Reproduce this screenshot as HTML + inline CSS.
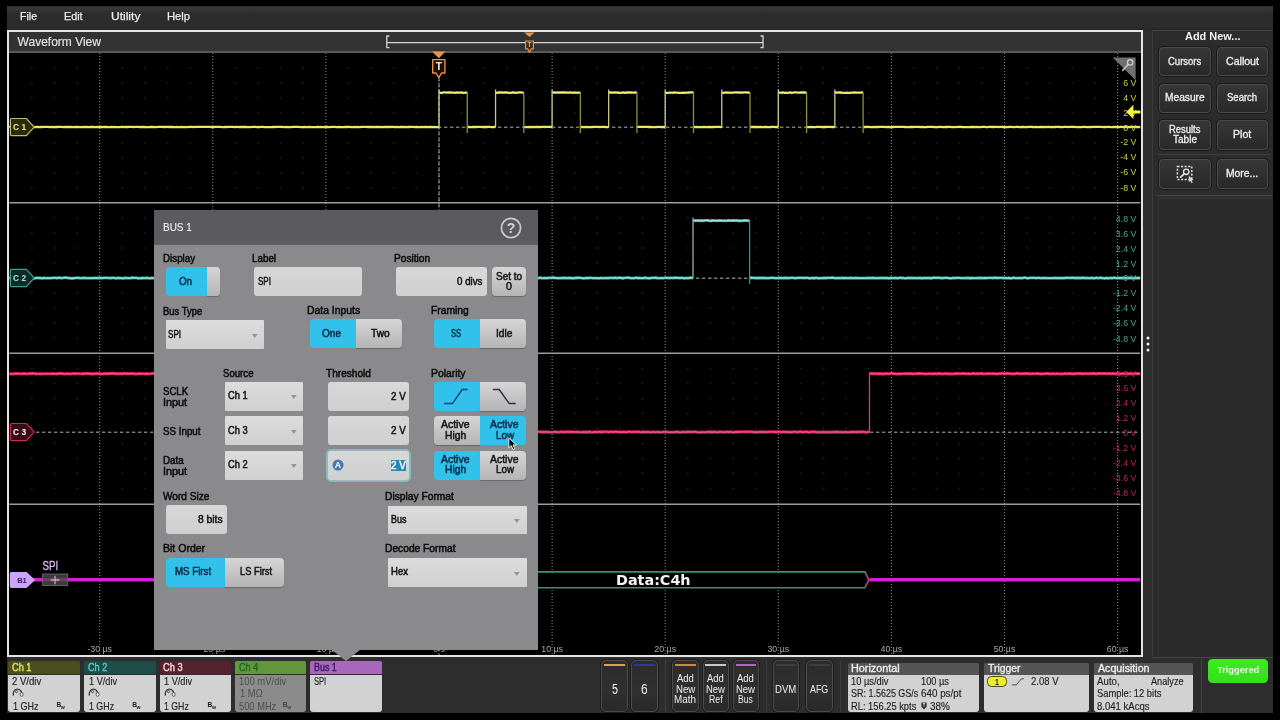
<!DOCTYPE html>
<html lang="en"><head><meta charset="utf-8"><title>Oscilloscope - BUS 1 SPI</title>
<style>
html,body{margin:0;padding:0;background:#000;}
body{width:1280px;height:720px;overflow:hidden;position:relative;font-family:"Liberation Sans",sans-serif;}
#app{position:absolute;left:0;top:0;width:1280px;height:720px;overflow:hidden;background:transparent;will-change:transform;}
#app div,#app span.t,#app svg{position:absolute;box-sizing:border-box;}
span.t{white-space:nowrap;display:block;}
.btn{border:1px solid #4a4a4a;border-radius:4px;background:linear-gradient(#363636,#303030 50%,#292929);box-shadow:0 0 0 1px #1b1b1b;}
.inp{background:linear-gradient(#d8d8d8,#cfcfcf);border-radius:3px;}
.gbtn{background:linear-gradient(#d6d6d6,#b4b4b4);}
.cy{background:#31c1eb;}
.bh{border-radius:1.5px 1.5px 0 0;}
.bb{border-radius:0 0 3px 3px;background:#d2d2d2;}
</style></head><body><div id="app">

<div style="left:7px;top:6px;width:1266px;height:707px;background:#2d2d2d;"></div>
<div style="left:7px;top:6.5px;width:1266px;height:23.5px;background:linear-gradient(#3a3a3a,#2c2c2c 32%,#2c2c2c 88%,#272727);"></div>
<span class="t" style="left:20.00px;top:10px;font-size:11px;line-height:12px;color:#ececec;-webkit-text-stroke:0.25px #ececec;transform:scaleX(0.9599);transform-origin:0 0;">File</span>
<span class="t" style="left:64.40px;top:10px;font-size:11px;line-height:12px;color:#ececec;-webkit-text-stroke:0.25px #ececec;transform:scaleX(0.9802);transform-origin:0 0;">Edit</span>
<span class="t" style="left:110.60px;top:10px;font-size:11px;line-height:12px;color:#ececec;-webkit-text-stroke:0.25px #ececec;transform:scaleX(1.0931);transform-origin:0 0;">Utility</span>
<span class="t" style="left:167.00px;top:10px;font-size:11px;line-height:12px;color:#ececec;-webkit-text-stroke:0.25px #ececec;transform:scaleX(1.0175);transform-origin:0 0;">Help</span>
<div style="left:7px;top:30px;width:1136px;height:627px;background:#000;border:2px solid #e4e4e4;"></div>
<div style="left:9px;top:32px;width:1132px;height:21px;background:#333333;border-bottom:2px solid #595959;"></div>
<span class="t" style="left:17.60px;top:35px;font-size:12px;line-height:14px;color:#e4e4e4;-webkit-text-stroke:0.15px #e4e4e4;transform:scaleX(1.0000);transform-origin:0 0;">Waveform View</span>
<svg width="1280" height="720" viewBox="0 0 1280 720" style="left:0;top:0" font-family='"Liberation Sans", sans-serif'>
<defs><clipPath id="pc"><rect x="9.2" y="53" width="1131.2" height="602"/></clipPath></defs>
<g clip-path="url(#pc)">
<path d="M30.6 68.0h2.4M31.8 66.8v2.4M53.3 68.0h2.4M54.5 66.8v2.4M75.9 68.0h2.4M77.1 66.8v2.4M98.5 68.0h2.4M99.7 66.8v2.4M121.1 68.0h2.4M122.3 66.8v2.4M143.7 68.0h2.4M144.9 66.8v2.4M166.4 68.0h2.4M167.6 66.8v2.4M189.0 68.0h2.4M190.2 66.8v2.4M211.6 68.0h2.4M212.8 66.8v2.4M234.2 68.0h2.4M235.4 66.8v2.4M256.8 68.0h2.4M258.0 66.8v2.4M279.5 68.0h2.4M280.7 66.8v2.4M302.1 68.0h2.4M303.3 66.8v2.4M324.7 68.0h2.4M325.9 66.8v2.4M347.3 68.0h2.4M348.5 66.8v2.4M369.9 68.0h2.4M371.1 66.8v2.4M392.6 68.0h2.4M393.8 66.8v2.4M415.2 68.0h2.4M416.4 66.8v2.4M437.8 68.0h2.4M439.0 66.8v2.4M460.4 68.0h2.4M461.6 66.8v2.4M483.0 68.0h2.4M484.2 66.8v2.4M505.7 68.0h2.4M506.9 66.8v2.4M528.3 68.0h2.4M529.5 66.8v2.4M550.9 68.0h2.4M552.1 66.8v2.4M573.5 68.0h2.4M574.7 66.8v2.4M596.1 68.0h2.4M597.3 66.8v2.4M618.8 68.0h2.4M620.0 66.8v2.4M641.4 68.0h2.4M642.6 66.8v2.4M664.0 68.0h2.4M665.2 66.8v2.4M686.6 68.0h2.4M687.8 66.8v2.4M709.2 68.0h2.4M710.4 66.8v2.4M731.9 68.0h2.4M733.1 66.8v2.4M754.5 68.0h2.4M755.7 66.8v2.4M777.1 68.0h2.4M778.3 66.8v2.4M799.7 68.0h2.4M800.9 66.8v2.4M822.3 68.0h2.4M823.5 66.8v2.4M845.0 68.0h2.4M846.2 66.8v2.4M867.6 68.0h2.4M868.8 66.8v2.4M890.2 68.0h2.4M891.4 66.8v2.4M912.8 68.0h2.4M914.0 66.8v2.4M935.4 68.0h2.4M936.6 66.8v2.4M958.1 68.0h2.4M959.3 66.8v2.4M980.7 68.0h2.4M981.9 66.8v2.4M1003.3 68.0h2.4M1004.5 66.8v2.4M1025.9 68.0h2.4M1027.1 66.8v2.4M1048.5 68.0h2.4M1049.7 66.8v2.4M1071.2 68.0h2.4M1072.4 66.8v2.4M1093.8 68.0h2.4M1095.0 66.8v2.4M1116.4 68.0h2.4M1117.6 66.8v2.4M30.6 83.0h2.4M31.8 81.8v2.4M53.3 83.0h2.4M54.5 81.8v2.4M75.9 83.0h2.4M77.1 81.8v2.4M98.5 83.0h2.4M99.7 81.8v2.4M121.1 83.0h2.4M122.3 81.8v2.4M143.7 83.0h2.4M144.9 81.8v2.4M166.4 83.0h2.4M167.6 81.8v2.4M189.0 83.0h2.4M190.2 81.8v2.4M211.6 83.0h2.4M212.8 81.8v2.4M234.2 83.0h2.4M235.4 81.8v2.4M256.8 83.0h2.4M258.0 81.8v2.4M279.5 83.0h2.4M280.7 81.8v2.4M302.1 83.0h2.4M303.3 81.8v2.4M324.7 83.0h2.4M325.9 81.8v2.4M347.3 83.0h2.4M348.5 81.8v2.4M369.9 83.0h2.4M371.1 81.8v2.4M392.6 83.0h2.4M393.8 81.8v2.4M415.2 83.0h2.4M416.4 81.8v2.4M437.8 83.0h2.4M439.0 81.8v2.4M460.4 83.0h2.4M461.6 81.8v2.4M483.0 83.0h2.4M484.2 81.8v2.4M505.7 83.0h2.4M506.9 81.8v2.4M528.3 83.0h2.4M529.5 81.8v2.4M550.9 83.0h2.4M552.1 81.8v2.4M573.5 83.0h2.4M574.7 81.8v2.4M596.1 83.0h2.4M597.3 81.8v2.4M618.8 83.0h2.4M620.0 81.8v2.4M641.4 83.0h2.4M642.6 81.8v2.4M664.0 83.0h2.4M665.2 81.8v2.4M686.6 83.0h2.4M687.8 81.8v2.4M709.2 83.0h2.4M710.4 81.8v2.4M731.9 83.0h2.4M733.1 81.8v2.4M754.5 83.0h2.4M755.7 81.8v2.4M777.1 83.0h2.4M778.3 81.8v2.4M799.7 83.0h2.4M800.9 81.8v2.4M822.3 83.0h2.4M823.5 81.8v2.4M845.0 83.0h2.4M846.2 81.8v2.4M867.6 83.0h2.4M868.8 81.8v2.4M890.2 83.0h2.4M891.4 81.8v2.4M912.8 83.0h2.4M914.0 81.8v2.4M935.4 83.0h2.4M936.6 81.8v2.4M958.1 83.0h2.4M959.3 81.8v2.4M980.7 83.0h2.4M981.9 81.8v2.4M1003.3 83.0h2.4M1004.5 81.8v2.4M1025.9 83.0h2.4M1027.1 81.8v2.4M1048.5 83.0h2.4M1049.7 81.8v2.4M1071.2 83.0h2.4M1072.4 81.8v2.4M1093.8 83.0h2.4M1095.0 81.8v2.4M1116.4 83.0h2.4M1117.6 81.8v2.4M30.6 98.0h2.4M31.8 96.8v2.4M53.3 98.0h2.4M54.5 96.8v2.4M75.9 98.0h2.4M77.1 96.8v2.4M98.5 98.0h2.4M99.7 96.8v2.4M121.1 98.0h2.4M122.3 96.8v2.4M143.7 98.0h2.4M144.9 96.8v2.4M166.4 98.0h2.4M167.6 96.8v2.4M189.0 98.0h2.4M190.2 96.8v2.4M211.6 98.0h2.4M212.8 96.8v2.4M234.2 98.0h2.4M235.4 96.8v2.4M256.8 98.0h2.4M258.0 96.8v2.4M279.5 98.0h2.4M280.7 96.8v2.4M302.1 98.0h2.4M303.3 96.8v2.4M324.7 98.0h2.4M325.9 96.8v2.4M347.3 98.0h2.4M348.5 96.8v2.4M369.9 98.0h2.4M371.1 96.8v2.4M392.6 98.0h2.4M393.8 96.8v2.4M415.2 98.0h2.4M416.4 96.8v2.4M437.8 98.0h2.4M439.0 96.8v2.4M460.4 98.0h2.4M461.6 96.8v2.4M483.0 98.0h2.4M484.2 96.8v2.4M505.7 98.0h2.4M506.9 96.8v2.4M528.3 98.0h2.4M529.5 96.8v2.4M550.9 98.0h2.4M552.1 96.8v2.4M573.5 98.0h2.4M574.7 96.8v2.4M596.1 98.0h2.4M597.3 96.8v2.4M618.8 98.0h2.4M620.0 96.8v2.4M641.4 98.0h2.4M642.6 96.8v2.4M664.0 98.0h2.4M665.2 96.8v2.4M686.6 98.0h2.4M687.8 96.8v2.4M709.2 98.0h2.4M710.4 96.8v2.4M731.9 98.0h2.4M733.1 96.8v2.4M754.5 98.0h2.4M755.7 96.8v2.4M777.1 98.0h2.4M778.3 96.8v2.4M799.7 98.0h2.4M800.9 96.8v2.4M822.3 98.0h2.4M823.5 96.8v2.4M845.0 98.0h2.4M846.2 96.8v2.4M867.6 98.0h2.4M868.8 96.8v2.4M890.2 98.0h2.4M891.4 96.8v2.4M912.8 98.0h2.4M914.0 96.8v2.4M935.4 98.0h2.4M936.6 96.8v2.4M958.1 98.0h2.4M959.3 96.8v2.4M980.7 98.0h2.4M981.9 96.8v2.4M1003.3 98.0h2.4M1004.5 96.8v2.4M1025.9 98.0h2.4M1027.1 96.8v2.4M1048.5 98.0h2.4M1049.7 96.8v2.4M1071.2 98.0h2.4M1072.4 96.8v2.4M1093.8 98.0h2.4M1095.0 96.8v2.4M1116.4 98.0h2.4M1117.6 96.8v2.4M30.6 113.0h2.4M31.8 111.8v2.4M53.3 113.0h2.4M54.5 111.8v2.4M75.9 113.0h2.4M77.1 111.8v2.4M98.5 113.0h2.4M99.7 111.8v2.4M121.1 113.0h2.4M122.3 111.8v2.4M143.7 113.0h2.4M144.9 111.8v2.4M166.4 113.0h2.4M167.6 111.8v2.4M189.0 113.0h2.4M190.2 111.8v2.4M211.6 113.0h2.4M212.8 111.8v2.4M234.2 113.0h2.4M235.4 111.8v2.4M256.8 113.0h2.4M258.0 111.8v2.4M279.5 113.0h2.4M280.7 111.8v2.4M302.1 113.0h2.4M303.3 111.8v2.4M324.7 113.0h2.4M325.9 111.8v2.4M347.3 113.0h2.4M348.5 111.8v2.4M369.9 113.0h2.4M371.1 111.8v2.4M392.6 113.0h2.4M393.8 111.8v2.4M415.2 113.0h2.4M416.4 111.8v2.4M437.8 113.0h2.4M439.0 111.8v2.4M460.4 113.0h2.4M461.6 111.8v2.4M483.0 113.0h2.4M484.2 111.8v2.4M505.7 113.0h2.4M506.9 111.8v2.4M528.3 113.0h2.4M529.5 111.8v2.4M550.9 113.0h2.4M552.1 111.8v2.4M573.5 113.0h2.4M574.7 111.8v2.4M596.1 113.0h2.4M597.3 111.8v2.4M618.8 113.0h2.4M620.0 111.8v2.4M641.4 113.0h2.4M642.6 111.8v2.4M664.0 113.0h2.4M665.2 111.8v2.4M686.6 113.0h2.4M687.8 111.8v2.4M709.2 113.0h2.4M710.4 111.8v2.4M731.9 113.0h2.4M733.1 111.8v2.4M754.5 113.0h2.4M755.7 111.8v2.4M777.1 113.0h2.4M778.3 111.8v2.4M799.7 113.0h2.4M800.9 111.8v2.4M822.3 113.0h2.4M823.5 111.8v2.4M845.0 113.0h2.4M846.2 111.8v2.4M867.6 113.0h2.4M868.8 111.8v2.4M890.2 113.0h2.4M891.4 111.8v2.4M912.8 113.0h2.4M914.0 111.8v2.4M935.4 113.0h2.4M936.6 111.8v2.4M958.1 113.0h2.4M959.3 111.8v2.4M980.7 113.0h2.4M981.9 111.8v2.4M1003.3 113.0h2.4M1004.5 111.8v2.4M1025.9 113.0h2.4M1027.1 111.8v2.4M1048.5 113.0h2.4M1049.7 111.8v2.4M1071.2 113.0h2.4M1072.4 111.8v2.4M1093.8 113.0h2.4M1095.0 111.8v2.4M1116.4 113.0h2.4M1117.6 111.8v2.4M30.6 128.0h2.4M31.8 126.8v2.4M53.3 128.0h2.4M54.5 126.8v2.4M75.9 128.0h2.4M77.1 126.8v2.4M98.5 128.0h2.4M99.7 126.8v2.4M121.1 128.0h2.4M122.3 126.8v2.4M143.7 128.0h2.4M144.9 126.8v2.4M166.4 128.0h2.4M167.6 126.8v2.4M189.0 128.0h2.4M190.2 126.8v2.4M211.6 128.0h2.4M212.8 126.8v2.4M234.2 128.0h2.4M235.4 126.8v2.4M256.8 128.0h2.4M258.0 126.8v2.4M279.5 128.0h2.4M280.7 126.8v2.4M302.1 128.0h2.4M303.3 126.8v2.4M324.7 128.0h2.4M325.9 126.8v2.4M347.3 128.0h2.4M348.5 126.8v2.4M369.9 128.0h2.4M371.1 126.8v2.4M392.6 128.0h2.4M393.8 126.8v2.4M415.2 128.0h2.4M416.4 126.8v2.4M437.8 128.0h2.4M439.0 126.8v2.4M460.4 128.0h2.4M461.6 126.8v2.4M483.0 128.0h2.4M484.2 126.8v2.4M505.7 128.0h2.4M506.9 126.8v2.4M528.3 128.0h2.4M529.5 126.8v2.4M550.9 128.0h2.4M552.1 126.8v2.4M573.5 128.0h2.4M574.7 126.8v2.4M596.1 128.0h2.4M597.3 126.8v2.4M618.8 128.0h2.4M620.0 126.8v2.4M641.4 128.0h2.4M642.6 126.8v2.4M664.0 128.0h2.4M665.2 126.8v2.4M686.6 128.0h2.4M687.8 126.8v2.4M709.2 128.0h2.4M710.4 126.8v2.4M731.9 128.0h2.4M733.1 126.8v2.4M754.5 128.0h2.4M755.7 126.8v2.4M777.1 128.0h2.4M778.3 126.8v2.4M799.7 128.0h2.4M800.9 126.8v2.4M822.3 128.0h2.4M823.5 126.8v2.4M845.0 128.0h2.4M846.2 126.8v2.4M867.6 128.0h2.4M868.8 126.8v2.4M890.2 128.0h2.4M891.4 126.8v2.4M912.8 128.0h2.4M914.0 126.8v2.4M935.4 128.0h2.4M936.6 126.8v2.4M958.1 128.0h2.4M959.3 126.8v2.4M980.7 128.0h2.4M981.9 126.8v2.4M1003.3 128.0h2.4M1004.5 126.8v2.4M1025.9 128.0h2.4M1027.1 126.8v2.4M1048.5 128.0h2.4M1049.7 126.8v2.4M1071.2 128.0h2.4M1072.4 126.8v2.4M1093.8 128.0h2.4M1095.0 126.8v2.4M1116.4 128.0h2.4M1117.6 126.8v2.4M30.6 143.0h2.4M31.8 141.8v2.4M53.3 143.0h2.4M54.5 141.8v2.4M75.9 143.0h2.4M77.1 141.8v2.4M98.5 143.0h2.4M99.7 141.8v2.4M121.1 143.0h2.4M122.3 141.8v2.4M143.7 143.0h2.4M144.9 141.8v2.4M166.4 143.0h2.4M167.6 141.8v2.4M189.0 143.0h2.4M190.2 141.8v2.4M211.6 143.0h2.4M212.8 141.8v2.4M234.2 143.0h2.4M235.4 141.8v2.4M256.8 143.0h2.4M258.0 141.8v2.4M279.5 143.0h2.4M280.7 141.8v2.4M302.1 143.0h2.4M303.3 141.8v2.4M324.7 143.0h2.4M325.9 141.8v2.4M347.3 143.0h2.4M348.5 141.8v2.4M369.9 143.0h2.4M371.1 141.8v2.4M392.6 143.0h2.4M393.8 141.8v2.4M415.2 143.0h2.4M416.4 141.8v2.4M437.8 143.0h2.4M439.0 141.8v2.4M460.4 143.0h2.4M461.6 141.8v2.4M483.0 143.0h2.4M484.2 141.8v2.4M505.7 143.0h2.4M506.9 141.8v2.4M528.3 143.0h2.4M529.5 141.8v2.4M550.9 143.0h2.4M552.1 141.8v2.4M573.5 143.0h2.4M574.7 141.8v2.4M596.1 143.0h2.4M597.3 141.8v2.4M618.8 143.0h2.4M620.0 141.8v2.4M641.4 143.0h2.4M642.6 141.8v2.4M664.0 143.0h2.4M665.2 141.8v2.4M686.6 143.0h2.4M687.8 141.8v2.4M709.2 143.0h2.4M710.4 141.8v2.4M731.9 143.0h2.4M733.1 141.8v2.4M754.5 143.0h2.4M755.7 141.8v2.4M777.1 143.0h2.4M778.3 141.8v2.4M799.7 143.0h2.4M800.9 141.8v2.4M822.3 143.0h2.4M823.5 141.8v2.4M845.0 143.0h2.4M846.2 141.8v2.4M867.6 143.0h2.4M868.8 141.8v2.4M890.2 143.0h2.4M891.4 141.8v2.4M912.8 143.0h2.4M914.0 141.8v2.4M935.4 143.0h2.4M936.6 141.8v2.4M958.1 143.0h2.4M959.3 141.8v2.4M980.7 143.0h2.4M981.9 141.8v2.4M1003.3 143.0h2.4M1004.5 141.8v2.4M1025.9 143.0h2.4M1027.1 141.8v2.4M1048.5 143.0h2.4M1049.7 141.8v2.4M1071.2 143.0h2.4M1072.4 141.8v2.4M1093.8 143.0h2.4M1095.0 141.8v2.4M1116.4 143.0h2.4M1117.6 141.8v2.4M30.6 158.0h2.4M31.8 156.8v2.4M53.3 158.0h2.4M54.5 156.8v2.4M75.9 158.0h2.4M77.1 156.8v2.4M98.5 158.0h2.4M99.7 156.8v2.4M121.1 158.0h2.4M122.3 156.8v2.4M143.7 158.0h2.4M144.9 156.8v2.4M166.4 158.0h2.4M167.6 156.8v2.4M189.0 158.0h2.4M190.2 156.8v2.4M211.6 158.0h2.4M212.8 156.8v2.4M234.2 158.0h2.4M235.4 156.8v2.4M256.8 158.0h2.4M258.0 156.8v2.4M279.5 158.0h2.4M280.7 156.8v2.4M302.1 158.0h2.4M303.3 156.8v2.4M324.7 158.0h2.4M325.9 156.8v2.4M347.3 158.0h2.4M348.5 156.8v2.4M369.9 158.0h2.4M371.1 156.8v2.4M392.6 158.0h2.4M393.8 156.8v2.4M415.2 158.0h2.4M416.4 156.8v2.4M437.8 158.0h2.4M439.0 156.8v2.4M460.4 158.0h2.4M461.6 156.8v2.4M483.0 158.0h2.4M484.2 156.8v2.4M505.7 158.0h2.4M506.9 156.8v2.4M528.3 158.0h2.4M529.5 156.8v2.4M550.9 158.0h2.4M552.1 156.8v2.4M573.5 158.0h2.4M574.7 156.8v2.4M596.1 158.0h2.4M597.3 156.8v2.4M618.8 158.0h2.4M620.0 156.8v2.4M641.4 158.0h2.4M642.6 156.8v2.4M664.0 158.0h2.4M665.2 156.8v2.4M686.6 158.0h2.4M687.8 156.8v2.4M709.2 158.0h2.4M710.4 156.8v2.4M731.9 158.0h2.4M733.1 156.8v2.4M754.5 158.0h2.4M755.7 156.8v2.4M777.1 158.0h2.4M778.3 156.8v2.4M799.7 158.0h2.4M800.9 156.8v2.4M822.3 158.0h2.4M823.5 156.8v2.4M845.0 158.0h2.4M846.2 156.8v2.4M867.6 158.0h2.4M868.8 156.8v2.4M890.2 158.0h2.4M891.4 156.8v2.4M912.8 158.0h2.4M914.0 156.8v2.4M935.4 158.0h2.4M936.6 156.8v2.4M958.1 158.0h2.4M959.3 156.8v2.4M980.7 158.0h2.4M981.9 156.8v2.4M1003.3 158.0h2.4M1004.5 156.8v2.4M1025.9 158.0h2.4M1027.1 156.8v2.4M1048.5 158.0h2.4M1049.7 156.8v2.4M1071.2 158.0h2.4M1072.4 156.8v2.4M1093.8 158.0h2.4M1095.0 156.8v2.4M1116.4 158.0h2.4M1117.6 156.8v2.4M30.6 173.0h2.4M31.8 171.8v2.4M53.3 173.0h2.4M54.5 171.8v2.4M75.9 173.0h2.4M77.1 171.8v2.4M98.5 173.0h2.4M99.7 171.8v2.4M121.1 173.0h2.4M122.3 171.8v2.4M143.7 173.0h2.4M144.9 171.8v2.4M166.4 173.0h2.4M167.6 171.8v2.4M189.0 173.0h2.4M190.2 171.8v2.4M211.6 173.0h2.4M212.8 171.8v2.4M234.2 173.0h2.4M235.4 171.8v2.4M256.8 173.0h2.4M258.0 171.8v2.4M279.5 173.0h2.4M280.7 171.8v2.4M302.1 173.0h2.4M303.3 171.8v2.4M324.7 173.0h2.4M325.9 171.8v2.4M347.3 173.0h2.4M348.5 171.8v2.4M369.9 173.0h2.4M371.1 171.8v2.4M392.6 173.0h2.4M393.8 171.8v2.4M415.2 173.0h2.4M416.4 171.8v2.4M437.8 173.0h2.4M439.0 171.8v2.4M460.4 173.0h2.4M461.6 171.8v2.4M483.0 173.0h2.4M484.2 171.8v2.4M505.7 173.0h2.4M506.9 171.8v2.4M528.3 173.0h2.4M529.5 171.8v2.4M550.9 173.0h2.4M552.1 171.8v2.4M573.5 173.0h2.4M574.7 171.8v2.4M596.1 173.0h2.4M597.3 171.8v2.4M618.8 173.0h2.4M620.0 171.8v2.4M641.4 173.0h2.4M642.6 171.8v2.4M664.0 173.0h2.4M665.2 171.8v2.4M686.6 173.0h2.4M687.8 171.8v2.4M709.2 173.0h2.4M710.4 171.8v2.4M731.9 173.0h2.4M733.1 171.8v2.4M754.5 173.0h2.4M755.7 171.8v2.4M777.1 173.0h2.4M778.3 171.8v2.4M799.7 173.0h2.4M800.9 171.8v2.4M822.3 173.0h2.4M823.5 171.8v2.4M845.0 173.0h2.4M846.2 171.8v2.4M867.6 173.0h2.4M868.8 171.8v2.4M890.2 173.0h2.4M891.4 171.8v2.4M912.8 173.0h2.4M914.0 171.8v2.4M935.4 173.0h2.4M936.6 171.8v2.4M958.1 173.0h2.4M959.3 171.8v2.4M980.7 173.0h2.4M981.9 171.8v2.4M1003.3 173.0h2.4M1004.5 171.8v2.4M1025.9 173.0h2.4M1027.1 171.8v2.4M1048.5 173.0h2.4M1049.7 171.8v2.4M1071.2 173.0h2.4M1072.4 171.8v2.4M1093.8 173.0h2.4M1095.0 171.8v2.4M1116.4 173.0h2.4M1117.6 171.8v2.4M30.6 188.0h2.4M31.8 186.8v2.4M53.3 188.0h2.4M54.5 186.8v2.4M75.9 188.0h2.4M77.1 186.8v2.4M98.5 188.0h2.4M99.7 186.8v2.4M121.1 188.0h2.4M122.3 186.8v2.4M143.7 188.0h2.4M144.9 186.8v2.4M166.4 188.0h2.4M167.6 186.8v2.4M189.0 188.0h2.4M190.2 186.8v2.4M211.6 188.0h2.4M212.8 186.8v2.4M234.2 188.0h2.4M235.4 186.8v2.4M256.8 188.0h2.4M258.0 186.8v2.4M279.5 188.0h2.4M280.7 186.8v2.4M302.1 188.0h2.4M303.3 186.8v2.4M324.7 188.0h2.4M325.9 186.8v2.4M347.3 188.0h2.4M348.5 186.8v2.4M369.9 188.0h2.4M371.1 186.8v2.4M392.6 188.0h2.4M393.8 186.8v2.4M415.2 188.0h2.4M416.4 186.8v2.4M437.8 188.0h2.4M439.0 186.8v2.4M460.4 188.0h2.4M461.6 186.8v2.4M483.0 188.0h2.4M484.2 186.8v2.4M505.7 188.0h2.4M506.9 186.8v2.4M528.3 188.0h2.4M529.5 186.8v2.4M550.9 188.0h2.4M552.1 186.8v2.4M573.5 188.0h2.4M574.7 186.8v2.4M596.1 188.0h2.4M597.3 186.8v2.4M618.8 188.0h2.4M620.0 186.8v2.4M641.4 188.0h2.4M642.6 186.8v2.4M664.0 188.0h2.4M665.2 186.8v2.4M686.6 188.0h2.4M687.8 186.8v2.4M709.2 188.0h2.4M710.4 186.8v2.4M731.9 188.0h2.4M733.1 186.8v2.4M754.5 188.0h2.4M755.7 186.8v2.4M777.1 188.0h2.4M778.3 186.8v2.4M799.7 188.0h2.4M800.9 186.8v2.4M822.3 188.0h2.4M823.5 186.8v2.4M845.0 188.0h2.4M846.2 186.8v2.4M867.6 188.0h2.4M868.8 186.8v2.4M890.2 188.0h2.4M891.4 186.8v2.4M912.8 188.0h2.4M914.0 186.8v2.4M935.4 188.0h2.4M936.6 186.8v2.4M958.1 188.0h2.4M959.3 186.8v2.4M980.7 188.0h2.4M981.9 186.8v2.4M1003.3 188.0h2.4M1004.5 186.8v2.4M1025.9 188.0h2.4M1027.1 186.8v2.4M1048.5 188.0h2.4M1049.7 186.8v2.4M1071.2 188.0h2.4M1072.4 186.8v2.4M1093.8 188.0h2.4M1095.0 186.8v2.4M1116.4 188.0h2.4M1117.6 186.8v2.4M30.6 218.0h2.4M31.8 216.8v2.4M53.3 218.0h2.4M54.5 216.8v2.4M75.9 218.0h2.4M77.1 216.8v2.4M98.5 218.0h2.4M99.7 216.8v2.4M121.1 218.0h2.4M122.3 216.8v2.4M143.7 218.0h2.4M144.9 216.8v2.4M166.4 218.0h2.4M167.6 216.8v2.4M189.0 218.0h2.4M190.2 216.8v2.4M211.6 218.0h2.4M212.8 216.8v2.4M234.2 218.0h2.4M235.4 216.8v2.4M256.8 218.0h2.4M258.0 216.8v2.4M279.5 218.0h2.4M280.7 216.8v2.4M302.1 218.0h2.4M303.3 216.8v2.4M324.7 218.0h2.4M325.9 216.8v2.4M347.3 218.0h2.4M348.5 216.8v2.4M369.9 218.0h2.4M371.1 216.8v2.4M392.6 218.0h2.4M393.8 216.8v2.4M415.2 218.0h2.4M416.4 216.8v2.4M437.8 218.0h2.4M439.0 216.8v2.4M460.4 218.0h2.4M461.6 216.8v2.4M483.0 218.0h2.4M484.2 216.8v2.4M505.7 218.0h2.4M506.9 216.8v2.4M528.3 218.0h2.4M529.5 216.8v2.4M550.9 218.0h2.4M552.1 216.8v2.4M573.5 218.0h2.4M574.7 216.8v2.4M596.1 218.0h2.4M597.3 216.8v2.4M618.8 218.0h2.4M620.0 216.8v2.4M641.4 218.0h2.4M642.6 216.8v2.4M664.0 218.0h2.4M665.2 216.8v2.4M686.6 218.0h2.4M687.8 216.8v2.4M709.2 218.0h2.4M710.4 216.8v2.4M731.9 218.0h2.4M733.1 216.8v2.4M754.5 218.0h2.4M755.7 216.8v2.4M777.1 218.0h2.4M778.3 216.8v2.4M799.7 218.0h2.4M800.9 216.8v2.4M822.3 218.0h2.4M823.5 216.8v2.4M845.0 218.0h2.4M846.2 216.8v2.4M867.6 218.0h2.4M868.8 216.8v2.4M890.2 218.0h2.4M891.4 216.8v2.4M912.8 218.0h2.4M914.0 216.8v2.4M935.4 218.0h2.4M936.6 216.8v2.4M958.1 218.0h2.4M959.3 216.8v2.4M980.7 218.0h2.4M981.9 216.8v2.4M1003.3 218.0h2.4M1004.5 216.8v2.4M1025.9 218.0h2.4M1027.1 216.8v2.4M1048.5 218.0h2.4M1049.7 216.8v2.4M1071.2 218.0h2.4M1072.4 216.8v2.4M1093.8 218.0h2.4M1095.0 216.8v2.4M1116.4 218.0h2.4M1117.6 216.8v2.4M30.6 233.0h2.4M31.8 231.8v2.4M53.3 233.0h2.4M54.5 231.8v2.4M75.9 233.0h2.4M77.1 231.8v2.4M98.5 233.0h2.4M99.7 231.8v2.4M121.1 233.0h2.4M122.3 231.8v2.4M143.7 233.0h2.4M144.9 231.8v2.4M166.4 233.0h2.4M167.6 231.8v2.4M189.0 233.0h2.4M190.2 231.8v2.4M211.6 233.0h2.4M212.8 231.8v2.4M234.2 233.0h2.4M235.4 231.8v2.4M256.8 233.0h2.4M258.0 231.8v2.4M279.5 233.0h2.4M280.7 231.8v2.4M302.1 233.0h2.4M303.3 231.8v2.4M324.7 233.0h2.4M325.9 231.8v2.4M347.3 233.0h2.4M348.5 231.8v2.4M369.9 233.0h2.4M371.1 231.8v2.4M392.6 233.0h2.4M393.8 231.8v2.4M415.2 233.0h2.4M416.4 231.8v2.4M437.8 233.0h2.4M439.0 231.8v2.4M460.4 233.0h2.4M461.6 231.8v2.4M483.0 233.0h2.4M484.2 231.8v2.4M505.7 233.0h2.4M506.9 231.8v2.4M528.3 233.0h2.4M529.5 231.8v2.4M550.9 233.0h2.4M552.1 231.8v2.4M573.5 233.0h2.4M574.7 231.8v2.4M596.1 233.0h2.4M597.3 231.8v2.4M618.8 233.0h2.4M620.0 231.8v2.4M641.4 233.0h2.4M642.6 231.8v2.4M664.0 233.0h2.4M665.2 231.8v2.4M686.6 233.0h2.4M687.8 231.8v2.4M709.2 233.0h2.4M710.4 231.8v2.4M731.9 233.0h2.4M733.1 231.8v2.4M754.5 233.0h2.4M755.7 231.8v2.4M777.1 233.0h2.4M778.3 231.8v2.4M799.7 233.0h2.4M800.9 231.8v2.4M822.3 233.0h2.4M823.5 231.8v2.4M845.0 233.0h2.4M846.2 231.8v2.4M867.6 233.0h2.4M868.8 231.8v2.4M890.2 233.0h2.4M891.4 231.8v2.4M912.8 233.0h2.4M914.0 231.8v2.4M935.4 233.0h2.4M936.6 231.8v2.4M958.1 233.0h2.4M959.3 231.8v2.4M980.7 233.0h2.4M981.9 231.8v2.4M1003.3 233.0h2.4M1004.5 231.8v2.4M1025.9 233.0h2.4M1027.1 231.8v2.4M1048.5 233.0h2.4M1049.7 231.8v2.4M1071.2 233.0h2.4M1072.4 231.8v2.4M1093.8 233.0h2.4M1095.0 231.8v2.4M1116.4 233.0h2.4M1117.6 231.8v2.4M30.6 248.0h2.4M31.8 246.8v2.4M53.3 248.0h2.4M54.5 246.8v2.4M75.9 248.0h2.4M77.1 246.8v2.4M98.5 248.0h2.4M99.7 246.8v2.4M121.1 248.0h2.4M122.3 246.8v2.4M143.7 248.0h2.4M144.9 246.8v2.4M166.4 248.0h2.4M167.6 246.8v2.4M189.0 248.0h2.4M190.2 246.8v2.4M211.6 248.0h2.4M212.8 246.8v2.4M234.2 248.0h2.4M235.4 246.8v2.4M256.8 248.0h2.4M258.0 246.8v2.4M279.5 248.0h2.4M280.7 246.8v2.4M302.1 248.0h2.4M303.3 246.8v2.4M324.7 248.0h2.4M325.9 246.8v2.4M347.3 248.0h2.4M348.5 246.8v2.4M369.9 248.0h2.4M371.1 246.8v2.4M392.6 248.0h2.4M393.8 246.8v2.4M415.2 248.0h2.4M416.4 246.8v2.4M437.8 248.0h2.4M439.0 246.8v2.4M460.4 248.0h2.4M461.6 246.8v2.4M483.0 248.0h2.4M484.2 246.8v2.4M505.7 248.0h2.4M506.9 246.8v2.4M528.3 248.0h2.4M529.5 246.8v2.4M550.9 248.0h2.4M552.1 246.8v2.4M573.5 248.0h2.4M574.7 246.8v2.4M596.1 248.0h2.4M597.3 246.8v2.4M618.8 248.0h2.4M620.0 246.8v2.4M641.4 248.0h2.4M642.6 246.8v2.4M664.0 248.0h2.4M665.2 246.8v2.4M686.6 248.0h2.4M687.8 246.8v2.4M709.2 248.0h2.4M710.4 246.8v2.4M731.9 248.0h2.4M733.1 246.8v2.4M754.5 248.0h2.4M755.7 246.8v2.4M777.1 248.0h2.4M778.3 246.8v2.4M799.7 248.0h2.4M800.9 246.8v2.4M822.3 248.0h2.4M823.5 246.8v2.4M845.0 248.0h2.4M846.2 246.8v2.4M867.6 248.0h2.4M868.8 246.8v2.4M890.2 248.0h2.4M891.4 246.8v2.4M912.8 248.0h2.4M914.0 246.8v2.4M935.4 248.0h2.4M936.6 246.8v2.4M958.1 248.0h2.4M959.3 246.8v2.4M980.7 248.0h2.4M981.9 246.8v2.4M1003.3 248.0h2.4M1004.5 246.8v2.4M1025.9 248.0h2.4M1027.1 246.8v2.4M1048.5 248.0h2.4M1049.7 246.8v2.4M1071.2 248.0h2.4M1072.4 246.8v2.4M1093.8 248.0h2.4M1095.0 246.8v2.4M1116.4 248.0h2.4M1117.6 246.8v2.4M30.6 263.0h2.4M31.8 261.8v2.4M53.3 263.0h2.4M54.5 261.8v2.4M75.9 263.0h2.4M77.1 261.8v2.4M98.5 263.0h2.4M99.7 261.8v2.4M121.1 263.0h2.4M122.3 261.8v2.4M143.7 263.0h2.4M144.9 261.8v2.4M166.4 263.0h2.4M167.6 261.8v2.4M189.0 263.0h2.4M190.2 261.8v2.4M211.6 263.0h2.4M212.8 261.8v2.4M234.2 263.0h2.4M235.4 261.8v2.4M256.8 263.0h2.4M258.0 261.8v2.4M279.5 263.0h2.4M280.7 261.8v2.4M302.1 263.0h2.4M303.3 261.8v2.4M324.7 263.0h2.4M325.9 261.8v2.4M347.3 263.0h2.4M348.5 261.8v2.4M369.9 263.0h2.4M371.1 261.8v2.4M392.6 263.0h2.4M393.8 261.8v2.4M415.2 263.0h2.4M416.4 261.8v2.4M437.8 263.0h2.4M439.0 261.8v2.4M460.4 263.0h2.4M461.6 261.8v2.4M483.0 263.0h2.4M484.2 261.8v2.4M505.7 263.0h2.4M506.9 261.8v2.4M528.3 263.0h2.4M529.5 261.8v2.4M550.9 263.0h2.4M552.1 261.8v2.4M573.5 263.0h2.4M574.7 261.8v2.4M596.1 263.0h2.4M597.3 261.8v2.4M618.8 263.0h2.4M620.0 261.8v2.4M641.4 263.0h2.4M642.6 261.8v2.4M664.0 263.0h2.4M665.2 261.8v2.4M686.6 263.0h2.4M687.8 261.8v2.4M709.2 263.0h2.4M710.4 261.8v2.4M731.9 263.0h2.4M733.1 261.8v2.4M754.5 263.0h2.4M755.7 261.8v2.4M777.1 263.0h2.4M778.3 261.8v2.4M799.7 263.0h2.4M800.9 261.8v2.4M822.3 263.0h2.4M823.5 261.8v2.4M845.0 263.0h2.4M846.2 261.8v2.4M867.6 263.0h2.4M868.8 261.8v2.4M890.2 263.0h2.4M891.4 261.8v2.4M912.8 263.0h2.4M914.0 261.8v2.4M935.4 263.0h2.4M936.6 261.8v2.4M958.1 263.0h2.4M959.3 261.8v2.4M980.7 263.0h2.4M981.9 261.8v2.4M1003.3 263.0h2.4M1004.5 261.8v2.4M1025.9 263.0h2.4M1027.1 261.8v2.4M1048.5 263.0h2.4M1049.7 261.8v2.4M1071.2 263.0h2.4M1072.4 261.8v2.4M1093.8 263.0h2.4M1095.0 261.8v2.4M1116.4 263.0h2.4M1117.6 261.8v2.4M30.6 278.0h2.4M31.8 276.8v2.4M53.3 278.0h2.4M54.5 276.8v2.4M75.9 278.0h2.4M77.1 276.8v2.4M98.5 278.0h2.4M99.7 276.8v2.4M121.1 278.0h2.4M122.3 276.8v2.4M143.7 278.0h2.4M144.9 276.8v2.4M166.4 278.0h2.4M167.6 276.8v2.4M189.0 278.0h2.4M190.2 276.8v2.4M211.6 278.0h2.4M212.8 276.8v2.4M234.2 278.0h2.4M235.4 276.8v2.4M256.8 278.0h2.4M258.0 276.8v2.4M279.5 278.0h2.4M280.7 276.8v2.4M302.1 278.0h2.4M303.3 276.8v2.4M324.7 278.0h2.4M325.9 276.8v2.4M347.3 278.0h2.4M348.5 276.8v2.4M369.9 278.0h2.4M371.1 276.8v2.4M392.6 278.0h2.4M393.8 276.8v2.4M415.2 278.0h2.4M416.4 276.8v2.4M437.8 278.0h2.4M439.0 276.8v2.4M460.4 278.0h2.4M461.6 276.8v2.4M483.0 278.0h2.4M484.2 276.8v2.4M505.7 278.0h2.4M506.9 276.8v2.4M528.3 278.0h2.4M529.5 276.8v2.4M550.9 278.0h2.4M552.1 276.8v2.4M573.5 278.0h2.4M574.7 276.8v2.4M596.1 278.0h2.4M597.3 276.8v2.4M618.8 278.0h2.4M620.0 276.8v2.4M641.4 278.0h2.4M642.6 276.8v2.4M664.0 278.0h2.4M665.2 276.8v2.4M686.6 278.0h2.4M687.8 276.8v2.4M709.2 278.0h2.4M710.4 276.8v2.4M731.9 278.0h2.4M733.1 276.8v2.4M754.5 278.0h2.4M755.7 276.8v2.4M777.1 278.0h2.4M778.3 276.8v2.4M799.7 278.0h2.4M800.9 276.8v2.4M822.3 278.0h2.4M823.5 276.8v2.4M845.0 278.0h2.4M846.2 276.8v2.4M867.6 278.0h2.4M868.8 276.8v2.4M890.2 278.0h2.4M891.4 276.8v2.4M912.8 278.0h2.4M914.0 276.8v2.4M935.4 278.0h2.4M936.6 276.8v2.4M958.1 278.0h2.4M959.3 276.8v2.4M980.7 278.0h2.4M981.9 276.8v2.4M1003.3 278.0h2.4M1004.5 276.8v2.4M1025.9 278.0h2.4M1027.1 276.8v2.4M1048.5 278.0h2.4M1049.7 276.8v2.4M1071.2 278.0h2.4M1072.4 276.8v2.4M1093.8 278.0h2.4M1095.0 276.8v2.4M1116.4 278.0h2.4M1117.6 276.8v2.4M30.6 293.0h2.4M31.8 291.8v2.4M53.3 293.0h2.4M54.5 291.8v2.4M75.9 293.0h2.4M77.1 291.8v2.4M98.5 293.0h2.4M99.7 291.8v2.4M121.1 293.0h2.4M122.3 291.8v2.4M143.7 293.0h2.4M144.9 291.8v2.4M166.4 293.0h2.4M167.6 291.8v2.4M189.0 293.0h2.4M190.2 291.8v2.4M211.6 293.0h2.4M212.8 291.8v2.4M234.2 293.0h2.4M235.4 291.8v2.4M256.8 293.0h2.4M258.0 291.8v2.4M279.5 293.0h2.4M280.7 291.8v2.4M302.1 293.0h2.4M303.3 291.8v2.4M324.7 293.0h2.4M325.9 291.8v2.4M347.3 293.0h2.4M348.5 291.8v2.4M369.9 293.0h2.4M371.1 291.8v2.4M392.6 293.0h2.4M393.8 291.8v2.4M415.2 293.0h2.4M416.4 291.8v2.4M437.8 293.0h2.4M439.0 291.8v2.4M460.4 293.0h2.4M461.6 291.8v2.4M483.0 293.0h2.4M484.2 291.8v2.4M505.7 293.0h2.4M506.9 291.8v2.4M528.3 293.0h2.4M529.5 291.8v2.4M550.9 293.0h2.4M552.1 291.8v2.4M573.5 293.0h2.4M574.7 291.8v2.4M596.1 293.0h2.4M597.3 291.8v2.4M618.8 293.0h2.4M620.0 291.8v2.4M641.4 293.0h2.4M642.6 291.8v2.4M664.0 293.0h2.4M665.2 291.8v2.4M686.6 293.0h2.4M687.8 291.8v2.4M709.2 293.0h2.4M710.4 291.8v2.4M731.9 293.0h2.4M733.1 291.8v2.4M754.5 293.0h2.4M755.7 291.8v2.4M777.1 293.0h2.4M778.3 291.8v2.4M799.7 293.0h2.4M800.9 291.8v2.4M822.3 293.0h2.4M823.5 291.8v2.4M845.0 293.0h2.4M846.2 291.8v2.4M867.6 293.0h2.4M868.8 291.8v2.4M890.2 293.0h2.4M891.4 291.8v2.4M912.8 293.0h2.4M914.0 291.8v2.4M935.4 293.0h2.4M936.6 291.8v2.4M958.1 293.0h2.4M959.3 291.8v2.4M980.7 293.0h2.4M981.9 291.8v2.4M1003.3 293.0h2.4M1004.5 291.8v2.4M1025.9 293.0h2.4M1027.1 291.8v2.4M1048.5 293.0h2.4M1049.7 291.8v2.4M1071.2 293.0h2.4M1072.4 291.8v2.4M1093.8 293.0h2.4M1095.0 291.8v2.4M1116.4 293.0h2.4M1117.6 291.8v2.4M30.6 308.0h2.4M31.8 306.8v2.4M53.3 308.0h2.4M54.5 306.8v2.4M75.9 308.0h2.4M77.1 306.8v2.4M98.5 308.0h2.4M99.7 306.8v2.4M121.1 308.0h2.4M122.3 306.8v2.4M143.7 308.0h2.4M144.9 306.8v2.4M166.4 308.0h2.4M167.6 306.8v2.4M189.0 308.0h2.4M190.2 306.8v2.4M211.6 308.0h2.4M212.8 306.8v2.4M234.2 308.0h2.4M235.4 306.8v2.4M256.8 308.0h2.4M258.0 306.8v2.4M279.5 308.0h2.4M280.7 306.8v2.4M302.1 308.0h2.4M303.3 306.8v2.4M324.7 308.0h2.4M325.9 306.8v2.4M347.3 308.0h2.4M348.5 306.8v2.4M369.9 308.0h2.4M371.1 306.8v2.4M392.6 308.0h2.4M393.8 306.8v2.4M415.2 308.0h2.4M416.4 306.8v2.4M437.8 308.0h2.4M439.0 306.8v2.4M460.4 308.0h2.4M461.6 306.8v2.4M483.0 308.0h2.4M484.2 306.8v2.4M505.7 308.0h2.4M506.9 306.8v2.4M528.3 308.0h2.4M529.5 306.8v2.4M550.9 308.0h2.4M552.1 306.8v2.4M573.5 308.0h2.4M574.7 306.8v2.4M596.1 308.0h2.4M597.3 306.8v2.4M618.8 308.0h2.4M620.0 306.8v2.4M641.4 308.0h2.4M642.6 306.8v2.4M664.0 308.0h2.4M665.2 306.8v2.4M686.6 308.0h2.4M687.8 306.8v2.4M709.2 308.0h2.4M710.4 306.8v2.4M731.9 308.0h2.4M733.1 306.8v2.4M754.5 308.0h2.4M755.7 306.8v2.4M777.1 308.0h2.4M778.3 306.8v2.4M799.7 308.0h2.4M800.9 306.8v2.4M822.3 308.0h2.4M823.5 306.8v2.4M845.0 308.0h2.4M846.2 306.8v2.4M867.6 308.0h2.4M868.8 306.8v2.4M890.2 308.0h2.4M891.4 306.8v2.4M912.8 308.0h2.4M914.0 306.8v2.4M935.4 308.0h2.4M936.6 306.8v2.4M958.1 308.0h2.4M959.3 306.8v2.4M980.7 308.0h2.4M981.9 306.8v2.4M1003.3 308.0h2.4M1004.5 306.8v2.4M1025.9 308.0h2.4M1027.1 306.8v2.4M1048.5 308.0h2.4M1049.7 306.8v2.4M1071.2 308.0h2.4M1072.4 306.8v2.4M1093.8 308.0h2.4M1095.0 306.8v2.4M1116.4 308.0h2.4M1117.6 306.8v2.4M30.6 323.0h2.4M31.8 321.8v2.4M53.3 323.0h2.4M54.5 321.8v2.4M75.9 323.0h2.4M77.1 321.8v2.4M98.5 323.0h2.4M99.7 321.8v2.4M121.1 323.0h2.4M122.3 321.8v2.4M143.7 323.0h2.4M144.9 321.8v2.4M166.4 323.0h2.4M167.6 321.8v2.4M189.0 323.0h2.4M190.2 321.8v2.4M211.6 323.0h2.4M212.8 321.8v2.4M234.2 323.0h2.4M235.4 321.8v2.4M256.8 323.0h2.4M258.0 321.8v2.4M279.5 323.0h2.4M280.7 321.8v2.4M302.1 323.0h2.4M303.3 321.8v2.4M324.7 323.0h2.4M325.9 321.8v2.4M347.3 323.0h2.4M348.5 321.8v2.4M369.9 323.0h2.4M371.1 321.8v2.4M392.6 323.0h2.4M393.8 321.8v2.4M415.2 323.0h2.4M416.4 321.8v2.4M437.8 323.0h2.4M439.0 321.8v2.4M460.4 323.0h2.4M461.6 321.8v2.4M483.0 323.0h2.4M484.2 321.8v2.4M505.7 323.0h2.4M506.9 321.8v2.4M528.3 323.0h2.4M529.5 321.8v2.4M550.9 323.0h2.4M552.1 321.8v2.4M573.5 323.0h2.4M574.7 321.8v2.4M596.1 323.0h2.4M597.3 321.8v2.4M618.8 323.0h2.4M620.0 321.8v2.4M641.4 323.0h2.4M642.6 321.8v2.4M664.0 323.0h2.4M665.2 321.8v2.4M686.6 323.0h2.4M687.8 321.8v2.4M709.2 323.0h2.4M710.4 321.8v2.4M731.9 323.0h2.4M733.1 321.8v2.4M754.5 323.0h2.4M755.7 321.8v2.4M777.1 323.0h2.4M778.3 321.8v2.4M799.7 323.0h2.4M800.9 321.8v2.4M822.3 323.0h2.4M823.5 321.8v2.4M845.0 323.0h2.4M846.2 321.8v2.4M867.6 323.0h2.4M868.8 321.8v2.4M890.2 323.0h2.4M891.4 321.8v2.4M912.8 323.0h2.4M914.0 321.8v2.4M935.4 323.0h2.4M936.6 321.8v2.4M958.1 323.0h2.4M959.3 321.8v2.4M980.7 323.0h2.4M981.9 321.8v2.4M1003.3 323.0h2.4M1004.5 321.8v2.4M1025.9 323.0h2.4M1027.1 321.8v2.4M1048.5 323.0h2.4M1049.7 321.8v2.4M1071.2 323.0h2.4M1072.4 321.8v2.4M1093.8 323.0h2.4M1095.0 321.8v2.4M1116.4 323.0h2.4M1117.6 321.8v2.4M30.6 338.0h2.4M31.8 336.8v2.4M53.3 338.0h2.4M54.5 336.8v2.4M75.9 338.0h2.4M77.1 336.8v2.4M98.5 338.0h2.4M99.7 336.8v2.4M121.1 338.0h2.4M122.3 336.8v2.4M143.7 338.0h2.4M144.9 336.8v2.4M166.4 338.0h2.4M167.6 336.8v2.4M189.0 338.0h2.4M190.2 336.8v2.4M211.6 338.0h2.4M212.8 336.8v2.4M234.2 338.0h2.4M235.4 336.8v2.4M256.8 338.0h2.4M258.0 336.8v2.4M279.5 338.0h2.4M280.7 336.8v2.4M302.1 338.0h2.4M303.3 336.8v2.4M324.7 338.0h2.4M325.9 336.8v2.4M347.3 338.0h2.4M348.5 336.8v2.4M369.9 338.0h2.4M371.1 336.8v2.4M392.6 338.0h2.4M393.8 336.8v2.4M415.2 338.0h2.4M416.4 336.8v2.4M437.8 338.0h2.4M439.0 336.8v2.4M460.4 338.0h2.4M461.6 336.8v2.4M483.0 338.0h2.4M484.2 336.8v2.4M505.7 338.0h2.4M506.9 336.8v2.4M528.3 338.0h2.4M529.5 336.8v2.4M550.9 338.0h2.4M552.1 336.8v2.4M573.5 338.0h2.4M574.7 336.8v2.4M596.1 338.0h2.4M597.3 336.8v2.4M618.8 338.0h2.4M620.0 336.8v2.4M641.4 338.0h2.4M642.6 336.8v2.4M664.0 338.0h2.4M665.2 336.8v2.4M686.6 338.0h2.4M687.8 336.8v2.4M709.2 338.0h2.4M710.4 336.8v2.4M731.9 338.0h2.4M733.1 336.8v2.4M754.5 338.0h2.4M755.7 336.8v2.4M777.1 338.0h2.4M778.3 336.8v2.4M799.7 338.0h2.4M800.9 336.8v2.4M822.3 338.0h2.4M823.5 336.8v2.4M845.0 338.0h2.4M846.2 336.8v2.4M867.6 338.0h2.4M868.8 336.8v2.4M890.2 338.0h2.4M891.4 336.8v2.4M912.8 338.0h2.4M914.0 336.8v2.4M935.4 338.0h2.4M936.6 336.8v2.4M958.1 338.0h2.4M959.3 336.8v2.4M980.7 338.0h2.4M981.9 336.8v2.4M1003.3 338.0h2.4M1004.5 336.8v2.4M1025.9 338.0h2.4M1027.1 336.8v2.4M1048.5 338.0h2.4M1049.7 336.8v2.4M1071.2 338.0h2.4M1072.4 336.8v2.4M1093.8 338.0h2.4M1095.0 336.8v2.4M1116.4 338.0h2.4M1117.6 336.8v2.4M30.6 368.5h2.4M31.8 367.3v2.4M53.3 368.5h2.4M54.5 367.3v2.4M75.9 368.5h2.4M77.1 367.3v2.4M98.5 368.5h2.4M99.7 367.3v2.4M121.1 368.5h2.4M122.3 367.3v2.4M143.7 368.5h2.4M144.9 367.3v2.4M166.4 368.5h2.4M167.6 367.3v2.4M189.0 368.5h2.4M190.2 367.3v2.4M211.6 368.5h2.4M212.8 367.3v2.4M234.2 368.5h2.4M235.4 367.3v2.4M256.8 368.5h2.4M258.0 367.3v2.4M279.5 368.5h2.4M280.7 367.3v2.4M302.1 368.5h2.4M303.3 367.3v2.4M324.7 368.5h2.4M325.9 367.3v2.4M347.3 368.5h2.4M348.5 367.3v2.4M369.9 368.5h2.4M371.1 367.3v2.4M392.6 368.5h2.4M393.8 367.3v2.4M415.2 368.5h2.4M416.4 367.3v2.4M437.8 368.5h2.4M439.0 367.3v2.4M460.4 368.5h2.4M461.6 367.3v2.4M483.0 368.5h2.4M484.2 367.3v2.4M505.7 368.5h2.4M506.9 367.3v2.4M528.3 368.5h2.4M529.5 367.3v2.4M550.9 368.5h2.4M552.1 367.3v2.4M573.5 368.5h2.4M574.7 367.3v2.4M596.1 368.5h2.4M597.3 367.3v2.4M618.8 368.5h2.4M620.0 367.3v2.4M641.4 368.5h2.4M642.6 367.3v2.4M664.0 368.5h2.4M665.2 367.3v2.4M686.6 368.5h2.4M687.8 367.3v2.4M709.2 368.5h2.4M710.4 367.3v2.4M731.9 368.5h2.4M733.1 367.3v2.4M754.5 368.5h2.4M755.7 367.3v2.4M777.1 368.5h2.4M778.3 367.3v2.4M799.7 368.5h2.4M800.9 367.3v2.4M822.3 368.5h2.4M823.5 367.3v2.4M845.0 368.5h2.4M846.2 367.3v2.4M867.6 368.5h2.4M868.8 367.3v2.4M890.2 368.5h2.4M891.4 367.3v2.4M912.8 368.5h2.4M914.0 367.3v2.4M935.4 368.5h2.4M936.6 367.3v2.4M958.1 368.5h2.4M959.3 367.3v2.4M980.7 368.5h2.4M981.9 367.3v2.4M1003.3 368.5h2.4M1004.5 367.3v2.4M1025.9 368.5h2.4M1027.1 367.3v2.4M1048.5 368.5h2.4M1049.7 367.3v2.4M1071.2 368.5h2.4M1072.4 367.3v2.4M1093.8 368.5h2.4M1095.0 367.3v2.4M1116.4 368.5h2.4M1117.6 367.3v2.4M30.6 383.5h2.4M31.8 382.3v2.4M53.3 383.5h2.4M54.5 382.3v2.4M75.9 383.5h2.4M77.1 382.3v2.4M98.5 383.5h2.4M99.7 382.3v2.4M121.1 383.5h2.4M122.3 382.3v2.4M143.7 383.5h2.4M144.9 382.3v2.4M166.4 383.5h2.4M167.6 382.3v2.4M189.0 383.5h2.4M190.2 382.3v2.4M211.6 383.5h2.4M212.8 382.3v2.4M234.2 383.5h2.4M235.4 382.3v2.4M256.8 383.5h2.4M258.0 382.3v2.4M279.5 383.5h2.4M280.7 382.3v2.4M302.1 383.5h2.4M303.3 382.3v2.4M324.7 383.5h2.4M325.9 382.3v2.4M347.3 383.5h2.4M348.5 382.3v2.4M369.9 383.5h2.4M371.1 382.3v2.4M392.6 383.5h2.4M393.8 382.3v2.4M415.2 383.5h2.4M416.4 382.3v2.4M437.8 383.5h2.4M439.0 382.3v2.4M460.4 383.5h2.4M461.6 382.3v2.4M483.0 383.5h2.4M484.2 382.3v2.4M505.7 383.5h2.4M506.9 382.3v2.4M528.3 383.5h2.4M529.5 382.3v2.4M550.9 383.5h2.4M552.1 382.3v2.4M573.5 383.5h2.4M574.7 382.3v2.4M596.1 383.5h2.4M597.3 382.3v2.4M618.8 383.5h2.4M620.0 382.3v2.4M641.4 383.5h2.4M642.6 382.3v2.4M664.0 383.5h2.4M665.2 382.3v2.4M686.6 383.5h2.4M687.8 382.3v2.4M709.2 383.5h2.4M710.4 382.3v2.4M731.9 383.5h2.4M733.1 382.3v2.4M754.5 383.5h2.4M755.7 382.3v2.4M777.1 383.5h2.4M778.3 382.3v2.4M799.7 383.5h2.4M800.9 382.3v2.4M822.3 383.5h2.4M823.5 382.3v2.4M845.0 383.5h2.4M846.2 382.3v2.4M867.6 383.5h2.4M868.8 382.3v2.4M890.2 383.5h2.4M891.4 382.3v2.4M912.8 383.5h2.4M914.0 382.3v2.4M935.4 383.5h2.4M936.6 382.3v2.4M958.1 383.5h2.4M959.3 382.3v2.4M980.7 383.5h2.4M981.9 382.3v2.4M1003.3 383.5h2.4M1004.5 382.3v2.4M1025.9 383.5h2.4M1027.1 382.3v2.4M1048.5 383.5h2.4M1049.7 382.3v2.4M1071.2 383.5h2.4M1072.4 382.3v2.4M1093.8 383.5h2.4M1095.0 382.3v2.4M1116.4 383.5h2.4M1117.6 382.3v2.4M30.6 398.5h2.4M31.8 397.3v2.4M53.3 398.5h2.4M54.5 397.3v2.4M75.9 398.5h2.4M77.1 397.3v2.4M98.5 398.5h2.4M99.7 397.3v2.4M121.1 398.5h2.4M122.3 397.3v2.4M143.7 398.5h2.4M144.9 397.3v2.4M166.4 398.5h2.4M167.6 397.3v2.4M189.0 398.5h2.4M190.2 397.3v2.4M211.6 398.5h2.4M212.8 397.3v2.4M234.2 398.5h2.4M235.4 397.3v2.4M256.8 398.5h2.4M258.0 397.3v2.4M279.5 398.5h2.4M280.7 397.3v2.4M302.1 398.5h2.4M303.3 397.3v2.4M324.7 398.5h2.4M325.9 397.3v2.4M347.3 398.5h2.4M348.5 397.3v2.4M369.9 398.5h2.4M371.1 397.3v2.4M392.6 398.5h2.4M393.8 397.3v2.4M415.2 398.5h2.4M416.4 397.3v2.4M437.8 398.5h2.4M439.0 397.3v2.4M460.4 398.5h2.4M461.6 397.3v2.4M483.0 398.5h2.4M484.2 397.3v2.4M505.7 398.5h2.4M506.9 397.3v2.4M528.3 398.5h2.4M529.5 397.3v2.4M550.9 398.5h2.4M552.1 397.3v2.4M573.5 398.5h2.4M574.7 397.3v2.4M596.1 398.5h2.4M597.3 397.3v2.4M618.8 398.5h2.4M620.0 397.3v2.4M641.4 398.5h2.4M642.6 397.3v2.4M664.0 398.5h2.4M665.2 397.3v2.4M686.6 398.5h2.4M687.8 397.3v2.4M709.2 398.5h2.4M710.4 397.3v2.4M731.9 398.5h2.4M733.1 397.3v2.4M754.5 398.5h2.4M755.7 397.3v2.4M777.1 398.5h2.4M778.3 397.3v2.4M799.7 398.5h2.4M800.9 397.3v2.4M822.3 398.5h2.4M823.5 397.3v2.4M845.0 398.5h2.4M846.2 397.3v2.4M867.6 398.5h2.4M868.8 397.3v2.4M890.2 398.5h2.4M891.4 397.3v2.4M912.8 398.5h2.4M914.0 397.3v2.4M935.4 398.5h2.4M936.6 397.3v2.4M958.1 398.5h2.4M959.3 397.3v2.4M980.7 398.5h2.4M981.9 397.3v2.4M1003.3 398.5h2.4M1004.5 397.3v2.4M1025.9 398.5h2.4M1027.1 397.3v2.4M1048.5 398.5h2.4M1049.7 397.3v2.4M1071.2 398.5h2.4M1072.4 397.3v2.4M1093.8 398.5h2.4M1095.0 397.3v2.4M1116.4 398.5h2.4M1117.6 397.3v2.4M30.6 413.5h2.4M31.8 412.3v2.4M53.3 413.5h2.4M54.5 412.3v2.4M75.9 413.5h2.4M77.1 412.3v2.4M98.5 413.5h2.4M99.7 412.3v2.4M121.1 413.5h2.4M122.3 412.3v2.4M143.7 413.5h2.4M144.9 412.3v2.4M166.4 413.5h2.4M167.6 412.3v2.4M189.0 413.5h2.4M190.2 412.3v2.4M211.6 413.5h2.4M212.8 412.3v2.4M234.2 413.5h2.4M235.4 412.3v2.4M256.8 413.5h2.4M258.0 412.3v2.4M279.5 413.5h2.4M280.7 412.3v2.4M302.1 413.5h2.4M303.3 412.3v2.4M324.7 413.5h2.4M325.9 412.3v2.4M347.3 413.5h2.4M348.5 412.3v2.4M369.9 413.5h2.4M371.1 412.3v2.4M392.6 413.5h2.4M393.8 412.3v2.4M415.2 413.5h2.4M416.4 412.3v2.4M437.8 413.5h2.4M439.0 412.3v2.4M460.4 413.5h2.4M461.6 412.3v2.4M483.0 413.5h2.4M484.2 412.3v2.4M505.7 413.5h2.4M506.9 412.3v2.4M528.3 413.5h2.4M529.5 412.3v2.4M550.9 413.5h2.4M552.1 412.3v2.4M573.5 413.5h2.4M574.7 412.3v2.4M596.1 413.5h2.4M597.3 412.3v2.4M618.8 413.5h2.4M620.0 412.3v2.4M641.4 413.5h2.4M642.6 412.3v2.4M664.0 413.5h2.4M665.2 412.3v2.4M686.6 413.5h2.4M687.8 412.3v2.4M709.2 413.5h2.4M710.4 412.3v2.4M731.9 413.5h2.4M733.1 412.3v2.4M754.5 413.5h2.4M755.7 412.3v2.4M777.1 413.5h2.4M778.3 412.3v2.4M799.7 413.5h2.4M800.9 412.3v2.4M822.3 413.5h2.4M823.5 412.3v2.4M845.0 413.5h2.4M846.2 412.3v2.4M867.6 413.5h2.4M868.8 412.3v2.4M890.2 413.5h2.4M891.4 412.3v2.4M912.8 413.5h2.4M914.0 412.3v2.4M935.4 413.5h2.4M936.6 412.3v2.4M958.1 413.5h2.4M959.3 412.3v2.4M980.7 413.5h2.4M981.9 412.3v2.4M1003.3 413.5h2.4M1004.5 412.3v2.4M1025.9 413.5h2.4M1027.1 412.3v2.4M1048.5 413.5h2.4M1049.7 412.3v2.4M1071.2 413.5h2.4M1072.4 412.3v2.4M1093.8 413.5h2.4M1095.0 412.3v2.4M1116.4 413.5h2.4M1117.6 412.3v2.4M30.6 428.5h2.4M31.8 427.3v2.4M53.3 428.5h2.4M54.5 427.3v2.4M75.9 428.5h2.4M77.1 427.3v2.4M98.5 428.5h2.4M99.7 427.3v2.4M121.1 428.5h2.4M122.3 427.3v2.4M143.7 428.5h2.4M144.9 427.3v2.4M166.4 428.5h2.4M167.6 427.3v2.4M189.0 428.5h2.4M190.2 427.3v2.4M211.6 428.5h2.4M212.8 427.3v2.4M234.2 428.5h2.4M235.4 427.3v2.4M256.8 428.5h2.4M258.0 427.3v2.4M279.5 428.5h2.4M280.7 427.3v2.4M302.1 428.5h2.4M303.3 427.3v2.4M324.7 428.5h2.4M325.9 427.3v2.4M347.3 428.5h2.4M348.5 427.3v2.4M369.9 428.5h2.4M371.1 427.3v2.4M392.6 428.5h2.4M393.8 427.3v2.4M415.2 428.5h2.4M416.4 427.3v2.4M437.8 428.5h2.4M439.0 427.3v2.4M460.4 428.5h2.4M461.6 427.3v2.4M483.0 428.5h2.4M484.2 427.3v2.4M505.7 428.5h2.4M506.9 427.3v2.4M528.3 428.5h2.4M529.5 427.3v2.4M550.9 428.5h2.4M552.1 427.3v2.4M573.5 428.5h2.4M574.7 427.3v2.4M596.1 428.5h2.4M597.3 427.3v2.4M618.8 428.5h2.4M620.0 427.3v2.4M641.4 428.5h2.4M642.6 427.3v2.4M664.0 428.5h2.4M665.2 427.3v2.4M686.6 428.5h2.4M687.8 427.3v2.4M709.2 428.5h2.4M710.4 427.3v2.4M731.9 428.5h2.4M733.1 427.3v2.4M754.5 428.5h2.4M755.7 427.3v2.4M777.1 428.5h2.4M778.3 427.3v2.4M799.7 428.5h2.4M800.9 427.3v2.4M822.3 428.5h2.4M823.5 427.3v2.4M845.0 428.5h2.4M846.2 427.3v2.4M867.6 428.5h2.4M868.8 427.3v2.4M890.2 428.5h2.4M891.4 427.3v2.4M912.8 428.5h2.4M914.0 427.3v2.4M935.4 428.5h2.4M936.6 427.3v2.4M958.1 428.5h2.4M959.3 427.3v2.4M980.7 428.5h2.4M981.9 427.3v2.4M1003.3 428.5h2.4M1004.5 427.3v2.4M1025.9 428.5h2.4M1027.1 427.3v2.4M1048.5 428.5h2.4M1049.7 427.3v2.4M1071.2 428.5h2.4M1072.4 427.3v2.4M1093.8 428.5h2.4M1095.0 427.3v2.4M1116.4 428.5h2.4M1117.6 427.3v2.4M30.6 443.5h2.4M31.8 442.3v2.4M53.3 443.5h2.4M54.5 442.3v2.4M75.9 443.5h2.4M77.1 442.3v2.4M98.5 443.5h2.4M99.7 442.3v2.4M121.1 443.5h2.4M122.3 442.3v2.4M143.7 443.5h2.4M144.9 442.3v2.4M166.4 443.5h2.4M167.6 442.3v2.4M189.0 443.5h2.4M190.2 442.3v2.4M211.6 443.5h2.4M212.8 442.3v2.4M234.2 443.5h2.4M235.4 442.3v2.4M256.8 443.5h2.4M258.0 442.3v2.4M279.5 443.5h2.4M280.7 442.3v2.4M302.1 443.5h2.4M303.3 442.3v2.4M324.7 443.5h2.4M325.9 442.3v2.4M347.3 443.5h2.4M348.5 442.3v2.4M369.9 443.5h2.4M371.1 442.3v2.4M392.6 443.5h2.4M393.8 442.3v2.4M415.2 443.5h2.4M416.4 442.3v2.4M437.8 443.5h2.4M439.0 442.3v2.4M460.4 443.5h2.4M461.6 442.3v2.4M483.0 443.5h2.4M484.2 442.3v2.4M505.7 443.5h2.4M506.9 442.3v2.4M528.3 443.5h2.4M529.5 442.3v2.4M550.9 443.5h2.4M552.1 442.3v2.4M573.5 443.5h2.4M574.7 442.3v2.4M596.1 443.5h2.4M597.3 442.3v2.4M618.8 443.5h2.4M620.0 442.3v2.4M641.4 443.5h2.4M642.6 442.3v2.4M664.0 443.5h2.4M665.2 442.3v2.4M686.6 443.5h2.4M687.8 442.3v2.4M709.2 443.5h2.4M710.4 442.3v2.4M731.9 443.5h2.4M733.1 442.3v2.4M754.5 443.5h2.4M755.7 442.3v2.4M777.1 443.5h2.4M778.3 442.3v2.4M799.7 443.5h2.4M800.9 442.3v2.4M822.3 443.5h2.4M823.5 442.3v2.4M845.0 443.5h2.4M846.2 442.3v2.4M867.6 443.5h2.4M868.8 442.3v2.4M890.2 443.5h2.4M891.4 442.3v2.4M912.8 443.5h2.4M914.0 442.3v2.4M935.4 443.5h2.4M936.6 442.3v2.4M958.1 443.5h2.4M959.3 442.3v2.4M980.7 443.5h2.4M981.9 442.3v2.4M1003.3 443.5h2.4M1004.5 442.3v2.4M1025.9 443.5h2.4M1027.1 442.3v2.4M1048.5 443.5h2.4M1049.7 442.3v2.4M1071.2 443.5h2.4M1072.4 442.3v2.4M1093.8 443.5h2.4M1095.0 442.3v2.4M1116.4 443.5h2.4M1117.6 442.3v2.4M30.6 458.5h2.4M31.8 457.3v2.4M53.3 458.5h2.4M54.5 457.3v2.4M75.9 458.5h2.4M77.1 457.3v2.4M98.5 458.5h2.4M99.7 457.3v2.4M121.1 458.5h2.4M122.3 457.3v2.4M143.7 458.5h2.4M144.9 457.3v2.4M166.4 458.5h2.4M167.6 457.3v2.4M189.0 458.5h2.4M190.2 457.3v2.4M211.6 458.5h2.4M212.8 457.3v2.4M234.2 458.5h2.4M235.4 457.3v2.4M256.8 458.5h2.4M258.0 457.3v2.4M279.5 458.5h2.4M280.7 457.3v2.4M302.1 458.5h2.4M303.3 457.3v2.4M324.7 458.5h2.4M325.9 457.3v2.4M347.3 458.5h2.4M348.5 457.3v2.4M369.9 458.5h2.4M371.1 457.3v2.4M392.6 458.5h2.4M393.8 457.3v2.4M415.2 458.5h2.4M416.4 457.3v2.4M437.8 458.5h2.4M439.0 457.3v2.4M460.4 458.5h2.4M461.6 457.3v2.4M483.0 458.5h2.4M484.2 457.3v2.4M505.7 458.5h2.4M506.9 457.3v2.4M528.3 458.5h2.4M529.5 457.3v2.4M550.9 458.5h2.4M552.1 457.3v2.4M573.5 458.5h2.4M574.7 457.3v2.4M596.1 458.5h2.4M597.3 457.3v2.4M618.8 458.5h2.4M620.0 457.3v2.4M641.4 458.5h2.4M642.6 457.3v2.4M664.0 458.5h2.4M665.2 457.3v2.4M686.6 458.5h2.4M687.8 457.3v2.4M709.2 458.5h2.4M710.4 457.3v2.4M731.9 458.5h2.4M733.1 457.3v2.4M754.5 458.5h2.4M755.7 457.3v2.4M777.1 458.5h2.4M778.3 457.3v2.4M799.7 458.5h2.4M800.9 457.3v2.4M822.3 458.5h2.4M823.5 457.3v2.4M845.0 458.5h2.4M846.2 457.3v2.4M867.6 458.5h2.4M868.8 457.3v2.4M890.2 458.5h2.4M891.4 457.3v2.4M912.8 458.5h2.4M914.0 457.3v2.4M935.4 458.5h2.4M936.6 457.3v2.4M958.1 458.5h2.4M959.3 457.3v2.4M980.7 458.5h2.4M981.9 457.3v2.4M1003.3 458.5h2.4M1004.5 457.3v2.4M1025.9 458.5h2.4M1027.1 457.3v2.4M1048.5 458.5h2.4M1049.7 457.3v2.4M1071.2 458.5h2.4M1072.4 457.3v2.4M1093.8 458.5h2.4M1095.0 457.3v2.4M1116.4 458.5h2.4M1117.6 457.3v2.4M30.6 473.5h2.4M31.8 472.3v2.4M53.3 473.5h2.4M54.5 472.3v2.4M75.9 473.5h2.4M77.1 472.3v2.4M98.5 473.5h2.4M99.7 472.3v2.4M121.1 473.5h2.4M122.3 472.3v2.4M143.7 473.5h2.4M144.9 472.3v2.4M166.4 473.5h2.4M167.6 472.3v2.4M189.0 473.5h2.4M190.2 472.3v2.4M211.6 473.5h2.4M212.8 472.3v2.4M234.2 473.5h2.4M235.4 472.3v2.4M256.8 473.5h2.4M258.0 472.3v2.4M279.5 473.5h2.4M280.7 472.3v2.4M302.1 473.5h2.4M303.3 472.3v2.4M324.7 473.5h2.4M325.9 472.3v2.4M347.3 473.5h2.4M348.5 472.3v2.4M369.9 473.5h2.4M371.1 472.3v2.4M392.6 473.5h2.4M393.8 472.3v2.4M415.2 473.5h2.4M416.4 472.3v2.4M437.8 473.5h2.4M439.0 472.3v2.4M460.4 473.5h2.4M461.6 472.3v2.4M483.0 473.5h2.4M484.2 472.3v2.4M505.7 473.5h2.4M506.9 472.3v2.4M528.3 473.5h2.4M529.5 472.3v2.4M550.9 473.5h2.4M552.1 472.3v2.4M573.5 473.5h2.4M574.7 472.3v2.4M596.1 473.5h2.4M597.3 472.3v2.4M618.8 473.5h2.4M620.0 472.3v2.4M641.4 473.5h2.4M642.6 472.3v2.4M664.0 473.5h2.4M665.2 472.3v2.4M686.6 473.5h2.4M687.8 472.3v2.4M709.2 473.5h2.4M710.4 472.3v2.4M731.9 473.5h2.4M733.1 472.3v2.4M754.5 473.5h2.4M755.7 472.3v2.4M777.1 473.5h2.4M778.3 472.3v2.4M799.7 473.5h2.4M800.9 472.3v2.4M822.3 473.5h2.4M823.5 472.3v2.4M845.0 473.5h2.4M846.2 472.3v2.4M867.6 473.5h2.4M868.8 472.3v2.4M890.2 473.5h2.4M891.4 472.3v2.4M912.8 473.5h2.4M914.0 472.3v2.4M935.4 473.5h2.4M936.6 472.3v2.4M958.1 473.5h2.4M959.3 472.3v2.4M980.7 473.5h2.4M981.9 472.3v2.4M1003.3 473.5h2.4M1004.5 472.3v2.4M1025.9 473.5h2.4M1027.1 472.3v2.4M1048.5 473.5h2.4M1049.7 472.3v2.4M1071.2 473.5h2.4M1072.4 472.3v2.4M1093.8 473.5h2.4M1095.0 472.3v2.4M1116.4 473.5h2.4M1117.6 472.3v2.4M30.6 488.5h2.4M31.8 487.3v2.4M53.3 488.5h2.4M54.5 487.3v2.4M75.9 488.5h2.4M77.1 487.3v2.4M98.5 488.5h2.4M99.7 487.3v2.4M121.1 488.5h2.4M122.3 487.3v2.4M143.7 488.5h2.4M144.9 487.3v2.4M166.4 488.5h2.4M167.6 487.3v2.4M189.0 488.5h2.4M190.2 487.3v2.4M211.6 488.5h2.4M212.8 487.3v2.4M234.2 488.5h2.4M235.4 487.3v2.4M256.8 488.5h2.4M258.0 487.3v2.4M279.5 488.5h2.4M280.7 487.3v2.4M302.1 488.5h2.4M303.3 487.3v2.4M324.7 488.5h2.4M325.9 487.3v2.4M347.3 488.5h2.4M348.5 487.3v2.4M369.9 488.5h2.4M371.1 487.3v2.4M392.6 488.5h2.4M393.8 487.3v2.4M415.2 488.5h2.4M416.4 487.3v2.4M437.8 488.5h2.4M439.0 487.3v2.4M460.4 488.5h2.4M461.6 487.3v2.4M483.0 488.5h2.4M484.2 487.3v2.4M505.7 488.5h2.4M506.9 487.3v2.4M528.3 488.5h2.4M529.5 487.3v2.4M550.9 488.5h2.4M552.1 487.3v2.4M573.5 488.5h2.4M574.7 487.3v2.4M596.1 488.5h2.4M597.3 487.3v2.4M618.8 488.5h2.4M620.0 487.3v2.4M641.4 488.5h2.4M642.6 487.3v2.4M664.0 488.5h2.4M665.2 487.3v2.4M686.6 488.5h2.4M687.8 487.3v2.4M709.2 488.5h2.4M710.4 487.3v2.4M731.9 488.5h2.4M733.1 487.3v2.4M754.5 488.5h2.4M755.7 487.3v2.4M777.1 488.5h2.4M778.3 487.3v2.4M799.7 488.5h2.4M800.9 487.3v2.4M822.3 488.5h2.4M823.5 487.3v2.4M845.0 488.5h2.4M846.2 487.3v2.4M867.6 488.5h2.4M868.8 487.3v2.4M890.2 488.5h2.4M891.4 487.3v2.4M912.8 488.5h2.4M914.0 487.3v2.4M935.4 488.5h2.4M936.6 487.3v2.4M958.1 488.5h2.4M959.3 487.3v2.4M980.7 488.5h2.4M981.9 487.3v2.4M1003.3 488.5h2.4M1004.5 487.3v2.4M1025.9 488.5h2.4M1027.1 487.3v2.4M1048.5 488.5h2.4M1049.7 487.3v2.4M1071.2 488.5h2.4M1072.4 487.3v2.4M1093.8 488.5h2.4M1095.0 487.3v2.4M1116.4 488.5h2.4M1117.6 487.3v2.4" stroke="#191919" stroke-width="1" fill="none"/>
<line x1="99.7" y1="53" x2="99.7" y2="655" stroke="#8a8a8a" stroke-width="1" stroke-dasharray="1 2"/>
<line x1="212.8" y1="53" x2="212.8" y2="655" stroke="#8a8a8a" stroke-width="1" stroke-dasharray="1 2"/>
<line x1="325.9" y1="53" x2="325.9" y2="655" stroke="#8a8a8a" stroke-width="1" stroke-dasharray="1 2"/>
<line x1="439.0" y1="53" x2="439.0" y2="655" stroke="#8a8a8a" stroke-width="1" stroke-dasharray="1 2"/>
<line x1="552.1" y1="53" x2="552.1" y2="655" stroke="#8a8a8a" stroke-width="1" stroke-dasharray="1 2"/>
<line x1="665.2" y1="53" x2="665.2" y2="655" stroke="#8a8a8a" stroke-width="1" stroke-dasharray="1 2"/>
<line x1="778.3" y1="53" x2="778.3" y2="655" stroke="#8a8a8a" stroke-width="1" stroke-dasharray="1 2"/>
<line x1="891.4" y1="53" x2="891.4" y2="655" stroke="#8a8a8a" stroke-width="1" stroke-dasharray="1 2"/>
<line x1="1004.5" y1="53" x2="1004.5" y2="655" stroke="#8a8a8a" stroke-width="1" stroke-dasharray="1 2"/>
<line x1="1117.6" y1="53" x2="1117.6" y2="655" stroke="#8a8a8a" stroke-width="1" stroke-dasharray="1 2"/>
<line x1="9.2" y1="202.8" x2="1140.4" y2="202.8" stroke="#9c9c9c" stroke-width="1.6"/>
<line x1="9.2" y1="353.2" x2="1140.4" y2="353.2" stroke="#9c9c9c" stroke-width="1.6"/>
<line x1="9.2" y1="504.3" x2="1140.4" y2="504.3" stroke="#9c9c9c" stroke-width="1.6"/>
<line x1="36" y1="127.2" x2="1140.4" y2="127.2" stroke="#b0b0b0" stroke-width="1" stroke-dasharray="3.4 2.6"/>
<line x1="36" y1="278.2" x2="1140.4" y2="278.2" stroke="#b0b0b0" stroke-width="1" stroke-dasharray="3.4 2.6"/>
<line x1="36" y1="432.2" x2="1140.4" y2="432.2" stroke="#b0b0b0" stroke-width="1" stroke-dasharray="3.4 2.6"/>
<line x1="439.0" y1="78" x2="439.0" y2="655" stroke="#a8a8a8" stroke-width="1" stroke-dasharray="3.4 2.6"/>
<path d="M9.2 126.9L10.7 126.8L12.2 127.1L13.7 126.8L15.2 127.0L16.7 126.9L18.2 126.8L19.7 127.0L21.2 126.8L22.7 127.0L24.2 126.8L25.7 126.8L27.2 127.0L28.7 127.2L30.2 126.8L31.7 126.9L33.2 127.1L34.7 127.2L36.2 127.0L37.7 126.9L39.2 127.2L40.7 126.8L42.2 127.2L43.7 126.9L45.2 126.8L46.7 126.8L48.2 126.9L49.7 127.2L51.2 126.8L52.7 127.0L54.2 127.1L55.7 126.9L57.2 127.0L58.7 126.8L60.2 126.8L61.7 126.9L63.2 127.1L64.7 127.0L66.2 126.9L67.7 127.0L69.2 127.0L70.7 126.9L72.2 127.1L73.7 127.1L75.2 126.9L76.7 127.0L78.2 127.0L79.7 127.2L81.2 127.1L82.7 126.9L84.2 127.2L85.7 126.8L87.2 127.0L88.7 127.1L90.2 126.8L91.7 127.0L93.2 126.8L94.7 127.1L96.2 127.1L97.7 127.0L99.2 127.2L100.7 126.9L102.2 127.1L103.7 127.0L105.2 127.0L106.7 127.0L108.2 127.2L109.7 127.2L111.2 127.0L112.7 127.1L114.2 126.8L115.7 127.1L117.2 127.1L118.7 127.2L120.2 127.2L121.7 126.9L123.2 126.9L124.7 127.1L126.2 126.8L127.7 127.0L129.2 126.8L130.7 126.8L132.2 126.8L133.7 127.1L135.2 126.8L136.7 126.9L138.2 126.9L139.7 127.2L141.2 126.8L142.7 127.0L144.2 127.0L145.7 127.2L147.2 127.2L148.7 127.2L150.2 126.9L151.7 127.0L153.2 126.9L154.7 127.2L156.2 127.2L157.7 126.8L159.2 126.8L160.7 126.9L162.2 126.9L163.7 127.0L165.2 127.0L166.7 126.9L168.2 126.8L169.7 127.0L171.2 126.9L172.7 127.0L174.2 127.2L175.7 127.1L177.2 127.0L178.7 127.1L180.2 127.1L181.7 126.8L183.2 127.2L184.7 127.1L186.2 127.2L187.7 127.1L189.2 126.9L190.7 126.9L192.2 126.8L193.7 127.1L195.2 126.8L196.7 126.8L198.2 126.9L199.7 126.8L201.2 126.9L202.7 126.8L204.2 126.8L205.7 126.8L207.2 126.8L208.7 126.9L210.2 126.8L211.7 127.2L213.2 127.1L214.7 126.8L216.2 126.9L217.7 126.9L219.2 126.9L220.7 126.8L222.2 127.2L223.7 127.2L225.2 127.0L226.7 127.0L228.2 126.8L229.7 126.8L231.2 126.9L232.7 126.9L234.2 127.2L235.7 126.8L237.2 126.8L238.7 127.2L240.2 127.0L241.7 126.8L243.2 127.0L244.7 126.8L246.2 127.0L247.7 127.2L249.2 127.2L250.7 127.1L252.2 126.9L253.7 126.9L255.2 126.8L256.7 127.1L258.2 127.0L259.7 127.1L261.2 126.9L262.7 126.9L264.2 127.2L265.7 127.2L267.2 127.2L268.7 127.2L270.2 127.2L271.7 127.1L273.2 126.9L274.7 127.0L276.2 126.9L277.7 126.8L279.2 126.8L280.7 126.9L282.2 126.9L283.7 127.1L285.2 127.2L286.7 127.0L288.2 127.2L289.7 127.2L291.2 127.2L292.7 126.9L294.2 126.9L295.7 126.9L297.2 126.8L298.7 126.9L300.2 127.1L301.7 127.2L303.2 127.2L304.7 127.0L306.2 127.1L307.7 127.1L309.2 126.8L310.7 127.1L312.2 127.2L313.7 127.1L315.2 127.1L316.7 127.0L318.2 126.8L319.7 127.1L321.2 126.9L322.7 127.2L324.2 127.2L325.7 126.9L327.2 127.0L328.7 127.2L330.2 127.1L331.7 126.8L333.2 126.8L334.7 126.8L336.2 127.2L337.7 127.2L339.2 126.8L340.7 127.2L342.2 127.2L343.7 127.1L345.2 126.9L346.7 127.0L348.2 126.8L349.7 126.8L351.2 127.2L352.7 127.1L354.2 127.0L355.7 127.2L357.2 127.0L358.7 127.2L360.2 127.2L361.7 126.9L363.2 126.9L364.7 126.9L366.2 126.9L367.7 127.0L369.2 126.9L370.7 127.0L372.2 126.8L373.7 127.2L375.2 126.9L376.7 127.0L378.2 127.0L379.7 127.2L381.2 127.0L382.7 127.2L384.2 127.0L385.7 127.0L387.2 127.0L388.7 126.8L390.2 127.0L391.7 126.8L393.2 126.8L394.7 127.1L396.2 126.8L397.7 127.0L399.2 127.1L400.7 127.0L402.2 126.9L403.7 127.0L405.2 127.0L406.7 127.1L408.2 126.8L409.7 127.0L411.2 126.9L412.7 126.9L414.2 127.1L415.7 127.0L417.2 127.0L418.7 127.1L420.2 127.2L421.7 127.0L423.2 127.1L424.7 127.0L426.2 127.0L427.7 127.1L429.2 127.0L430.7 127.0L432.2 127.0L433.7 127.2L435.2 127.1L436.7 127.2L438.2 127.2L439.0 126.9M439.0 92.6L440.5 92.8L442.0 92.8L443.5 92.4L445.0 92.4L446.5 92.6L448.0 92.4L449.5 92.5L451.0 92.4L452.5 92.7L454.0 92.7L455.5 92.8L457.0 92.4L458.5 92.7L460.0 92.7L461.5 92.4L463.0 92.8L464.5 92.8L466.0 92.5L467.3 92.8M467.3 126.9L468.8 127.0L470.3 127.2L471.8 127.2L473.3 126.8L474.8 127.0L476.3 127.0L477.8 126.9L479.3 126.8L480.8 126.9L482.3 127.1L483.8 126.8L485.3 127.0L486.8 127.0L488.3 126.8L489.8 126.9L491.3 127.1L492.8 127.0L494.3 126.8L495.6 127.2M495.6 92.7L497.1 92.8L498.6 92.4L500.1 92.5L501.6 92.4L503.1 92.7L504.6 92.5L506.1 92.4L507.6 92.6L509.1 92.8L510.6 92.8L512.0 92.5L513.5 92.4L515.0 92.8L516.5 92.6L518.0 92.7L519.5 92.4L521.0 92.4L522.5 92.7L523.8 92.6M523.8 126.8L525.3 127.2L526.8 127.1L528.3 127.2L529.8 126.8L531.3 127.2L532.8 126.8L534.3 127.2L535.8 127.0L537.3 126.9L538.8 127.0L540.3 127.2L541.8 126.9L543.3 126.8L544.8 127.0L546.3 126.9L547.8 126.8L549.3 126.8L550.8 126.8L552.1 126.9M552.1 92.5L553.6 92.5L555.1 92.7L556.6 92.5L558.1 92.6L559.6 92.4L561.1 92.5L562.6 92.4L564.1 92.5L565.6 92.4L567.1 92.7L568.6 92.6L570.1 92.4L571.6 92.6L573.1 92.8L574.6 92.4L576.1 92.8L577.6 92.6L579.1 92.6L580.4 92.8M580.4 126.9L581.9 127.0L583.4 127.1L584.9 127.2L586.4 126.9L587.9 127.2L589.4 127.1L590.9 127.1L592.4 127.0L593.9 126.9L595.4 126.8L596.9 126.8L598.4 126.8L599.9 127.1L601.4 126.9L602.9 126.8L604.4 126.8L605.9 127.2L607.4 127.2L608.6 127.1M608.6 92.5L610.1 92.5L611.6 92.5L613.1 92.6L614.6 92.4L616.1 92.6L617.6 92.5L619.1 92.8L620.6 92.8L622.1 92.6L623.6 92.5L625.1 92.8L626.6 92.5L628.1 92.5L629.6 92.4L631.1 92.5L632.6 92.6L634.1 92.6L635.6 92.5L636.9 92.6M636.9 126.8L638.4 126.9L639.9 126.8L641.4 126.9L642.9 126.8L644.4 126.8L645.9 126.9L647.4 126.9L648.9 127.0L650.4 127.0L651.9 127.1L653.4 127.1L654.9 127.1L656.4 127.2L657.9 126.9L659.4 126.9L660.9 127.2L662.4 126.8L663.9 127.1L665.2 127.1M665.2 92.4L666.7 92.8L668.2 92.8L669.7 92.7L671.2 92.7L672.7 92.8L674.2 92.4L675.7 92.6L677.2 92.6L678.7 92.8L680.2 92.8L681.7 92.8L683.2 92.6L684.7 92.8L686.2 92.7L687.7 92.7L689.2 92.5L690.7 92.4L692.2 92.4L693.5 92.5M693.5 126.8L695.0 127.2L696.5 127.0L698.0 127.1L699.5 127.1L701.0 127.1L702.5 127.0L704.0 126.8L705.5 127.1L707.0 127.1L708.5 127.0L710.0 127.0L711.5 127.1L713.0 126.8L714.5 127.1L716.0 126.9L717.5 126.8L719.0 126.9L720.5 127.1L721.8 126.9M721.8 92.7L723.2 92.8L724.8 92.6L726.2 92.5L727.8 92.6L729.2 92.7L730.8 92.7L732.2 92.7L733.8 92.7L735.2 92.4L736.8 92.4L738.2 92.5L739.8 92.7L741.2 92.5L742.8 92.6L744.2 92.4L745.8 92.4L747.2 92.5L748.8 92.7L750.0 92.7M750.0 127.1L751.5 126.9L753.0 127.0L754.5 127.0L756.0 127.0L757.5 126.8L759.0 127.2L760.5 126.8L762.0 127.2L763.5 127.2L765.0 126.8L766.5 127.0L768.0 127.2L769.5 127.2L771.0 127.0L772.5 126.9L774.0 126.9L775.5 127.2L777.0 126.9L778.3 127.0M778.3 92.4L779.8 92.6L781.3 92.8L782.8 92.4L784.3 92.8L785.8 92.6L787.3 92.8L788.8 92.7L790.3 92.5L791.8 92.8L793.3 92.6L794.8 92.4L796.3 92.4L797.8 92.6L799.3 92.6L800.8 92.5L802.3 92.4L803.8 92.5L805.3 92.5L806.6 92.8M806.6 126.8L808.1 127.1L809.6 127.2L811.1 126.8L812.6 127.2L814.1 127.1L815.6 127.2L817.1 126.9L818.6 126.9L820.1 126.9L821.6 127.2L823.1 127.0L824.6 126.9L826.1 127.0L827.6 126.9L829.1 126.8L830.6 126.8L832.1 127.2L833.6 126.9L834.8 127.2M834.8 92.5L836.3 92.5L837.8 92.6L839.3 92.4L840.8 92.5L842.3 92.8L843.8 92.8L845.3 92.8L846.8 92.7L848.3 92.8L849.8 92.8L851.3 92.6L852.8 92.7L854.3 92.4L855.8 92.7L857.3 92.6L858.8 92.7L860.3 92.7L861.8 92.5L863.1 92.4M863.1 127.2L864.6 126.8L866.1 127.0L867.6 126.9L869.1 126.9L870.6 127.1L872.1 127.2L873.6 126.9L875.1 127.1L876.6 126.9L878.1 127.0L879.6 126.9L881.1 126.8L882.6 126.8L884.1 126.9L885.6 127.2L887.1 127.0L888.6 126.9L890.1 127.2L891.6 127.2L893.1 127.0L894.6 126.8L896.1 126.8L897.6 126.8L899.1 126.9L900.6 126.8L902.1 126.9L903.6 126.9L905.1 127.0L906.6 127.2L908.1 127.1L909.6 127.0L911.1 127.0L912.6 127.0L914.1 126.9L915.6 126.9L917.1 126.8L918.6 126.9L920.1 127.2L921.6 126.8L923.1 127.0L924.6 127.1L926.1 127.2L927.6 126.9L929.1 126.9L930.6 126.9L932.1 126.9L933.6 127.0L935.1 127.2L936.6 127.2L938.1 127.2L939.6 126.8L941.1 126.8L942.6 127.1L944.1 127.2L945.6 127.0L947.1 127.0L948.6 126.8L950.1 126.9L951.6 127.2L953.1 127.2L954.6 127.2L956.1 127.2L957.6 126.9L959.1 126.8L960.6 126.8L962.1 127.0L963.6 127.1L965.1 127.2L966.6 127.1L968.1 127.1L969.6 127.1L971.1 127.0L972.6 127.0L974.1 126.8L975.6 127.1L977.1 126.9L978.6 127.2L980.1 127.1L981.6 126.9L983.1 126.8L984.6 126.9L986.1 127.1L987.6 127.1L989.1 126.8L990.6 126.8L992.1 127.0L993.6 127.0L995.1 126.9L996.6 126.9L998.1 127.1L999.6 126.8L1001.1 126.9L1002.6 127.0L1004.1 127.2L1005.6 127.1L1007.1 127.2L1008.6 127.0L1010.1 126.9L1011.6 126.9L1013.1 127.2L1014.6 127.1L1016.1 126.9L1017.6 126.8L1019.1 127.0L1020.6 127.1L1022.1 127.0L1023.6 126.9L1025.1 127.1L1026.6 127.2L1028.1 126.9L1029.6 126.8L1031.1 126.9L1032.6 127.0L1034.1 127.1L1035.6 126.8L1037.1 127.1L1038.6 127.1L1040.1 127.0L1041.6 126.9L1043.1 127.2L1044.6 126.9L1046.1 127.2L1047.6 126.9L1049.1 126.9L1050.6 127.1L1052.1 126.9L1053.6 127.2L1055.1 127.0L1056.6 126.8L1058.1 126.9L1059.6 127.0L1061.1 127.1L1062.6 127.2L1064.1 126.8L1065.6 126.9L1067.1 126.9L1068.6 127.2L1070.1 126.8L1071.6 126.8L1073.1 126.8L1074.6 126.9L1076.1 127.2L1077.6 127.2L1079.1 127.1L1080.6 127.2L1082.1 127.2L1083.6 126.9L1085.1 126.8L1086.6 127.2L1088.1 127.1L1089.6 126.8L1091.1 127.1L1092.6 126.9L1094.1 126.9L1095.6 126.9L1097.1 126.8L1098.6 126.8L1100.1 126.9L1101.6 126.9L1103.1 127.2L1104.6 126.8L1106.1 127.2L1107.6 126.9L1109.1 126.9L1110.6 127.2L1112.1 127.2L1113.6 127.0L1115.1 126.8L1116.6 127.0L1118.1 126.9L1119.6 127.2L1121.1 126.8L1122.6 126.9L1124.1 127.2L1125.6 126.8L1127.1 127.0L1128.6 127.2L1130.1 127.1L1131.6 126.8L1133.1 126.8L1134.6 126.8L1136.1 127.2L1137.6 126.9L1139.1 127.1L1140.4 127.2" fill="none" stroke="#e2e24c" stroke-width="2.3" stroke-linejoin="round"/>
<path d="M9.2 126.9L10.7 126.8L12.2 127.1L13.7 126.8L15.2 127.0L16.7 126.9L18.2 126.8L19.7 127.0L21.2 126.8L22.7 127.0L24.2 126.8L25.7 126.8L27.2 127.0L28.7 127.2L30.2 126.8L31.7 126.9L33.2 127.1L34.7 127.2L36.2 127.0L37.7 126.9L39.2 127.2L40.7 126.8L42.2 127.2L43.7 126.9L45.2 126.8L46.7 126.8L48.2 126.9L49.7 127.2L51.2 126.8L52.7 127.0L54.2 127.1L55.7 126.9L57.2 127.0L58.7 126.8L60.2 126.8L61.7 126.9L63.2 127.1L64.7 127.0L66.2 126.9L67.7 127.0L69.2 127.0L70.7 126.9L72.2 127.1L73.7 127.1L75.2 126.9L76.7 127.0L78.2 127.0L79.7 127.2L81.2 127.1L82.7 126.9L84.2 127.2L85.7 126.8L87.2 127.0L88.7 127.1L90.2 126.8L91.7 127.0L93.2 126.8L94.7 127.1L96.2 127.1L97.7 127.0L99.2 127.2L100.7 126.9L102.2 127.1L103.7 127.0L105.2 127.0L106.7 127.0L108.2 127.2L109.7 127.2L111.2 127.0L112.7 127.1L114.2 126.8L115.7 127.1L117.2 127.1L118.7 127.2L120.2 127.2L121.7 126.9L123.2 126.9L124.7 127.1L126.2 126.8L127.7 127.0L129.2 126.8L130.7 126.8L132.2 126.8L133.7 127.1L135.2 126.8L136.7 126.9L138.2 126.9L139.7 127.2L141.2 126.8L142.7 127.0L144.2 127.0L145.7 127.2L147.2 127.2L148.7 127.2L150.2 126.9L151.7 127.0L153.2 126.9L154.7 127.2L156.2 127.2L157.7 126.8L159.2 126.8L160.7 126.9L162.2 126.9L163.7 127.0L165.2 127.0L166.7 126.9L168.2 126.8L169.7 127.0L171.2 126.9L172.7 127.0L174.2 127.2L175.7 127.1L177.2 127.0L178.7 127.1L180.2 127.1L181.7 126.8L183.2 127.2L184.7 127.1L186.2 127.2L187.7 127.1L189.2 126.9L190.7 126.9L192.2 126.8L193.7 127.1L195.2 126.8L196.7 126.8L198.2 126.9L199.7 126.8L201.2 126.9L202.7 126.8L204.2 126.8L205.7 126.8L207.2 126.8L208.7 126.9L210.2 126.8L211.7 127.2L213.2 127.1L214.7 126.8L216.2 126.9L217.7 126.9L219.2 126.9L220.7 126.8L222.2 127.2L223.7 127.2L225.2 127.0L226.7 127.0L228.2 126.8L229.7 126.8L231.2 126.9L232.7 126.9L234.2 127.2L235.7 126.8L237.2 126.8L238.7 127.2L240.2 127.0L241.7 126.8L243.2 127.0L244.7 126.8L246.2 127.0L247.7 127.2L249.2 127.2L250.7 127.1L252.2 126.9L253.7 126.9L255.2 126.8L256.7 127.1L258.2 127.0L259.7 127.1L261.2 126.9L262.7 126.9L264.2 127.2L265.7 127.2L267.2 127.2L268.7 127.2L270.2 127.2L271.7 127.1L273.2 126.9L274.7 127.0L276.2 126.9L277.7 126.8L279.2 126.8L280.7 126.9L282.2 126.9L283.7 127.1L285.2 127.2L286.7 127.0L288.2 127.2L289.7 127.2L291.2 127.2L292.7 126.9L294.2 126.9L295.7 126.9L297.2 126.8L298.7 126.9L300.2 127.1L301.7 127.2L303.2 127.2L304.7 127.0L306.2 127.1L307.7 127.1L309.2 126.8L310.7 127.1L312.2 127.2L313.7 127.1L315.2 127.1L316.7 127.0L318.2 126.8L319.7 127.1L321.2 126.9L322.7 127.2L324.2 127.2L325.7 126.9L327.2 127.0L328.7 127.2L330.2 127.1L331.7 126.8L333.2 126.8L334.7 126.8L336.2 127.2L337.7 127.2L339.2 126.8L340.7 127.2L342.2 127.2L343.7 127.1L345.2 126.9L346.7 127.0L348.2 126.8L349.7 126.8L351.2 127.2L352.7 127.1L354.2 127.0L355.7 127.2L357.2 127.0L358.7 127.2L360.2 127.2L361.7 126.9L363.2 126.9L364.7 126.9L366.2 126.9L367.7 127.0L369.2 126.9L370.7 127.0L372.2 126.8L373.7 127.2L375.2 126.9L376.7 127.0L378.2 127.0L379.7 127.2L381.2 127.0L382.7 127.2L384.2 127.0L385.7 127.0L387.2 127.0L388.7 126.8L390.2 127.0L391.7 126.8L393.2 126.8L394.7 127.1L396.2 126.8L397.7 127.0L399.2 127.1L400.7 127.0L402.2 126.9L403.7 127.0L405.2 127.0L406.7 127.1L408.2 126.8L409.7 127.0L411.2 126.9L412.7 126.9L414.2 127.1L415.7 127.0L417.2 127.0L418.7 127.1L420.2 127.2L421.7 127.0L423.2 127.1L424.7 127.0L426.2 127.0L427.7 127.1L429.2 127.0L430.7 127.0L432.2 127.0L433.7 127.2L435.2 127.1L436.7 127.2L438.2 127.2L439.0 126.9M439.0 92.6L440.5 92.8L442.0 92.8L443.5 92.4L445.0 92.4L446.5 92.6L448.0 92.4L449.5 92.5L451.0 92.4L452.5 92.7L454.0 92.7L455.5 92.8L457.0 92.4L458.5 92.7L460.0 92.7L461.5 92.4L463.0 92.8L464.5 92.8L466.0 92.5L467.3 92.8M467.3 126.9L468.8 127.0L470.3 127.2L471.8 127.2L473.3 126.8L474.8 127.0L476.3 127.0L477.8 126.9L479.3 126.8L480.8 126.9L482.3 127.1L483.8 126.8L485.3 127.0L486.8 127.0L488.3 126.8L489.8 126.9L491.3 127.1L492.8 127.0L494.3 126.8L495.6 127.2M495.6 92.7L497.1 92.8L498.6 92.4L500.1 92.5L501.6 92.4L503.1 92.7L504.6 92.5L506.1 92.4L507.6 92.6L509.1 92.8L510.6 92.8L512.0 92.5L513.5 92.4L515.0 92.8L516.5 92.6L518.0 92.7L519.5 92.4L521.0 92.4L522.5 92.7L523.8 92.6M523.8 126.8L525.3 127.2L526.8 127.1L528.3 127.2L529.8 126.8L531.3 127.2L532.8 126.8L534.3 127.2L535.8 127.0L537.3 126.9L538.8 127.0L540.3 127.2L541.8 126.9L543.3 126.8L544.8 127.0L546.3 126.9L547.8 126.8L549.3 126.8L550.8 126.8L552.1 126.9M552.1 92.5L553.6 92.5L555.1 92.7L556.6 92.5L558.1 92.6L559.6 92.4L561.1 92.5L562.6 92.4L564.1 92.5L565.6 92.4L567.1 92.7L568.6 92.6L570.1 92.4L571.6 92.6L573.1 92.8L574.6 92.4L576.1 92.8L577.6 92.6L579.1 92.6L580.4 92.8M580.4 126.9L581.9 127.0L583.4 127.1L584.9 127.2L586.4 126.9L587.9 127.2L589.4 127.1L590.9 127.1L592.4 127.0L593.9 126.9L595.4 126.8L596.9 126.8L598.4 126.8L599.9 127.1L601.4 126.9L602.9 126.8L604.4 126.8L605.9 127.2L607.4 127.2L608.6 127.1M608.6 92.5L610.1 92.5L611.6 92.5L613.1 92.6L614.6 92.4L616.1 92.6L617.6 92.5L619.1 92.8L620.6 92.8L622.1 92.6L623.6 92.5L625.1 92.8L626.6 92.5L628.1 92.5L629.6 92.4L631.1 92.5L632.6 92.6L634.1 92.6L635.6 92.5L636.9 92.6M636.9 126.8L638.4 126.9L639.9 126.8L641.4 126.9L642.9 126.8L644.4 126.8L645.9 126.9L647.4 126.9L648.9 127.0L650.4 127.0L651.9 127.1L653.4 127.1L654.9 127.1L656.4 127.2L657.9 126.9L659.4 126.9L660.9 127.2L662.4 126.8L663.9 127.1L665.2 127.1M665.2 92.4L666.7 92.8L668.2 92.8L669.7 92.7L671.2 92.7L672.7 92.8L674.2 92.4L675.7 92.6L677.2 92.6L678.7 92.8L680.2 92.8L681.7 92.8L683.2 92.6L684.7 92.8L686.2 92.7L687.7 92.7L689.2 92.5L690.7 92.4L692.2 92.4L693.5 92.5M693.5 126.8L695.0 127.2L696.5 127.0L698.0 127.1L699.5 127.1L701.0 127.1L702.5 127.0L704.0 126.8L705.5 127.1L707.0 127.1L708.5 127.0L710.0 127.0L711.5 127.1L713.0 126.8L714.5 127.1L716.0 126.9L717.5 126.8L719.0 126.9L720.5 127.1L721.8 126.9M721.8 92.7L723.2 92.8L724.8 92.6L726.2 92.5L727.8 92.6L729.2 92.7L730.8 92.7L732.2 92.7L733.8 92.7L735.2 92.4L736.8 92.4L738.2 92.5L739.8 92.7L741.2 92.5L742.8 92.6L744.2 92.4L745.8 92.4L747.2 92.5L748.8 92.7L750.0 92.7M750.0 127.1L751.5 126.9L753.0 127.0L754.5 127.0L756.0 127.0L757.5 126.8L759.0 127.2L760.5 126.8L762.0 127.2L763.5 127.2L765.0 126.8L766.5 127.0L768.0 127.2L769.5 127.2L771.0 127.0L772.5 126.9L774.0 126.9L775.5 127.2L777.0 126.9L778.3 127.0M778.3 92.4L779.8 92.6L781.3 92.8L782.8 92.4L784.3 92.8L785.8 92.6L787.3 92.8L788.8 92.7L790.3 92.5L791.8 92.8L793.3 92.6L794.8 92.4L796.3 92.4L797.8 92.6L799.3 92.6L800.8 92.5L802.3 92.4L803.8 92.5L805.3 92.5L806.6 92.8M806.6 126.8L808.1 127.1L809.6 127.2L811.1 126.8L812.6 127.2L814.1 127.1L815.6 127.2L817.1 126.9L818.6 126.9L820.1 126.9L821.6 127.2L823.1 127.0L824.6 126.9L826.1 127.0L827.6 126.9L829.1 126.8L830.6 126.8L832.1 127.2L833.6 126.9L834.8 127.2M834.8 92.5L836.3 92.5L837.8 92.6L839.3 92.4L840.8 92.5L842.3 92.8L843.8 92.8L845.3 92.8L846.8 92.7L848.3 92.8L849.8 92.8L851.3 92.6L852.8 92.7L854.3 92.4L855.8 92.7L857.3 92.6L858.8 92.7L860.3 92.7L861.8 92.5L863.1 92.4M863.1 127.2L864.6 126.8L866.1 127.0L867.6 126.9L869.1 126.9L870.6 127.1L872.1 127.2L873.6 126.9L875.1 127.1L876.6 126.9L878.1 127.0L879.6 126.9L881.1 126.8L882.6 126.8L884.1 126.9L885.6 127.2L887.1 127.0L888.6 126.9L890.1 127.2L891.6 127.2L893.1 127.0L894.6 126.8L896.1 126.8L897.6 126.8L899.1 126.9L900.6 126.8L902.1 126.9L903.6 126.9L905.1 127.0L906.6 127.2L908.1 127.1L909.6 127.0L911.1 127.0L912.6 127.0L914.1 126.9L915.6 126.9L917.1 126.8L918.6 126.9L920.1 127.2L921.6 126.8L923.1 127.0L924.6 127.1L926.1 127.2L927.6 126.9L929.1 126.9L930.6 126.9L932.1 126.9L933.6 127.0L935.1 127.2L936.6 127.2L938.1 127.2L939.6 126.8L941.1 126.8L942.6 127.1L944.1 127.2L945.6 127.0L947.1 127.0L948.6 126.8L950.1 126.9L951.6 127.2L953.1 127.2L954.6 127.2L956.1 127.2L957.6 126.9L959.1 126.8L960.6 126.8L962.1 127.0L963.6 127.1L965.1 127.2L966.6 127.1L968.1 127.1L969.6 127.1L971.1 127.0L972.6 127.0L974.1 126.8L975.6 127.1L977.1 126.9L978.6 127.2L980.1 127.1L981.6 126.9L983.1 126.8L984.6 126.9L986.1 127.1L987.6 127.1L989.1 126.8L990.6 126.8L992.1 127.0L993.6 127.0L995.1 126.9L996.6 126.9L998.1 127.1L999.6 126.8L1001.1 126.9L1002.6 127.0L1004.1 127.2L1005.6 127.1L1007.1 127.2L1008.6 127.0L1010.1 126.9L1011.6 126.9L1013.1 127.2L1014.6 127.1L1016.1 126.9L1017.6 126.8L1019.1 127.0L1020.6 127.1L1022.1 127.0L1023.6 126.9L1025.1 127.1L1026.6 127.2L1028.1 126.9L1029.6 126.8L1031.1 126.9L1032.6 127.0L1034.1 127.1L1035.6 126.8L1037.1 127.1L1038.6 127.1L1040.1 127.0L1041.6 126.9L1043.1 127.2L1044.6 126.9L1046.1 127.2L1047.6 126.9L1049.1 126.9L1050.6 127.1L1052.1 126.9L1053.6 127.2L1055.1 127.0L1056.6 126.8L1058.1 126.9L1059.6 127.0L1061.1 127.1L1062.6 127.2L1064.1 126.8L1065.6 126.9L1067.1 126.9L1068.6 127.2L1070.1 126.8L1071.6 126.8L1073.1 126.8L1074.6 126.9L1076.1 127.2L1077.6 127.2L1079.1 127.1L1080.6 127.2L1082.1 127.2L1083.6 126.9L1085.1 126.8L1086.6 127.2L1088.1 127.1L1089.6 126.8L1091.1 127.1L1092.6 126.9L1094.1 126.9L1095.6 126.9L1097.1 126.8L1098.6 126.8L1100.1 126.9L1101.6 126.9L1103.1 127.2L1104.6 126.8L1106.1 127.2L1107.6 126.9L1109.1 126.9L1110.6 127.2L1112.1 127.2L1113.6 127.0L1115.1 126.8L1116.6 127.0L1118.1 126.9L1119.6 127.2L1121.1 126.8L1122.6 126.9L1124.1 127.2L1125.6 126.8L1127.1 127.0L1128.6 127.2L1130.1 127.1L1131.6 126.8L1133.1 126.8L1134.6 126.8L1136.1 127.2L1137.6 126.9L1139.1 127.1L1140.4 127.2" fill="none" stroke="#f6f68c" stroke-width="0.97" stroke-opacity="0.85" stroke-linejoin="round"/>
<line x1="439.0" y1="127.0" x2="439.0" y2="89.6" stroke="#c9c98c" stroke-width="1.3"/>
<line x1="467.275" y1="92.6" x2="467.275" y2="133.0" stroke="#8f8f38" stroke-width="1.3"/>
<line x1="495.55" y1="127.0" x2="495.55" y2="89.6" stroke="#c9c98c" stroke-width="1.3"/>
<line x1="523.825" y1="92.6" x2="523.825" y2="133.0" stroke="#8f8f38" stroke-width="1.3"/>
<line x1="552.1" y1="127.0" x2="552.1" y2="89.6" stroke="#c9c98c" stroke-width="1.3"/>
<line x1="580.375" y1="92.6" x2="580.375" y2="133.0" stroke="#8f8f38" stroke-width="1.3"/>
<line x1="608.65" y1="127.0" x2="608.65" y2="89.6" stroke="#c9c98c" stroke-width="1.3"/>
<line x1="636.925" y1="92.6" x2="636.925" y2="133.0" stroke="#8f8f38" stroke-width="1.3"/>
<line x1="665.2" y1="127.0" x2="665.2" y2="89.6" stroke="#c9c98c" stroke-width="1.3"/>
<line x1="693.475" y1="92.6" x2="693.475" y2="133.0" stroke="#8f8f38" stroke-width="1.3"/>
<line x1="721.75" y1="127.0" x2="721.75" y2="89.6" stroke="#c9c98c" stroke-width="1.3"/>
<line x1="750.025" y1="92.6" x2="750.025" y2="133.0" stroke="#8f8f38" stroke-width="1.3"/>
<line x1="778.3" y1="127.0" x2="778.3" y2="89.6" stroke="#c9c98c" stroke-width="1.3"/>
<line x1="806.5749999999999" y1="92.6" x2="806.5749999999999" y2="133.0" stroke="#8f8f38" stroke-width="1.3"/>
<line x1="834.8499999999999" y1="127.0" x2="834.8499999999999" y2="89.6" stroke="#c9c98c" stroke-width="1.3"/>
<line x1="863.1249999999999" y1="92.6" x2="863.1249999999999" y2="133.0" stroke="#8f8f38" stroke-width="1.3"/>
<path d="M9.2 277.9L10.7 277.9L12.2 278.3L13.7 278.1L15.2 277.9L16.7 278.1L18.2 277.9L19.7 277.9L21.2 277.7L22.7 278.2L24.2 278.2L25.7 278.1L27.2 278.3L28.7 277.7L30.2 277.8L31.7 278.0L33.2 278.3L34.7 278.3L36.2 277.9L37.7 277.9L39.2 278.0L40.7 278.0L42.2 278.3L43.7 277.8L45.2 278.2L46.7 278.1L48.2 278.2L49.7 278.2L51.2 278.1L52.7 277.9L54.2 277.9L55.7 277.9L57.2 278.2L58.7 277.7L60.2 277.8L61.7 278.2L63.2 277.8L64.7 277.7L66.2 277.7L67.7 278.0L69.2 277.9L70.7 278.3L72.2 278.2L73.7 278.3L75.2 277.9L76.7 277.8L78.2 277.8L79.7 278.0L81.2 278.1L82.7 278.0L84.2 277.8L85.7 278.0L87.2 278.1L88.7 278.1L90.2 278.1L91.7 278.2L93.2 278.1L94.7 277.8L96.2 278.2L97.7 277.9L99.2 278.0L100.7 277.9L102.2 278.1L103.7 277.8L105.2 277.8L106.7 277.8L108.2 277.8L109.7 278.2L111.2 278.0L112.7 277.9L114.2 277.9L115.7 278.3L117.2 278.0L118.7 277.8L120.2 278.2L121.7 278.1L123.2 278.3L124.7 277.8L126.2 278.0L127.7 278.2L129.2 278.2L130.7 278.2L132.2 277.7L133.7 277.9L135.2 277.8L136.7 277.8L138.2 278.3L139.7 278.0L141.2 278.3L142.7 277.9L144.2 278.2L145.7 278.0L147.2 277.9L148.7 278.2L150.2 278.3L151.7 277.8L153.2 278.1L154.7 278.1L156.2 277.8L157.7 277.9L159.2 277.8L160.7 277.8L162.2 277.9L163.7 278.1L165.2 278.1L166.7 277.8L168.2 277.7L169.7 277.9L171.2 278.1L172.7 277.8L174.2 277.9L175.7 277.8L177.2 278.2L178.7 278.0L180.2 277.7L181.7 277.8L183.2 277.9L184.7 278.0L186.2 278.1L187.7 277.8L189.2 277.8L190.7 278.1L192.2 277.9L193.7 277.9L195.2 277.9L196.7 278.3L198.2 277.9L199.7 278.0L201.2 277.9L202.7 277.9L204.2 278.2L205.7 278.3L207.2 277.9L208.7 277.8L210.2 278.1L211.7 277.8L213.2 277.7L214.7 278.2L216.2 278.0L217.7 278.2L219.2 277.9L220.7 278.2L222.2 278.0L223.7 277.8L225.2 277.7L226.7 278.0L228.2 278.1L229.7 278.2L231.2 277.8L232.7 278.1L234.2 277.9L235.7 278.0L237.2 277.8L238.7 277.9L240.2 278.0L241.7 278.3L243.2 277.8L244.7 278.0L246.2 278.2L247.7 278.3L249.2 277.8L250.7 277.8L252.2 278.3L253.7 278.3L255.2 278.0L256.7 277.7L258.2 278.3L259.7 277.9L261.2 278.2L262.7 278.1L264.2 278.2L265.7 277.8L267.2 278.2L268.7 277.8L270.2 277.9L271.7 278.2L273.2 278.2L274.7 277.8L276.2 277.8L277.7 277.9L279.2 278.0L280.7 277.9L282.2 277.8L283.7 277.8L285.2 278.1L286.7 278.2L288.2 277.7L289.7 278.0L291.2 278.2L292.7 277.7L294.2 278.2L295.7 277.8L297.2 278.1L298.7 278.0L300.2 278.1L301.7 277.9L303.2 278.0L304.7 278.0L306.2 278.0L307.7 278.1L309.2 278.0L310.7 278.0L312.2 277.7L313.7 278.1L315.2 278.0L316.7 277.8L318.2 278.2L319.7 278.2L321.2 278.0L322.7 277.8L324.2 278.0L325.7 277.8L327.2 277.8L328.7 278.0L330.2 277.8L331.7 278.0L333.2 278.0L334.7 277.7L336.2 278.1L337.7 277.7L339.2 278.1L340.7 278.2L342.2 278.0L343.7 277.7L345.2 278.0L346.7 277.9L348.2 278.3L349.7 277.8L351.2 278.2L352.7 278.3L354.2 278.1L355.7 278.2L357.2 277.8L358.7 278.3L360.2 278.0L361.7 278.3L363.2 278.2L364.7 277.8L366.2 278.2L367.7 278.3L369.2 277.7L370.7 277.9L372.2 278.2L373.7 277.8L375.2 278.2L376.7 277.9L378.2 278.2L379.7 277.8L381.2 278.0L382.7 278.3L384.2 277.8L385.7 277.9L387.2 278.0L388.7 277.9L390.2 277.7L391.7 277.8L393.2 277.8L394.7 278.3L396.2 278.1L397.7 278.2L399.2 277.8L400.7 278.2L402.2 277.8L403.7 278.0L405.2 278.1L406.7 277.9L408.2 278.2L409.7 278.0L411.2 278.0L412.7 278.2L414.2 277.8L415.7 278.3L417.2 278.1L418.7 277.9L420.2 278.2L421.7 277.9L423.2 278.3L424.7 278.0L426.2 277.9L427.7 278.2L429.2 278.0L430.7 277.8L432.2 278.1L433.7 277.7L435.2 278.2L436.7 277.9L438.2 278.1L439.7 278.3L441.2 278.1L442.7 278.1L444.2 277.9L445.7 277.7L447.2 277.7L448.7 277.8L450.2 278.1L451.7 278.0L453.2 278.0L454.7 278.2L456.2 277.8L457.7 277.8L459.2 278.1L460.7 277.7L462.2 277.7L463.7 277.9L465.2 277.8L466.7 277.9L468.2 277.8L469.7 278.1L471.2 278.1L472.7 277.8L474.2 278.1L475.7 278.0L477.2 277.8L478.7 278.3L480.2 277.8L481.7 277.8L483.2 277.8L484.7 278.1L486.2 278.2L487.7 278.2L489.2 277.9L490.7 277.9L492.2 277.7L493.7 278.1L495.2 278.0L496.7 277.9L498.2 278.1L499.7 278.0L501.2 278.3L502.7 278.1L504.2 277.8L505.7 278.2L507.2 277.7L508.7 278.0L510.2 277.9L511.7 277.8L513.2 277.7L514.7 278.2L516.2 277.7L517.7 278.0L519.2 278.3L520.7 277.8L522.2 277.8L523.7 278.1L525.2 278.0L526.7 278.1L528.2 278.2L529.7 277.8L531.2 277.9L532.7 277.9L534.2 277.7L535.7 278.2L537.2 278.2L538.7 278.1L540.2 277.7L541.7 278.2L543.2 278.1L544.7 278.0L546.2 278.1L547.7 278.0L549.2 277.8L550.7 277.8L552.2 277.8L553.7 277.7L555.2 277.9L556.7 278.1L558.2 278.1L559.7 278.2L561.2 278.1L562.7 277.9L564.2 278.0L565.7 278.0L567.2 278.2L568.7 278.0L570.2 277.9L571.7 278.1L573.2 278.3L574.7 277.8L576.2 278.2L577.7 277.7L579.2 277.9L580.7 277.8L582.2 278.1L583.7 278.3L585.2 278.1L586.7 277.9L588.2 278.2L589.7 277.9L591.2 277.8L592.7 278.2L594.2 278.1L595.7 278.1L597.2 278.1L598.7 278.3L600.2 278.0L601.7 278.2L603.2 278.1L604.7 278.2L606.2 278.0L607.7 278.1L609.2 278.0L610.7 277.9L612.2 277.8L613.7 278.1L615.2 277.7L616.7 278.2L618.2 277.8L619.7 277.7L621.2 277.8L622.7 278.3L624.2 277.9L625.7 277.8L627.2 277.7L628.7 277.7L630.2 278.1L631.7 278.1L633.2 278.1L634.7 278.1L636.2 277.7L637.7 278.1L639.2 277.9L640.7 278.2L642.2 278.2L643.7 278.2L645.2 277.7L646.7 278.2L648.2 278.2L649.7 278.3L651.2 277.8L652.7 277.8L654.2 277.8L655.7 277.7L657.2 278.2L658.7 278.2L660.2 278.1L661.7 278.2L663.2 278.1L664.7 277.9L666.2 277.8L667.7 277.8L669.2 278.2L670.7 277.8L672.2 277.9L673.7 278.0L675.2 277.7L676.7 277.9L678.2 277.9L679.7 278.1L681.2 277.9L682.7 277.9L684.2 278.3L685.7 278.0L687.2 278.2L688.7 278.1L690.2 277.7L691.7 277.9L693.0 278.0M693.0 220.8L694.5 220.5L696.0 220.7L697.5 220.6L699.0 220.4L700.5 220.8L702.0 220.4L703.5 220.8L705.0 220.4L706.5 220.3L708.0 220.4L709.5 220.8L711.0 220.9L712.5 220.3L714.0 220.6L715.5 220.6L717.0 220.8L718.5 220.4L720.0 220.6L721.5 220.5L723.0 220.8L724.5 220.5L726.0 220.9L727.5 220.5L729.0 220.4L730.5 220.7L732.0 220.6L733.5 220.4L735.0 220.7L736.5 220.3L738.0 220.8L739.5 220.7L741.0 220.8L742.5 220.7L744.0 220.5L745.5 220.5L747.0 220.5L748.5 220.8L749.6 220.4M749.6 278.2L751.1 277.7L752.6 277.8L754.1 277.9L755.6 278.2L757.1 278.0L758.6 277.9L760.1 278.2L761.6 277.8L763.1 278.0L764.6 278.0L766.1 278.2L767.6 278.2L769.1 278.1L770.6 277.9L772.1 277.9L773.6 277.8L775.1 278.2L776.6 278.1L778.1 278.1L779.6 277.8L781.1 278.0L782.6 278.2L784.1 278.0L785.6 277.8L787.1 278.0L788.6 278.2L790.1 277.8L791.6 277.8L793.1 277.9L794.6 278.1L796.1 278.2L797.6 277.8L799.1 277.8L800.6 277.8L802.1 277.9L803.6 278.0L805.1 277.8L806.6 277.9L808.1 277.8L809.6 278.3L811.1 278.1L812.6 277.8L814.1 278.3L815.6 277.8L817.1 277.9L818.6 278.3L820.1 278.2L821.6 278.1L823.1 278.0L824.6 277.8L826.1 278.1L827.6 277.8L829.1 277.8L830.6 277.9L832.1 277.7L833.6 277.9L835.1 278.2L836.6 278.1L838.1 278.0L839.6 278.1L841.1 278.0L842.6 277.8L844.1 278.1L845.6 277.9L847.1 278.1L848.6 278.2L850.1 278.0L851.6 278.0L853.1 278.1L854.6 278.0L856.1 277.8L857.6 278.1L859.1 278.2L860.6 278.2L862.1 278.1L863.6 278.2L865.1 278.1L866.6 278.1L868.1 278.0L869.6 277.9L871.1 278.1L872.6 277.8L874.1 278.0L875.6 278.2L877.1 278.1L878.6 278.1L880.1 277.9L881.6 278.0L883.1 278.0L884.6 278.1L886.1 277.9L887.6 278.1L889.1 278.3L890.6 277.8L892.1 278.1L893.6 278.2L895.1 277.9L896.6 278.0L898.1 278.3L899.6 277.7L901.1 278.0L902.6 277.8L904.1 278.2L905.6 278.3L907.1 278.0L908.6 277.8L910.1 278.0L911.6 278.0L913.1 278.1L914.6 278.0L916.1 278.1L917.6 278.2L919.1 278.0L920.6 277.9L922.1 278.3L923.6 277.8L925.1 278.1L926.6 277.9L928.1 278.2L929.6 277.8L931.1 278.3L932.6 277.9L934.1 277.7L935.6 277.9L937.1 277.9L938.6 277.7L940.1 278.0L941.6 278.0L943.1 278.1L944.6 277.9L946.1 277.9L947.6 277.8L949.1 278.1L950.6 278.3L952.1 278.0L953.6 277.8L955.1 278.2L956.6 277.9L958.1 277.8L959.6 277.8L961.1 278.2L962.6 278.2L964.1 278.1L965.6 278.0L967.1 278.0L968.6 277.8L970.1 278.3L971.6 277.9L973.1 278.1L974.6 278.2L976.1 278.2L977.6 278.0L979.1 277.9L980.6 278.0L982.1 277.8L983.6 278.2L985.1 277.9L986.6 278.2L988.1 277.9L989.6 277.9L991.1 277.9L992.6 278.0L994.1 277.8L995.6 277.7L997.1 278.1L998.6 277.9L1000.1 277.8L1001.6 277.9L1003.1 278.0L1004.6 278.0L1006.1 278.1L1007.6 278.1L1009.1 277.9L1010.6 278.3L1012.1 278.2L1013.6 277.7L1015.1 278.2L1016.6 278.2L1018.1 278.2L1019.6 277.8L1021.1 278.2L1022.6 278.1L1024.1 277.7L1025.6 277.7L1027.1 278.3L1028.6 278.1L1030.1 277.9L1031.6 277.8L1033.1 277.8L1034.6 277.8L1036.1 278.2L1037.6 277.9L1039.1 277.8L1040.6 278.2L1042.1 278.2L1043.6 277.8L1045.1 278.2L1046.6 278.1L1048.1 278.2L1049.6 278.1L1051.1 278.2L1052.6 278.2L1054.1 278.2L1055.6 277.8L1057.1 278.1L1058.6 278.0L1060.1 278.1L1061.6 278.0L1063.1 278.2L1064.6 278.0L1066.1 277.9L1067.6 277.8L1069.1 277.8L1070.6 278.0L1072.1 277.7L1073.6 278.0L1075.1 277.8L1076.6 278.0L1078.1 278.0L1079.6 278.0L1081.1 278.2L1082.6 277.7L1084.1 278.2L1085.6 278.0L1087.1 278.0L1088.6 278.1L1090.1 278.2L1091.6 277.9L1093.1 278.0L1094.6 278.3L1096.1 277.7L1097.6 278.1L1099.1 278.1L1100.6 277.7L1102.1 278.1L1103.6 278.1L1105.1 278.3L1106.6 277.9L1108.1 278.3L1109.6 278.0L1111.1 278.0L1112.6 278.2L1114.1 277.7L1115.6 278.1L1117.1 278.1L1118.6 277.9L1120.1 278.2L1121.6 277.9L1123.1 278.0L1124.6 278.0L1126.1 278.2L1127.6 277.8L1129.1 278.0L1130.6 278.0L1132.1 278.0L1133.6 278.2L1135.1 277.9L1136.6 278.2L1138.1 277.9L1139.6 278.0L1140.4 277.9" fill="none" stroke="#48c4b4" stroke-width="2.8" stroke-linejoin="round"/>
<path d="M9.2 277.9L10.7 277.9L12.2 278.3L13.7 278.1L15.2 277.9L16.7 278.1L18.2 277.9L19.7 277.9L21.2 277.7L22.7 278.2L24.2 278.2L25.7 278.1L27.2 278.3L28.7 277.7L30.2 277.8L31.7 278.0L33.2 278.3L34.7 278.3L36.2 277.9L37.7 277.9L39.2 278.0L40.7 278.0L42.2 278.3L43.7 277.8L45.2 278.2L46.7 278.1L48.2 278.2L49.7 278.2L51.2 278.1L52.7 277.9L54.2 277.9L55.7 277.9L57.2 278.2L58.7 277.7L60.2 277.8L61.7 278.2L63.2 277.8L64.7 277.7L66.2 277.7L67.7 278.0L69.2 277.9L70.7 278.3L72.2 278.2L73.7 278.3L75.2 277.9L76.7 277.8L78.2 277.8L79.7 278.0L81.2 278.1L82.7 278.0L84.2 277.8L85.7 278.0L87.2 278.1L88.7 278.1L90.2 278.1L91.7 278.2L93.2 278.1L94.7 277.8L96.2 278.2L97.7 277.9L99.2 278.0L100.7 277.9L102.2 278.1L103.7 277.8L105.2 277.8L106.7 277.8L108.2 277.8L109.7 278.2L111.2 278.0L112.7 277.9L114.2 277.9L115.7 278.3L117.2 278.0L118.7 277.8L120.2 278.2L121.7 278.1L123.2 278.3L124.7 277.8L126.2 278.0L127.7 278.2L129.2 278.2L130.7 278.2L132.2 277.7L133.7 277.9L135.2 277.8L136.7 277.8L138.2 278.3L139.7 278.0L141.2 278.3L142.7 277.9L144.2 278.2L145.7 278.0L147.2 277.9L148.7 278.2L150.2 278.3L151.7 277.8L153.2 278.1L154.7 278.1L156.2 277.8L157.7 277.9L159.2 277.8L160.7 277.8L162.2 277.9L163.7 278.1L165.2 278.1L166.7 277.8L168.2 277.7L169.7 277.9L171.2 278.1L172.7 277.8L174.2 277.9L175.7 277.8L177.2 278.2L178.7 278.0L180.2 277.7L181.7 277.8L183.2 277.9L184.7 278.0L186.2 278.1L187.7 277.8L189.2 277.8L190.7 278.1L192.2 277.9L193.7 277.9L195.2 277.9L196.7 278.3L198.2 277.9L199.7 278.0L201.2 277.9L202.7 277.9L204.2 278.2L205.7 278.3L207.2 277.9L208.7 277.8L210.2 278.1L211.7 277.8L213.2 277.7L214.7 278.2L216.2 278.0L217.7 278.2L219.2 277.9L220.7 278.2L222.2 278.0L223.7 277.8L225.2 277.7L226.7 278.0L228.2 278.1L229.7 278.2L231.2 277.8L232.7 278.1L234.2 277.9L235.7 278.0L237.2 277.8L238.7 277.9L240.2 278.0L241.7 278.3L243.2 277.8L244.7 278.0L246.2 278.2L247.7 278.3L249.2 277.8L250.7 277.8L252.2 278.3L253.7 278.3L255.2 278.0L256.7 277.7L258.2 278.3L259.7 277.9L261.2 278.2L262.7 278.1L264.2 278.2L265.7 277.8L267.2 278.2L268.7 277.8L270.2 277.9L271.7 278.2L273.2 278.2L274.7 277.8L276.2 277.8L277.7 277.9L279.2 278.0L280.7 277.9L282.2 277.8L283.7 277.8L285.2 278.1L286.7 278.2L288.2 277.7L289.7 278.0L291.2 278.2L292.7 277.7L294.2 278.2L295.7 277.8L297.2 278.1L298.7 278.0L300.2 278.1L301.7 277.9L303.2 278.0L304.7 278.0L306.2 278.0L307.7 278.1L309.2 278.0L310.7 278.0L312.2 277.7L313.7 278.1L315.2 278.0L316.7 277.8L318.2 278.2L319.7 278.2L321.2 278.0L322.7 277.8L324.2 278.0L325.7 277.8L327.2 277.8L328.7 278.0L330.2 277.8L331.7 278.0L333.2 278.0L334.7 277.7L336.2 278.1L337.7 277.7L339.2 278.1L340.7 278.2L342.2 278.0L343.7 277.7L345.2 278.0L346.7 277.9L348.2 278.3L349.7 277.8L351.2 278.2L352.7 278.3L354.2 278.1L355.7 278.2L357.2 277.8L358.7 278.3L360.2 278.0L361.7 278.3L363.2 278.2L364.7 277.8L366.2 278.2L367.7 278.3L369.2 277.7L370.7 277.9L372.2 278.2L373.7 277.8L375.2 278.2L376.7 277.9L378.2 278.2L379.7 277.8L381.2 278.0L382.7 278.3L384.2 277.8L385.7 277.9L387.2 278.0L388.7 277.9L390.2 277.7L391.7 277.8L393.2 277.8L394.7 278.3L396.2 278.1L397.7 278.2L399.2 277.8L400.7 278.2L402.2 277.8L403.7 278.0L405.2 278.1L406.7 277.9L408.2 278.2L409.7 278.0L411.2 278.0L412.7 278.2L414.2 277.8L415.7 278.3L417.2 278.1L418.7 277.9L420.2 278.2L421.7 277.9L423.2 278.3L424.7 278.0L426.2 277.9L427.7 278.2L429.2 278.0L430.7 277.8L432.2 278.1L433.7 277.7L435.2 278.2L436.7 277.9L438.2 278.1L439.7 278.3L441.2 278.1L442.7 278.1L444.2 277.9L445.7 277.7L447.2 277.7L448.7 277.8L450.2 278.1L451.7 278.0L453.2 278.0L454.7 278.2L456.2 277.8L457.7 277.8L459.2 278.1L460.7 277.7L462.2 277.7L463.7 277.9L465.2 277.8L466.7 277.9L468.2 277.8L469.7 278.1L471.2 278.1L472.7 277.8L474.2 278.1L475.7 278.0L477.2 277.8L478.7 278.3L480.2 277.8L481.7 277.8L483.2 277.8L484.7 278.1L486.2 278.2L487.7 278.2L489.2 277.9L490.7 277.9L492.2 277.7L493.7 278.1L495.2 278.0L496.7 277.9L498.2 278.1L499.7 278.0L501.2 278.3L502.7 278.1L504.2 277.8L505.7 278.2L507.2 277.7L508.7 278.0L510.2 277.9L511.7 277.8L513.2 277.7L514.7 278.2L516.2 277.7L517.7 278.0L519.2 278.3L520.7 277.8L522.2 277.8L523.7 278.1L525.2 278.0L526.7 278.1L528.2 278.2L529.7 277.8L531.2 277.9L532.7 277.9L534.2 277.7L535.7 278.2L537.2 278.2L538.7 278.1L540.2 277.7L541.7 278.2L543.2 278.1L544.7 278.0L546.2 278.1L547.7 278.0L549.2 277.8L550.7 277.8L552.2 277.8L553.7 277.7L555.2 277.9L556.7 278.1L558.2 278.1L559.7 278.2L561.2 278.1L562.7 277.9L564.2 278.0L565.7 278.0L567.2 278.2L568.7 278.0L570.2 277.9L571.7 278.1L573.2 278.3L574.7 277.8L576.2 278.2L577.7 277.7L579.2 277.9L580.7 277.8L582.2 278.1L583.7 278.3L585.2 278.1L586.7 277.9L588.2 278.2L589.7 277.9L591.2 277.8L592.7 278.2L594.2 278.1L595.7 278.1L597.2 278.1L598.7 278.3L600.2 278.0L601.7 278.2L603.2 278.1L604.7 278.2L606.2 278.0L607.7 278.1L609.2 278.0L610.7 277.9L612.2 277.8L613.7 278.1L615.2 277.7L616.7 278.2L618.2 277.8L619.7 277.7L621.2 277.8L622.7 278.3L624.2 277.9L625.7 277.8L627.2 277.7L628.7 277.7L630.2 278.1L631.7 278.1L633.2 278.1L634.7 278.1L636.2 277.7L637.7 278.1L639.2 277.9L640.7 278.2L642.2 278.2L643.7 278.2L645.2 277.7L646.7 278.2L648.2 278.2L649.7 278.3L651.2 277.8L652.7 277.8L654.2 277.8L655.7 277.7L657.2 278.2L658.7 278.2L660.2 278.1L661.7 278.2L663.2 278.1L664.7 277.9L666.2 277.8L667.7 277.8L669.2 278.2L670.7 277.8L672.2 277.9L673.7 278.0L675.2 277.7L676.7 277.9L678.2 277.9L679.7 278.1L681.2 277.9L682.7 277.9L684.2 278.3L685.7 278.0L687.2 278.2L688.7 278.1L690.2 277.7L691.7 277.9L693.0 278.0M693.0 220.8L694.5 220.5L696.0 220.7L697.5 220.6L699.0 220.4L700.5 220.8L702.0 220.4L703.5 220.8L705.0 220.4L706.5 220.3L708.0 220.4L709.5 220.8L711.0 220.9L712.5 220.3L714.0 220.6L715.5 220.6L717.0 220.8L718.5 220.4L720.0 220.6L721.5 220.5L723.0 220.8L724.5 220.5L726.0 220.9L727.5 220.5L729.0 220.4L730.5 220.7L732.0 220.6L733.5 220.4L735.0 220.7L736.5 220.3L738.0 220.8L739.5 220.7L741.0 220.8L742.5 220.7L744.0 220.5L745.5 220.5L747.0 220.5L748.5 220.8L749.6 220.4M749.6 278.2L751.1 277.7L752.6 277.8L754.1 277.9L755.6 278.2L757.1 278.0L758.6 277.9L760.1 278.2L761.6 277.8L763.1 278.0L764.6 278.0L766.1 278.2L767.6 278.2L769.1 278.1L770.6 277.9L772.1 277.9L773.6 277.8L775.1 278.2L776.6 278.1L778.1 278.1L779.6 277.8L781.1 278.0L782.6 278.2L784.1 278.0L785.6 277.8L787.1 278.0L788.6 278.2L790.1 277.8L791.6 277.8L793.1 277.9L794.6 278.1L796.1 278.2L797.6 277.8L799.1 277.8L800.6 277.8L802.1 277.9L803.6 278.0L805.1 277.8L806.6 277.9L808.1 277.8L809.6 278.3L811.1 278.1L812.6 277.8L814.1 278.3L815.6 277.8L817.1 277.9L818.6 278.3L820.1 278.2L821.6 278.1L823.1 278.0L824.6 277.8L826.1 278.1L827.6 277.8L829.1 277.8L830.6 277.9L832.1 277.7L833.6 277.9L835.1 278.2L836.6 278.1L838.1 278.0L839.6 278.1L841.1 278.0L842.6 277.8L844.1 278.1L845.6 277.9L847.1 278.1L848.6 278.2L850.1 278.0L851.6 278.0L853.1 278.1L854.6 278.0L856.1 277.8L857.6 278.1L859.1 278.2L860.6 278.2L862.1 278.1L863.6 278.2L865.1 278.1L866.6 278.1L868.1 278.0L869.6 277.9L871.1 278.1L872.6 277.8L874.1 278.0L875.6 278.2L877.1 278.1L878.6 278.1L880.1 277.9L881.6 278.0L883.1 278.0L884.6 278.1L886.1 277.9L887.6 278.1L889.1 278.3L890.6 277.8L892.1 278.1L893.6 278.2L895.1 277.9L896.6 278.0L898.1 278.3L899.6 277.7L901.1 278.0L902.6 277.8L904.1 278.2L905.6 278.3L907.1 278.0L908.6 277.8L910.1 278.0L911.6 278.0L913.1 278.1L914.6 278.0L916.1 278.1L917.6 278.2L919.1 278.0L920.6 277.9L922.1 278.3L923.6 277.8L925.1 278.1L926.6 277.9L928.1 278.2L929.6 277.8L931.1 278.3L932.6 277.9L934.1 277.7L935.6 277.9L937.1 277.9L938.6 277.7L940.1 278.0L941.6 278.0L943.1 278.1L944.6 277.9L946.1 277.9L947.6 277.8L949.1 278.1L950.6 278.3L952.1 278.0L953.6 277.8L955.1 278.2L956.6 277.9L958.1 277.8L959.6 277.8L961.1 278.2L962.6 278.2L964.1 278.1L965.6 278.0L967.1 278.0L968.6 277.8L970.1 278.3L971.6 277.9L973.1 278.1L974.6 278.2L976.1 278.2L977.6 278.0L979.1 277.9L980.6 278.0L982.1 277.8L983.6 278.2L985.1 277.9L986.6 278.2L988.1 277.9L989.6 277.9L991.1 277.9L992.6 278.0L994.1 277.8L995.6 277.7L997.1 278.1L998.6 277.9L1000.1 277.8L1001.6 277.9L1003.1 278.0L1004.6 278.0L1006.1 278.1L1007.6 278.1L1009.1 277.9L1010.6 278.3L1012.1 278.2L1013.6 277.7L1015.1 278.2L1016.6 278.2L1018.1 278.2L1019.6 277.8L1021.1 278.2L1022.6 278.1L1024.1 277.7L1025.6 277.7L1027.1 278.3L1028.6 278.1L1030.1 277.9L1031.6 277.8L1033.1 277.8L1034.6 277.8L1036.1 278.2L1037.6 277.9L1039.1 277.8L1040.6 278.2L1042.1 278.2L1043.6 277.8L1045.1 278.2L1046.6 278.1L1048.1 278.2L1049.6 278.1L1051.1 278.2L1052.6 278.2L1054.1 278.2L1055.6 277.8L1057.1 278.1L1058.6 278.0L1060.1 278.1L1061.6 278.0L1063.1 278.2L1064.6 278.0L1066.1 277.9L1067.6 277.8L1069.1 277.8L1070.6 278.0L1072.1 277.7L1073.6 278.0L1075.1 277.8L1076.6 278.0L1078.1 278.0L1079.6 278.0L1081.1 278.2L1082.6 277.7L1084.1 278.2L1085.6 278.0L1087.1 278.0L1088.6 278.1L1090.1 278.2L1091.6 277.9L1093.1 278.0L1094.6 278.3L1096.1 277.7L1097.6 278.1L1099.1 278.1L1100.6 277.7L1102.1 278.1L1103.6 278.1L1105.1 278.3L1106.6 277.9L1108.1 278.3L1109.6 278.0L1111.1 278.0L1112.6 278.2L1114.1 277.7L1115.6 278.1L1117.1 278.1L1118.6 277.9L1120.1 278.2L1121.6 277.9L1123.1 278.0L1124.6 278.0L1126.1 278.2L1127.6 277.8L1129.1 278.0L1130.6 278.0L1132.1 278.0L1133.6 278.2L1135.1 277.9L1136.6 278.2L1138.1 277.9L1139.6 278.0L1140.4 277.9" fill="none" stroke="#a6ecdc" stroke-width="1.18" stroke-opacity="0.85" stroke-linejoin="round"/>
<line x1="693.0" y1="278.0" x2="693.0" y2="217.6" stroke="#9aa9a6" stroke-width="1.3"/>
<line x1="749.6" y1="220.6" x2="749.6" y2="284.0" stroke="#3c8f88" stroke-width="1.3"/>
<path d="M9.2 373.7L10.7 374.0L12.2 373.8L13.7 373.9L15.2 373.6L16.7 373.6L18.2 373.6L19.7 373.8L21.2 373.8L22.7 373.9L24.2 373.4L25.7 373.8L27.2 373.9L28.7 373.7L30.2 373.4L31.7 373.6L33.2 373.4L34.7 373.5L36.2 374.0L37.7 373.8L39.2 373.8L40.7 373.9L42.2 373.9L43.7 373.8L45.2 373.8L46.7 373.8L48.2 373.8L49.7 373.8L51.2 373.8L52.7 373.5L54.2 373.8L55.7 373.7L57.2 373.9L58.7 373.5L60.2 373.5L61.7 373.4L63.2 373.9L64.7 373.9L66.2 373.8L67.7 373.6L69.2 373.9L70.7 373.9L72.2 373.7L73.7 373.6L75.2 373.6L76.7 373.7L78.2 373.6L79.7 373.7L81.2 373.8L82.7 374.0L84.2 373.4L85.7 373.7L87.2 373.4L88.7 373.5L90.2 373.9L91.7 373.7L93.2 374.0L94.7 373.7L96.2 373.4L97.7 373.6L99.2 373.8L100.7 374.0L102.2 374.0L103.7 373.7L105.2 373.6L106.7 373.5L108.2 373.8L109.7 373.5L111.2 373.5L112.7 373.4L114.2 373.4L115.7 373.8L117.2 373.5L118.7 374.0L120.2 373.5L121.7 373.9L123.2 373.5L124.7 373.4L126.2 373.8L127.7 373.5L129.2 373.8L130.7 373.5L132.2 373.4L133.7 373.9L135.2 373.8L136.7 373.9L138.2 373.8L139.7 373.5L141.2 373.8L142.7 373.8L144.2 373.7L145.7 374.0L147.2 373.6L148.7 374.0L150.2 373.8L151.7 373.4L153.2 373.4L154.7 373.8L156.2 373.9L157.7 373.4L159.2 373.6L160.7 373.8L162.2 373.5L163.7 373.9L165.2 373.7L166.7 373.4L168.2 373.6L169.7 373.7L171.2 373.7L172.7 373.8L174.2 373.5L175.7 373.9L177.2 373.6L178.7 373.8L180.2 373.8L181.7 373.7L183.2 373.6L184.7 373.9L186.2 374.0L187.7 373.9L189.2 373.7L190.7 373.6L192.2 373.4L193.7 374.0L195.2 373.8L196.7 373.9L198.2 373.6L199.7 373.8L201.2 374.0L202.7 373.9L204.2 373.8L205.7 373.6L207.2 373.7L208.7 373.9L210.2 373.6L211.7 373.8L213.2 373.8L214.7 373.9L216.2 373.9L217.7 373.6L219.2 373.4L220.7 373.6L222.2 373.7L223.7 373.8L225.2 373.9L226.7 373.9L228.2 373.4L229.7 373.9L231.2 373.9L232.7 373.9L234.2 373.7L235.7 373.6L237.2 373.9L238.7 373.9L240.2 373.8L241.7 373.9L243.2 373.6L244.7 373.5L246.2 373.7L247.7 373.9L249.2 373.5L250.7 373.9L252.2 374.0L253.7 373.5L255.2 373.8L256.7 373.8L258.2 373.7L259.7 373.5L261.2 373.6L262.7 373.9L264.2 373.9L265.7 373.7L267.2 373.5L268.7 373.9L270.2 373.9L271.7 373.5L273.2 373.7L274.7 373.9L276.2 373.9L277.7 373.7L279.2 373.7L280.7 373.8L282.2 373.5L283.7 373.5L285.2 373.5L286.7 373.8L288.2 373.6L289.7 373.7L291.2 373.6L292.7 373.7L294.2 373.5L295.7 373.4L297.2 374.0L298.7 373.6L300.2 373.5L301.7 373.8L303.2 373.9L304.7 373.5L306.2 373.8L307.7 373.6L309.2 373.7L310.7 373.4L312.2 373.4L313.7 374.0L315.2 373.9L316.7 373.7L318.2 373.7L319.7 373.6L321.2 373.9L322.7 373.7L324.2 374.0L325.7 373.9L327.2 373.9L328.7 374.0L330.2 373.6L331.7 373.4L333.2 373.5L334.7 373.5L336.2 373.5L337.7 373.4L339.2 373.7L340.7 373.9L342.2 373.7L343.7 374.0L345.2 373.9L346.7 373.4L348.2 373.8L349.7 373.6L351.2 373.5L352.7 374.0L354.2 373.6L355.7 373.7L357.2 373.8L358.7 374.0L360.2 373.8L361.7 373.6L363.2 373.7L364.7 373.5L366.2 374.0L367.7 374.0L369.2 373.5L370.7 373.4L372.2 373.6L373.7 373.6L375.2 373.9L376.7 373.9L378.2 373.9L379.7 373.4L381.2 373.9L382.7 373.8L384.2 373.8L385.7 374.0L387.2 373.4L388.7 373.5L390.2 373.9L391.7 374.0L393.2 373.8L394.7 373.6L396.2 373.8L397.7 373.9L399.2 373.5L400.7 373.6L402.2 373.6L403.7 373.5L405.2 373.7L406.7 373.5L408.2 373.5L409.7 373.5L411.2 373.8L412.7 373.4L414.2 373.8L415.7 373.5L417.2 373.4L418.7 374.0L420.0 373.5M420.0 432.3L421.5 432.2L423.0 432.2L424.5 431.8L426.0 432.0L427.5 431.8L429.0 432.3L430.5 432.2L432.0 432.1L433.5 432.0L435.0 431.9L436.5 432.2L438.0 432.0L439.5 432.1L441.0 431.8L442.5 431.8L444.0 431.7L445.5 432.1L447.0 432.0L448.5 431.8L450.0 432.2L451.5 431.9L453.0 431.9L454.5 431.8L456.0 431.9L457.5 432.2L459.0 431.9L460.5 431.8L462.0 432.0L463.5 431.9L465.0 432.2L466.5 431.8L468.0 432.3L469.5 431.7L471.0 432.2L472.5 432.1L474.0 431.8L475.5 432.0L477.0 431.9L478.5 431.9L480.0 431.8L481.5 431.9L483.0 432.3L484.5 432.3L486.0 432.3L487.5 431.8L489.0 431.9L490.5 432.2L492.0 431.7L493.5 432.1L495.0 431.9L496.5 432.3L498.0 431.7L499.5 432.2L501.0 431.9L502.5 431.8L504.0 431.7L505.5 432.2L507.0 432.0L508.5 431.8L510.0 432.0L511.5 432.2L513.0 431.8L514.5 432.0L516.0 431.8L517.5 431.8L519.0 432.2L520.5 432.1L522.0 431.8L523.5 431.7L525.0 431.8L526.5 432.1L528.0 432.0L529.5 431.9L531.0 431.8L532.5 432.1L534.0 432.1L535.5 432.2L537.0 432.0L538.5 431.8L540.0 431.7L541.5 432.1L543.0 431.9L544.5 432.1L546.0 431.7L547.5 432.2L549.0 431.9L550.5 432.2L552.0 432.2L553.5 432.0L555.0 431.7L556.5 432.2L558.0 432.0L559.5 432.2L561.0 431.9L562.5 431.8L564.0 432.2L565.5 431.9L567.0 431.8L568.5 431.9L570.0 432.1L571.5 431.7L573.0 432.0L574.5 432.0L576.0 432.0L577.5 431.8L579.0 432.1L580.5 432.2L582.0 432.2L583.5 431.9L585.0 432.1L586.5 431.9L588.0 432.2L589.5 431.7L591.0 432.2L592.5 432.3L594.0 432.0L595.5 432.0L597.0 432.0L598.5 432.0L600.0 431.7L601.5 432.3L603.0 431.8L604.5 431.8L606.0 431.8L607.5 431.9L609.0 432.2L610.5 431.7L612.0 431.8L613.5 432.1L615.0 431.8L616.5 431.7L618.0 432.1L619.5 432.0L621.0 432.0L622.5 432.1L624.0 431.8L625.5 432.2L627.0 432.1L628.5 431.7L630.0 431.8L631.5 432.0L633.0 432.0L634.5 431.9L636.0 431.8L637.5 431.9L639.0 431.8L640.5 432.1L642.0 432.2L643.5 431.8L645.0 432.0L646.5 432.1L648.0 431.8L649.5 432.2L651.0 432.3L652.5 431.9L654.0 432.0L655.5 432.2L657.0 432.0L658.5 431.9L660.0 432.3L661.5 432.2L663.0 431.9L664.5 431.8L666.0 431.9L667.5 432.0L669.0 432.3L670.5 432.2L672.0 432.2L673.5 432.2L675.0 432.2L676.5 431.7L678.0 432.0L679.5 432.3L681.0 432.3L682.5 431.8L684.0 432.0L685.5 432.1L687.0 431.9L688.5 432.0L690.0 431.7L691.5 432.0L693.0 432.0L694.5 431.7L696.0 431.8L697.5 432.3L699.0 432.2L700.5 432.3L702.0 432.1L703.5 432.2L705.0 432.2L706.5 432.2L708.0 431.7L709.5 432.1L711.0 431.9L712.5 432.1L714.0 431.9L715.5 432.0L717.0 432.3L718.5 432.1L720.0 431.9L721.5 432.0L723.0 432.0L724.5 432.3L726.0 431.9L727.5 431.9L729.0 432.1L730.5 431.8L732.0 432.1L733.5 432.3L735.0 432.0L736.5 431.9L738.0 432.0L739.5 432.0L741.0 431.8L742.5 431.8L744.0 431.8L745.5 431.9L747.0 431.9L748.5 431.9L750.0 431.8L751.5 431.8L753.0 432.0L754.5 432.2L756.0 432.1L757.5 432.0L759.0 432.1L760.5 431.8L762.0 432.1L763.5 432.0L765.0 432.0L766.5 432.1L768.0 432.0L769.5 431.9L771.0 431.8L772.5 431.8L774.0 432.0L775.5 431.9L777.0 432.1L778.5 431.7L780.0 431.9L781.5 432.2L783.0 431.8L784.5 432.0L786.0 432.0L787.5 431.9L789.0 432.3L790.5 431.9L792.0 432.2L793.5 431.8L795.0 431.7L796.5 432.2L798.0 432.0L799.5 431.7L801.0 431.9L802.5 432.0L804.0 432.1L805.5 431.8L807.0 431.8L808.5 432.3L810.0 432.1L811.5 431.8L813.0 431.9L814.5 431.9L816.0 432.1L817.5 432.1L819.0 432.2L820.5 432.2L822.0 432.0L823.5 432.1L825.0 432.1L826.5 432.2L828.0 432.0L829.5 432.2L831.0 432.1L832.5 432.2L834.0 431.8L835.5 432.2L837.0 431.7L838.5 432.2L840.0 432.1L841.5 432.0L843.0 432.3L844.5 432.0L846.0 432.0L847.5 432.2L849.0 432.2L850.5 432.1L852.0 431.9L853.5 432.0L855.0 432.0L856.5 432.1L858.0 431.9L859.5 431.9L861.0 432.0L862.5 431.9L864.0 431.9L865.5 432.2L867.0 432.2L868.5 432.0L869.5 432.0M869.5 373.5L871.0 373.6L872.5 373.5L874.0 373.7L875.5 373.7L877.0 373.5L878.5 374.0L880.0 373.6L881.5 373.9L883.0 373.9L884.5 374.0L886.0 373.5L887.5 373.7L889.0 373.9L890.5 373.4L892.0 373.4L893.5 373.7L895.0 373.7L896.5 374.0L898.0 373.9L899.5 373.7L901.0 374.0L902.5 373.7L904.0 373.7L905.5 373.8L907.0 373.6L908.5 373.6L910.0 373.8L911.5 373.6L913.0 374.0L914.5 373.8L916.0 373.7L917.5 373.5L919.0 373.6L920.5 373.6L922.0 373.7L923.5 373.7L925.0 373.9L926.5 374.0L928.0 373.7L929.5 373.7L931.0 373.8L932.5 374.0L934.0 373.6L935.5 373.7L937.0 373.9L938.5 373.5L940.0 373.6L941.5 374.0L943.0 373.9L944.5 373.7L946.0 373.5L947.5 373.9L949.0 373.8L950.5 373.9L952.0 374.0L953.5 373.9L955.0 373.7L956.5 373.5L958.0 373.6L959.5 373.7L961.0 373.7L962.5 373.5L964.0 373.5L965.5 373.8L967.0 373.8L968.5 373.6L970.0 374.0L971.5 373.8L973.0 373.4L974.5 373.6L976.0 373.9L977.5 373.6L979.0 373.8L980.5 373.4L982.0 373.6L983.5 373.9L985.0 373.8L986.5 373.8L988.0 373.5L989.5 373.7L991.0 373.7L992.5 373.6L994.0 373.8L995.5 373.7L997.0 374.0L998.5 373.7L1000.0 373.6L1001.5 373.5L1003.0 373.5L1004.5 373.9L1006.0 373.5L1007.5 373.5L1009.0 373.5L1010.5 373.7L1012.0 373.9L1013.5 373.8L1015.0 373.9L1016.5 373.4L1018.0 373.4L1019.5 373.9L1021.0 373.6L1022.5 373.8L1024.0 373.6L1025.5 373.5L1027.0 373.6L1028.5 373.5L1030.0 373.9L1031.5 373.7L1033.0 373.6L1034.5 373.7L1036.0 373.6L1037.5 373.4L1039.0 373.9L1040.5 373.7L1042.0 374.0L1043.5 373.7L1045.0 373.8L1046.5 373.5L1048.0 373.4L1049.5 374.0L1051.0 373.9L1052.5 373.6L1054.0 373.9L1055.5 373.9L1057.0 373.6L1058.5 373.8L1060.0 374.0L1061.5 373.7L1063.0 374.0L1064.5 373.5L1066.0 373.6L1067.5 373.8L1069.0 373.5L1070.5 373.6L1072.0 373.9L1073.5 373.7L1075.0 373.9L1076.5 373.5L1078.0 373.5L1079.5 373.6L1081.0 373.5L1082.5 374.0L1084.0 373.6L1085.5 373.7L1087.0 373.5L1088.5 373.7L1090.0 373.6L1091.5 373.6L1093.0 373.4L1094.5 373.5L1096.0 373.9L1097.5 373.6L1099.0 373.5L1100.5 373.5L1102.0 373.6L1103.5 373.5L1105.0 373.4L1106.5 373.8L1108.0 373.6L1109.5 373.5L1111.0 373.8L1112.5 373.5L1114.0 373.6L1115.5 373.9L1117.0 373.5L1118.5 373.7L1120.0 373.9L1121.5 373.9L1123.0 373.5L1124.5 373.6L1126.0 373.8L1127.5 373.6L1129.0 374.0L1130.5 373.5L1132.0 374.0L1133.5 373.7L1135.0 373.5L1136.5 373.7L1138.0 373.5L1139.5 373.8L1140.4 373.6" fill="none" stroke="#d81c58" stroke-width="3.1" stroke-linejoin="round"/>
<path d="M9.2 373.7L10.7 374.0L12.2 373.8L13.7 373.9L15.2 373.6L16.7 373.6L18.2 373.6L19.7 373.8L21.2 373.8L22.7 373.9L24.2 373.4L25.7 373.8L27.2 373.9L28.7 373.7L30.2 373.4L31.7 373.6L33.2 373.4L34.7 373.5L36.2 374.0L37.7 373.8L39.2 373.8L40.7 373.9L42.2 373.9L43.7 373.8L45.2 373.8L46.7 373.8L48.2 373.8L49.7 373.8L51.2 373.8L52.7 373.5L54.2 373.8L55.7 373.7L57.2 373.9L58.7 373.5L60.2 373.5L61.7 373.4L63.2 373.9L64.7 373.9L66.2 373.8L67.7 373.6L69.2 373.9L70.7 373.9L72.2 373.7L73.7 373.6L75.2 373.6L76.7 373.7L78.2 373.6L79.7 373.7L81.2 373.8L82.7 374.0L84.2 373.4L85.7 373.7L87.2 373.4L88.7 373.5L90.2 373.9L91.7 373.7L93.2 374.0L94.7 373.7L96.2 373.4L97.7 373.6L99.2 373.8L100.7 374.0L102.2 374.0L103.7 373.7L105.2 373.6L106.7 373.5L108.2 373.8L109.7 373.5L111.2 373.5L112.7 373.4L114.2 373.4L115.7 373.8L117.2 373.5L118.7 374.0L120.2 373.5L121.7 373.9L123.2 373.5L124.7 373.4L126.2 373.8L127.7 373.5L129.2 373.8L130.7 373.5L132.2 373.4L133.7 373.9L135.2 373.8L136.7 373.9L138.2 373.8L139.7 373.5L141.2 373.8L142.7 373.8L144.2 373.7L145.7 374.0L147.2 373.6L148.7 374.0L150.2 373.8L151.7 373.4L153.2 373.4L154.7 373.8L156.2 373.9L157.7 373.4L159.2 373.6L160.7 373.8L162.2 373.5L163.7 373.9L165.2 373.7L166.7 373.4L168.2 373.6L169.7 373.7L171.2 373.7L172.7 373.8L174.2 373.5L175.7 373.9L177.2 373.6L178.7 373.8L180.2 373.8L181.7 373.7L183.2 373.6L184.7 373.9L186.2 374.0L187.7 373.9L189.2 373.7L190.7 373.6L192.2 373.4L193.7 374.0L195.2 373.8L196.7 373.9L198.2 373.6L199.7 373.8L201.2 374.0L202.7 373.9L204.2 373.8L205.7 373.6L207.2 373.7L208.7 373.9L210.2 373.6L211.7 373.8L213.2 373.8L214.7 373.9L216.2 373.9L217.7 373.6L219.2 373.4L220.7 373.6L222.2 373.7L223.7 373.8L225.2 373.9L226.7 373.9L228.2 373.4L229.7 373.9L231.2 373.9L232.7 373.9L234.2 373.7L235.7 373.6L237.2 373.9L238.7 373.9L240.2 373.8L241.7 373.9L243.2 373.6L244.7 373.5L246.2 373.7L247.7 373.9L249.2 373.5L250.7 373.9L252.2 374.0L253.7 373.5L255.2 373.8L256.7 373.8L258.2 373.7L259.7 373.5L261.2 373.6L262.7 373.9L264.2 373.9L265.7 373.7L267.2 373.5L268.7 373.9L270.2 373.9L271.7 373.5L273.2 373.7L274.7 373.9L276.2 373.9L277.7 373.7L279.2 373.7L280.7 373.8L282.2 373.5L283.7 373.5L285.2 373.5L286.7 373.8L288.2 373.6L289.7 373.7L291.2 373.6L292.7 373.7L294.2 373.5L295.7 373.4L297.2 374.0L298.7 373.6L300.2 373.5L301.7 373.8L303.2 373.9L304.7 373.5L306.2 373.8L307.7 373.6L309.2 373.7L310.7 373.4L312.2 373.4L313.7 374.0L315.2 373.9L316.7 373.7L318.2 373.7L319.7 373.6L321.2 373.9L322.7 373.7L324.2 374.0L325.7 373.9L327.2 373.9L328.7 374.0L330.2 373.6L331.7 373.4L333.2 373.5L334.7 373.5L336.2 373.5L337.7 373.4L339.2 373.7L340.7 373.9L342.2 373.7L343.7 374.0L345.2 373.9L346.7 373.4L348.2 373.8L349.7 373.6L351.2 373.5L352.7 374.0L354.2 373.6L355.7 373.7L357.2 373.8L358.7 374.0L360.2 373.8L361.7 373.6L363.2 373.7L364.7 373.5L366.2 374.0L367.7 374.0L369.2 373.5L370.7 373.4L372.2 373.6L373.7 373.6L375.2 373.9L376.7 373.9L378.2 373.9L379.7 373.4L381.2 373.9L382.7 373.8L384.2 373.8L385.7 374.0L387.2 373.4L388.7 373.5L390.2 373.9L391.7 374.0L393.2 373.8L394.7 373.6L396.2 373.8L397.7 373.9L399.2 373.5L400.7 373.6L402.2 373.6L403.7 373.5L405.2 373.7L406.7 373.5L408.2 373.5L409.7 373.5L411.2 373.8L412.7 373.4L414.2 373.8L415.7 373.5L417.2 373.4L418.7 374.0L420.0 373.5M420.0 432.3L421.5 432.2L423.0 432.2L424.5 431.8L426.0 432.0L427.5 431.8L429.0 432.3L430.5 432.2L432.0 432.1L433.5 432.0L435.0 431.9L436.5 432.2L438.0 432.0L439.5 432.1L441.0 431.8L442.5 431.8L444.0 431.7L445.5 432.1L447.0 432.0L448.5 431.8L450.0 432.2L451.5 431.9L453.0 431.9L454.5 431.8L456.0 431.9L457.5 432.2L459.0 431.9L460.5 431.8L462.0 432.0L463.5 431.9L465.0 432.2L466.5 431.8L468.0 432.3L469.5 431.7L471.0 432.2L472.5 432.1L474.0 431.8L475.5 432.0L477.0 431.9L478.5 431.9L480.0 431.8L481.5 431.9L483.0 432.3L484.5 432.3L486.0 432.3L487.5 431.8L489.0 431.9L490.5 432.2L492.0 431.7L493.5 432.1L495.0 431.9L496.5 432.3L498.0 431.7L499.5 432.2L501.0 431.9L502.5 431.8L504.0 431.7L505.5 432.2L507.0 432.0L508.5 431.8L510.0 432.0L511.5 432.2L513.0 431.8L514.5 432.0L516.0 431.8L517.5 431.8L519.0 432.2L520.5 432.1L522.0 431.8L523.5 431.7L525.0 431.8L526.5 432.1L528.0 432.0L529.5 431.9L531.0 431.8L532.5 432.1L534.0 432.1L535.5 432.2L537.0 432.0L538.5 431.8L540.0 431.7L541.5 432.1L543.0 431.9L544.5 432.1L546.0 431.7L547.5 432.2L549.0 431.9L550.5 432.2L552.0 432.2L553.5 432.0L555.0 431.7L556.5 432.2L558.0 432.0L559.5 432.2L561.0 431.9L562.5 431.8L564.0 432.2L565.5 431.9L567.0 431.8L568.5 431.9L570.0 432.1L571.5 431.7L573.0 432.0L574.5 432.0L576.0 432.0L577.5 431.8L579.0 432.1L580.5 432.2L582.0 432.2L583.5 431.9L585.0 432.1L586.5 431.9L588.0 432.2L589.5 431.7L591.0 432.2L592.5 432.3L594.0 432.0L595.5 432.0L597.0 432.0L598.5 432.0L600.0 431.7L601.5 432.3L603.0 431.8L604.5 431.8L606.0 431.8L607.5 431.9L609.0 432.2L610.5 431.7L612.0 431.8L613.5 432.1L615.0 431.8L616.5 431.7L618.0 432.1L619.5 432.0L621.0 432.0L622.5 432.1L624.0 431.8L625.5 432.2L627.0 432.1L628.5 431.7L630.0 431.8L631.5 432.0L633.0 432.0L634.5 431.9L636.0 431.8L637.5 431.9L639.0 431.8L640.5 432.1L642.0 432.2L643.5 431.8L645.0 432.0L646.5 432.1L648.0 431.8L649.5 432.2L651.0 432.3L652.5 431.9L654.0 432.0L655.5 432.2L657.0 432.0L658.5 431.9L660.0 432.3L661.5 432.2L663.0 431.9L664.5 431.8L666.0 431.9L667.5 432.0L669.0 432.3L670.5 432.2L672.0 432.2L673.5 432.2L675.0 432.2L676.5 431.7L678.0 432.0L679.5 432.3L681.0 432.3L682.5 431.8L684.0 432.0L685.5 432.1L687.0 431.9L688.5 432.0L690.0 431.7L691.5 432.0L693.0 432.0L694.5 431.7L696.0 431.8L697.5 432.3L699.0 432.2L700.5 432.3L702.0 432.1L703.5 432.2L705.0 432.2L706.5 432.2L708.0 431.7L709.5 432.1L711.0 431.9L712.5 432.1L714.0 431.9L715.5 432.0L717.0 432.3L718.5 432.1L720.0 431.9L721.5 432.0L723.0 432.0L724.5 432.3L726.0 431.9L727.5 431.9L729.0 432.1L730.5 431.8L732.0 432.1L733.5 432.3L735.0 432.0L736.5 431.9L738.0 432.0L739.5 432.0L741.0 431.8L742.5 431.8L744.0 431.8L745.5 431.9L747.0 431.9L748.5 431.9L750.0 431.8L751.5 431.8L753.0 432.0L754.5 432.2L756.0 432.1L757.5 432.0L759.0 432.1L760.5 431.8L762.0 432.1L763.5 432.0L765.0 432.0L766.5 432.1L768.0 432.0L769.5 431.9L771.0 431.8L772.5 431.8L774.0 432.0L775.5 431.9L777.0 432.1L778.5 431.7L780.0 431.9L781.5 432.2L783.0 431.8L784.5 432.0L786.0 432.0L787.5 431.9L789.0 432.3L790.5 431.9L792.0 432.2L793.5 431.8L795.0 431.7L796.5 432.2L798.0 432.0L799.5 431.7L801.0 431.9L802.5 432.0L804.0 432.1L805.5 431.8L807.0 431.8L808.5 432.3L810.0 432.1L811.5 431.8L813.0 431.9L814.5 431.9L816.0 432.1L817.5 432.1L819.0 432.2L820.5 432.2L822.0 432.0L823.5 432.1L825.0 432.1L826.5 432.2L828.0 432.0L829.5 432.2L831.0 432.1L832.5 432.2L834.0 431.8L835.5 432.2L837.0 431.7L838.5 432.2L840.0 432.1L841.5 432.0L843.0 432.3L844.5 432.0L846.0 432.0L847.5 432.2L849.0 432.2L850.5 432.1L852.0 431.9L853.5 432.0L855.0 432.0L856.5 432.1L858.0 431.9L859.5 431.9L861.0 432.0L862.5 431.9L864.0 431.9L865.5 432.2L867.0 432.2L868.5 432.0L869.5 432.0M869.5 373.5L871.0 373.6L872.5 373.5L874.0 373.7L875.5 373.7L877.0 373.5L878.5 374.0L880.0 373.6L881.5 373.9L883.0 373.9L884.5 374.0L886.0 373.5L887.5 373.7L889.0 373.9L890.5 373.4L892.0 373.4L893.5 373.7L895.0 373.7L896.5 374.0L898.0 373.9L899.5 373.7L901.0 374.0L902.5 373.7L904.0 373.7L905.5 373.8L907.0 373.6L908.5 373.6L910.0 373.8L911.5 373.6L913.0 374.0L914.5 373.8L916.0 373.7L917.5 373.5L919.0 373.6L920.5 373.6L922.0 373.7L923.5 373.7L925.0 373.9L926.5 374.0L928.0 373.7L929.5 373.7L931.0 373.8L932.5 374.0L934.0 373.6L935.5 373.7L937.0 373.9L938.5 373.5L940.0 373.6L941.5 374.0L943.0 373.9L944.5 373.7L946.0 373.5L947.5 373.9L949.0 373.8L950.5 373.9L952.0 374.0L953.5 373.9L955.0 373.7L956.5 373.5L958.0 373.6L959.5 373.7L961.0 373.7L962.5 373.5L964.0 373.5L965.5 373.8L967.0 373.8L968.5 373.6L970.0 374.0L971.5 373.8L973.0 373.4L974.5 373.6L976.0 373.9L977.5 373.6L979.0 373.8L980.5 373.4L982.0 373.6L983.5 373.9L985.0 373.8L986.5 373.8L988.0 373.5L989.5 373.7L991.0 373.7L992.5 373.6L994.0 373.8L995.5 373.7L997.0 374.0L998.5 373.7L1000.0 373.6L1001.5 373.5L1003.0 373.5L1004.5 373.9L1006.0 373.5L1007.5 373.5L1009.0 373.5L1010.5 373.7L1012.0 373.9L1013.5 373.8L1015.0 373.9L1016.5 373.4L1018.0 373.4L1019.5 373.9L1021.0 373.6L1022.5 373.8L1024.0 373.6L1025.5 373.5L1027.0 373.6L1028.5 373.5L1030.0 373.9L1031.5 373.7L1033.0 373.6L1034.5 373.7L1036.0 373.6L1037.5 373.4L1039.0 373.9L1040.5 373.7L1042.0 374.0L1043.5 373.7L1045.0 373.8L1046.5 373.5L1048.0 373.4L1049.5 374.0L1051.0 373.9L1052.5 373.6L1054.0 373.9L1055.5 373.9L1057.0 373.6L1058.5 373.8L1060.0 374.0L1061.5 373.7L1063.0 374.0L1064.5 373.5L1066.0 373.6L1067.5 373.8L1069.0 373.5L1070.5 373.6L1072.0 373.9L1073.5 373.7L1075.0 373.9L1076.5 373.5L1078.0 373.5L1079.5 373.6L1081.0 373.5L1082.5 374.0L1084.0 373.6L1085.5 373.7L1087.0 373.5L1088.5 373.7L1090.0 373.6L1091.5 373.6L1093.0 373.4L1094.5 373.5L1096.0 373.9L1097.5 373.6L1099.0 373.5L1100.5 373.5L1102.0 373.6L1103.5 373.5L1105.0 373.4L1106.5 373.8L1108.0 373.6L1109.5 373.5L1111.0 373.8L1112.5 373.5L1114.0 373.6L1115.5 373.9L1117.0 373.5L1118.5 373.7L1120.0 373.9L1121.5 373.9L1123.0 373.5L1124.5 373.6L1126.0 373.8L1127.5 373.6L1129.0 374.0L1130.5 373.5L1132.0 374.0L1133.5 373.7L1135.0 373.5L1136.5 373.7L1138.0 373.5L1139.5 373.8L1140.4 373.6" fill="none" stroke="#e8668c" stroke-width="1.30" stroke-opacity="0.85" stroke-linejoin="round"/>
<line x1="420.0" y1="373.7" x2="420.0" y2="435.0" stroke="#d83a68" stroke-width="1.3"/>
<line x1="869.5" y1="432.0" x2="869.5" y2="372.2" stroke="#d83a68" stroke-width="1.3"/>
<line x1="30" y1="579.8" x2="425" y2="579.8" stroke="#d31fd3" stroke-width="3.6"/>
<line x1="870" y1="579.8" x2="1140.4" y2="579.8" stroke="#d31fd3" stroke-width="3.6"/>
<path d="M425 579.8L430 571.9H865L868.8 579.8L865 587.8H430Z" fill="#000" stroke="#3b8f7c" stroke-width="1.6"/>
<path d="M865.5 574L869.6 579.8L865.5 586" fill="none" stroke="#d8323a" stroke-width="1.2"/>
<text x="616" y="585.4" font-family='"DejaVu Sans","Liberation Sans",sans-serif' font-weight="bold" font-size="14.6" fill="#f4f4f4" textLength="74.6" lengthAdjust="spacingAndGlyphs">Data:C4h</text>
</g>
<text x="1136.4" y="85.9" text-anchor="end" font-size="8.8" fill="#d2d24e">6 V</text>
<text x="1136.4" y="100.9" text-anchor="end" font-size="8.8" fill="#d2d24e">4 V</text>
<text x="1136.4" y="115.8" text-anchor="end" font-size="8.8" fill="#d2d24e">2 V</text>
<text x="1136.4" y="130.7" text-anchor="end" font-size="8.8" fill="#d2d24e">0 V</text>
<text x="1136.4" y="145.4" text-anchor="end" font-size="8.8" fill="#d2d24e">-2 V</text>
<text x="1136.4" y="160.4" text-anchor="end" font-size="8.8" fill="#d2d24e">-4 V</text>
<text x="1136.4" y="175.4" text-anchor="end" font-size="8.8" fill="#d2d24e">-6 V</text>
<text x="1136.4" y="190.5" text-anchor="end" font-size="8.8" fill="#d2d24e">-8 V</text>
<text x="1136.4" y="221.8" text-anchor="end" font-size="8.8" fill="#4aa597">4.8 V</text>
<text x="1136.4" y="236.6" text-anchor="end" font-size="8.8" fill="#4aa597">3.6 V</text>
<text x="1136.4" y="251.6" text-anchor="end" font-size="8.8" fill="#4aa597">2.4 V</text>
<text x="1136.4" y="266.5" text-anchor="end" font-size="8.8" fill="#4aa597">1.2 V</text>
<text x="1136.4" y="281.4" text-anchor="end" font-size="8.8" fill="#4aa597">0 V</text>
<text x="1136.4" y="296.1" text-anchor="end" font-size="8.8" fill="#4aa597">-1.2 V</text>
<text x="1136.4" y="311.2" text-anchor="end" font-size="8.8" fill="#4aa597">-2.4 V</text>
<text x="1136.4" y="326.2" text-anchor="end" font-size="8.8" fill="#4aa597">-3.6 V</text>
<text x="1136.4" y="341.5" text-anchor="end" font-size="8.8" fill="#4aa597">-4.8 V</text>
<text x="1136.4" y="376.6" text-anchor="end" font-size="8.8" fill="#b4294e">4.8 V</text>
<text x="1136.4" y="391.0" text-anchor="end" font-size="8.8" fill="#b4294e">3.6 V</text>
<text x="1136.4" y="406.0" text-anchor="end" font-size="8.8" fill="#b4294e">2.4 V</text>
<text x="1136.4" y="420.7" text-anchor="end" font-size="8.8" fill="#b4294e">1.2 V</text>
<text x="1136.4" y="435.6" text-anchor="end" font-size="8.8" fill="#b4294e">0 V</text>
<text x="1136.4" y="450.6" text-anchor="end" font-size="8.8" fill="#b4294e">-1.2 V</text>
<text x="1136.4" y="465.5" text-anchor="end" font-size="8.8" fill="#b4294e">-2.4 V</text>
<text x="1136.4" y="480.5" text-anchor="end" font-size="8.8" fill="#b4294e">-3.6 V</text>
<text x="1136.4" y="495.5" text-anchor="end" font-size="8.8" fill="#b4294e">-4.8 V</text>
<text x="99.7" y="651.8" text-anchor="middle" font-size="8.8" fill="#a9a9a9">-30 µs</text>
<text x="212.8" y="651.8" text-anchor="middle" font-size="8.8" fill="#a9a9a9">-20 µs</text>
<text x="325.9" y="651.8" text-anchor="middle" font-size="8.8" fill="#a9a9a9">-10 µs</text>
<text x="439.0" y="651.8" text-anchor="middle" font-size="8.8" fill="#a9a9a9">0 s</text>
<text x="552.1" y="651.8" text-anchor="middle" font-size="8.8" fill="#a9a9a9">10 µs</text>
<text x="665.2" y="651.8" text-anchor="middle" font-size="8.8" fill="#a9a9a9">20 µs</text>
<text x="778.3" y="651.8" text-anchor="middle" font-size="8.8" fill="#a9a9a9">30 µs</text>
<text x="891.4" y="651.8" text-anchor="middle" font-size="8.8" fill="#a9a9a9">40 µs</text>
<text x="1004.5" y="651.8" text-anchor="middle" font-size="8.8" fill="#a9a9a9">50 µs</text>
<text x="1117.6" y="651.8" text-anchor="middle" font-size="8.8" fill="#a9a9a9">60 µs</text>
<path d="M11.6 118.5H26.4L34.2 127.1L26.4 135.7H11.6Q10.4 135.7 10.4 134.5V119.7Q10.4 118.5 11.6 118.5Z" fill="#2b2b0c" stroke="#bcbc74" stroke-width="1.2"/>
<text x="19.6" y="130.1" text-anchor="middle" font-size="8.4" fill="#eaea9c" font-weight="bold">C 1</text>
<path d="M11.6 269.4H26.4L34.2 278.0L26.4 286.6H11.6Q10.4 286.6 10.4 285.4V270.6Q10.4 269.4 11.6 269.4Z" fill="#0b2c29" stroke="#3f9d92" stroke-width="1.2"/>
<text x="19.6" y="281.0" text-anchor="middle" font-size="8.4" fill="#a8e4dc" font-weight="bold">C 2</text>
<path d="M11.6 423.5H26.4L34.2 432.1L26.4 440.7H11.6Q10.4 440.7 10.4 439.5V424.7Q10.4 423.5 11.6 423.5Z" fill="#3a0a18" stroke="#c8285a" stroke-width="1.2"/>
<text x="19.6" y="435.1" text-anchor="middle" font-size="8.4" fill="#ffffff" font-weight="bold">C 3</text>
<path d="M11.6 572.6H26.4L34.2 580.0L26.4 587.4H11.6Q10.4 587.4 10.4 586.2V573.8Q10.4 572.6 11.6 572.6Z" fill="#caa4f6" stroke="#caa4f6" stroke-width="1.2"/>
<text x="22" y="582.7" text-anchor="middle" font-size="7.6" fill="#3a1460" font-weight="bold">B1</text>
<text x="42.4" y="570.4" font-size="12.4" fill="#d9b8ee" stroke="#d9b8ee" stroke-width="0.3" textLength="15.8" lengthAdjust="spacingAndGlyphs">SPI</text>
<rect x="42.6" y="574" width="25.2" height="11.6" fill="#4a4a4a" fill-opacity="0.8" stroke="#707070" stroke-width="0.8"/>
<path d="M50.6 580h8.8M55 575.8v8.4" stroke="#c0a8c0" stroke-width="1.3"/>
<path d="M432 51.6H445.6L438.8 58.2Z" fill="#e8924a"/>
<path d="M432.7 59.6H444.9V73H441.6L438.8 77.6L436 73H432.7Z" fill="#1c0e04" stroke="#e8924a" stroke-width="1.4" stroke-linejoin="round"/>
<text x="438.8" y="70.3" text-anchor="middle" font-size="10.2" font-weight="bold" fill="#f6f6f6">T</text>
<path d="M389.4 36H386.8V47.6H389.4M760.4 36H763V47.6H760.4M386.8 42.6H763" fill="none" stroke="#d6d6d6" stroke-width="1.3"/>
<path d="M524.2 32.6H534.6L529.4 37Z" fill="#e8924a"/>
<path d="M525.6 41H533.4V48.8H531.2L529.5 52.4L527.8 48.8H525.6Z" fill="#3a2a1c" stroke="#e8924a" stroke-width="1.2" stroke-linejoin="round"/>
<text x="529.5" y="47.4" text-anchor="middle" font-size="6.4" font-weight="bold" fill="#e6b48a">T</text>
<path d="M1112.6 57.4H1135.6V80.2Z" fill="#6f6f6f"/>
<circle cx="1130.2" cy="62.4" r="2.7" fill="none" stroke="#cfcfcf" stroke-width="1.2"/>
<path d="M1128.2 64.6L1122.6 70.4" stroke="#cfcfcf" stroke-width="1.5" stroke-linecap="round"/>
<path d="M1126.2 111.9L1133.4 104.8V110.4H1140.4V113.4H1133.4V119Z" fill="#f2f23c"/>
<circle cx="1148" cy="338" r="1.5" fill="#efefef"/>
<circle cx="1148" cy="344" r="1.5" fill="#efefef"/>
<circle cx="1148" cy="350" r="1.5" fill="#efefef"/>
</svg>
<div style="left:1152px;top:30px;width:121px;height:627px;background:#2c2c2c;border-top:1px solid #444;border-left:1px solid #3c3c3c;"></div>
<span class="t" style="left:1185.40px;top:30px;font-size:10.6px;line-height:12px;color:#f2f2f2;font-weight:bold;transform:scaleX(1.0317);transform-origin:0 0;">Add New...</span>
<div class="btn" style="left:1159.4px;top:46.8px;width:51.4px;height:29.6px;"></div>
<div class="btn" style="left:1216.8px;top:46.8px;width:51.4px;height:29.6px;"></div>
<div class="btn" style="left:1159.4px;top:83.6px;width:51.4px;height:29.6px;"></div>
<div class="btn" style="left:1216.8px;top:83.6px;width:51.4px;height:29.6px;"></div>
<div class="btn" style="left:1159.4px;top:120.4px;width:51.4px;height:29.6px;"></div>
<div class="btn" style="left:1216.8px;top:120.4px;width:51.4px;height:29.6px;"></div>
<div class="btn" style="left:1159.4px;top:159.4px;width:51.4px;height:29.6px;"></div>
<div class="btn" style="left:1216.8px;top:159.4px;width:51.4px;height:29.6px;"></div>
<span class="t" style="left:1168.30px;top:56px;font-size:10.2px;line-height:11px;color:#f0f0f0;-webkit-text-stroke:0.3px #f0f0f0;transform:scaleX(0.9328);transform-origin:0 0;">Cursors</span>
<span class="t" style="left:1225.60px;top:56px;font-size:10.2px;line-height:11px;color:#f0f0f0;-webkit-text-stroke:0.3px #f0f0f0;transform:scaleX(1.0386);transform-origin:0 0;">Callout</span>
<span class="t" style="left:1164.80px;top:92px;font-size:10.2px;line-height:11px;color:#f0f0f0;-webkit-text-stroke:0.3px #f0f0f0;transform:scaleX(1.0006);transform-origin:0 0;">Measure</span>
<span class="t" style="left:1227.00px;top:92px;font-size:10.2px;line-height:11px;color:#f0f0f0;-webkit-text-stroke:0.3px #f0f0f0;transform:scaleX(0.9340);transform-origin:0 0;">Search</span>
<span class="t" style="left:1169.30px;top:124px;font-size:10.2px;line-height:11px;color:#f0f0f0;-webkit-text-stroke:0.3px #f0f0f0;transform:scaleX(0.9260);transform-origin:0 0;">Results</span>
<span class="t" style="left:1173.00px;top:134px;font-size:10.2px;line-height:11px;color:#f0f0f0;-webkit-text-stroke:0.3px #f0f0f0;transform:scaleX(0.9845);transform-origin:0 0;">Table</span>
<span class="t" style="left:1233.00px;top:129px;font-size:10.2px;line-height:11px;color:#f0f0f0;-webkit-text-stroke:0.3px #f0f0f0;transform:scaleX(1.0401);transform-origin:0 0;">Plot</span>
<span class="t" style="left:1225.80px;top:168px;font-size:10.2px;line-height:11px;color:#f0f0f0;-webkit-text-stroke:0.3px #f0f0f0;transform:scaleX(1.0151);transform-origin:0 0;">More...</span>
<div style="left:1157px;top:154px;width:114px;height:1px;background:#3f3f3f;"></div>
<div style="left:1156px;top:194.6px;width:116px;height:1px;background:#454545;"></div>
<div style="left:1157.6px;top:198.4px;width:115.4px;height:458.6px;border:1px solid #353535;border-right:none;border-bottom:none;background:#2b2b2b;"></div>
<svg width="24" height="22" viewBox="0 0 24 22" style="left:1174px;top:163px"><rect x="3.4" y="3.4" width="14.4" height="13" fill="none" stroke="#dcdcdc" stroke-width="1.5" stroke-dasharray="2.1 1.5"/><circle cx="12.2" cy="8.8" r="2.7" fill="none" stroke="#e6e6e6" stroke-width="1.3"/><path d="M10.2 10.8L6.6 14.2" stroke="#e6e6e6" stroke-width="1.6" stroke-linecap="round"/><path d="M14.8 12.8V19.2L16.4 17.8L17.6 20.2L18.8 19.6L17.6 17.3L19.6 17.1Z" fill="#d8d8d8"/></svg>
<div class="bh" style="left:8.4px;top:661.3px;width:71.8px;height:13.200000000000045px;background:#4b4f20;"></div>
<div class="bb" style="left:8.4px;top:674.5px;width:71.8px;height:37.6px;background:#d2d2d2;"></div>
<span class="t" style="left:12.20px;top:662px;font-size:10.0px;line-height:11px;color:#e4ea5e;-webkit-text-stroke:0.35px #e4ea5e;transform:scaleX(0.9194);transform-origin:0 0;">Ch 1</span>
<span class="t" style="left:12.40px;top:676px;font-size:10.2px;line-height:11px;color:#1e1e1e;-webkit-text-stroke:0.15px #1e1e1e;transform:scaleX(0.9371);transform-origin:0 0;">2 V/div</span>
<span class="t" style="left:12.90px;top:701px;font-size:10.2px;line-height:11px;color:#1e1e1e;-webkit-text-stroke:0.15px #1e1e1e;transform:scaleX(0.8818);transform-origin:0 0;">1 GHz</span>
<svg width="12" height="9" viewBox="0 0 12 9" style="left:12.4px;top:688.4px"><path d="M1.4 7.6C0.6 3.4 3 1.2 5.4 1.2C8.2 1.2 10 3.6 9.8 6.6" fill="none" stroke="#3a3a3a" stroke-width="1.3"/><circle cx="4.6" cy="3.6" r="1.1" fill="none" stroke="#3a3a3a" stroke-width="0.8"/><ellipse cx="9.6" cy="6.4" rx="1.5" ry="2" fill="#efefef" stroke="#3a3a3a" stroke-width="0.8"/></svg>
<span class="t" style="left:56.40px;top:701px;font-size:6.6px;line-height:7px;color:#222;font-weight:bold;">B</span>
<span class="t" style="left:60.80px;top:704px;font-size:5.2px;line-height:6px;color:#222;font-weight:bold;">w</span>
<div class="bh" style="left:84.2px;top:661.3px;width:71.8px;height:13.200000000000045px;background:#1f4d4c;"></div>
<div class="bb" style="left:84.2px;top:674.5px;width:71.8px;height:37.6px;background:#d2d2d2;"></div>
<span class="t" style="left:88.10px;top:662px;font-size:10.0px;line-height:11px;color:#56d2c6;-webkit-text-stroke:0.35px #56d2c6;transform:scaleX(0.9147);transform-origin:0 0;">Ch 2</span>
<span class="t" style="left:88.50px;top:676px;font-size:10.2px;line-height:11px;color:#1e1e1e;-webkit-text-stroke:0.15px #1e1e1e;transform:scaleX(0.9018);transform-origin:0 0;">1 V/div</span>
<span class="t" style="left:88.70px;top:701px;font-size:10.2px;line-height:11px;color:#1e1e1e;-webkit-text-stroke:0.15px #1e1e1e;transform:scaleX(0.8680);transform-origin:0 0;">1 GHz</span>
<svg width="12" height="9" viewBox="0 0 12 9" style="left:88.2px;top:688.4px"><path d="M1.4 7.6C0.6 3.4 3 1.2 5.4 1.2C8.2 1.2 10 3.6 9.8 6.6" fill="none" stroke="#3a3a3a" stroke-width="1.3"/><circle cx="4.6" cy="3.6" r="1.1" fill="none" stroke="#3a3a3a" stroke-width="0.8"/><ellipse cx="9.6" cy="6.4" rx="1.5" ry="2" fill="#efefef" stroke="#3a3a3a" stroke-width="0.8"/></svg>
<span class="t" style="left:132.20px;top:701px;font-size:6.6px;line-height:7px;color:#222;font-weight:bold;">B</span>
<span class="t" style="left:136.60px;top:704px;font-size:5.2px;line-height:6px;color:#222;font-weight:bold;">w</span>
<div class="bh" style="left:159.8px;top:661.3px;width:71.4px;height:13.200000000000045px;background:#55232e;"></div>
<div class="bb" style="left:159.8px;top:674.5px;width:71.4px;height:37.6px;background:#d2d2d2;"></div>
<span class="t" style="left:162.80px;top:662px;font-size:10.0px;line-height:11px;color:#ffd9e2;-webkit-text-stroke:0.35px #ffd9e2;transform:scaleX(0.9242);transform-origin:0 0;">Ch 3</span>
<span class="t" style="left:164.20px;top:676px;font-size:10.2px;line-height:11px;color:#1e1e1e;-webkit-text-stroke:0.15px #1e1e1e;transform:scaleX(0.8986);transform-origin:0 0;">1 V/div</span>
<span class="t" style="left:164.20px;top:701px;font-size:10.2px;line-height:11px;color:#1e1e1e;-webkit-text-stroke:0.15px #1e1e1e;transform:scaleX(0.8576);transform-origin:0 0;">1 GHz</span>
<svg width="12" height="9" viewBox="0 0 12 9" style="left:163.8px;top:688.4px"><path d="M1.4 7.6C0.6 3.4 3 1.2 5.4 1.2C8.2 1.2 10 3.6 9.8 6.6" fill="none" stroke="#3a3a3a" stroke-width="1.3"/><circle cx="4.6" cy="3.6" r="1.1" fill="none" stroke="#3a3a3a" stroke-width="0.8"/><ellipse cx="9.6" cy="6.4" rx="1.5" ry="2" fill="#efefef" stroke="#3a3a3a" stroke-width="0.8"/></svg>
<span class="t" style="left:207.60px;top:701px;font-size:6.6px;line-height:7px;color:#222;font-weight:bold;">B</span>
<span class="t" style="left:212.00px;top:704px;font-size:5.2px;line-height:6px;color:#222;font-weight:bold;">w</span>
<div class="bh" style="left:235.2px;top:661.3px;width:71.2px;height:13.200000000000045px;background:#64963a;"></div>
<div class="bb" style="left:235.2px;top:674.5px;width:71.2px;height:37.6px;background:#8b8b8b;"></div>
<span class="t" style="left:238.80px;top:662px;font-size:10.0px;line-height:11px;color:#1b6a22;-webkit-text-stroke:0.35px #1b6a22;transform:scaleX(0.9100);transform-origin:0 0;">Ch 4</span>
<span class="t" style="left:239.30px;top:676px;font-size:10.2px;line-height:11px;color:#4e4e4e;transform:scaleX(0.9265);transform-origin:0 0;">100 mV/div</span>
<span class="t" style="left:239.50px;top:688px;font-size:10.2px;line-height:11px;color:#4e4e4e;transform:scaleX(0.9215);transform-origin:0 0;">1 MΩ</span>
<span class="t" style="left:238.90px;top:701px;font-size:10.2px;line-height:11px;color:#4e4e4e;transform:scaleX(0.9142);transform-origin:0 0;">500 MHz</span>
<span class="t" style="left:282.80px;top:701px;font-size:6.6px;line-height:7px;color:#444;font-weight:bold;">B</span>
<span class="t" style="left:287.20px;top:704px;font-size:5.2px;line-height:6px;color:#444;font-weight:bold;">w</span>
<div class="bh" style="left:310.4px;top:661.3px;width:71.2px;height:13.200000000000045px;background:#a768bb;"></div>
<div class="bb" style="left:310.4px;top:674.5px;width:71.2px;height:37.6px;background:#d2d2d2;"></div>
<span class="t" style="left:313.80px;top:662px;font-size:10.0px;line-height:11px;color:#3a1764;-webkit-text-stroke:0.35px #3a1764;transform:scaleX(0.8924);transform-origin:0 0;">Bus 1</span>
<span class="t" style="left:313.52px;top:676px;font-size:10.2px;line-height:11px;color:#1e1e1e;-webkit-text-stroke:0.15px #1e1e1e;transform:scaleX(0.7400);transform-origin:0 0;">SPI</span>
<div style="left:601.4px;top:659.6px;width:26.2px;height:52.6px;border:1px solid #4c4c4c;border-radius:5px;background:linear-gradient(#2c2c2c,#303030 60%,#292929);box-shadow:0 0 0 1px #1d1d1d;"></div>
<div style="left:604.1999999999999px;top:664.2px;width:20.6px;height:1.6px;background:#dfa052;"></div>
<span class="t" style="left:611.70px;top:682px;font-size:13.8px;line-height:15px;color:#eeeeee;transform:scaleX(0.7834);transform-origin:0 0;">5</span>
<div style="left:631.4px;top:659.6px;width:26.2px;height:52.6px;border:1px solid #4c4c4c;border-radius:5px;background:linear-gradient(#2c2c2c,#303030 60%,#292929);box-shadow:0 0 0 1px #1d1d1d;"></div>
<div style="left:634.1999999999999px;top:664.2px;width:20.6px;height:1.6px;background:#34349a;"></div>
<span class="t" style="left:641.30px;top:682px;font-size:13.8px;line-height:15px;color:#eeeeee;transform:scaleX(0.8617);transform-origin:0 0;">6</span>
<div style="left:665px;top:660px;width:1px;height:52px;background:#3d3d3d;"></div>
<div style="left:672.4px;top:659.6px;width:26.2px;height:52.6px;border:1px solid #4c4c4c;border-radius:5px;background:linear-gradient(#2c2c2c,#303030 60%,#292929);box-shadow:0 0 0 1px #1d1d1d;"></div>
<div style="left:675.1999999999999px;top:664.2px;width:20.6px;height:1.6px;background:#cf8740;"></div>
<span class="t" style="left:676.90px;top:673px;font-size:10px;line-height:11px;color:#eeeeee;transform:scaleX(0.9494);transform-origin:0 0;">Add</span>
<span class="t" style="left:675.60px;top:684px;font-size:10px;line-height:11px;color:#eeeeee;transform:scaleX(0.9626);transform-origin:0 0;">New</span>
<span class="t" style="left:674.10px;top:694px;font-size:10px;line-height:11px;color:#eeeeee;transform:scaleX(0.9843);transform-origin:0 0;">Math</span>
<div style="left:702.5px;top:659.6px;width:26.2px;height:52.6px;border:1px solid #4c4c4c;border-radius:5px;background:linear-gradient(#2c2c2c,#303030 60%,#292929);box-shadow:0 0 0 1px #1d1d1d;"></div>
<div style="left:705.3px;top:664.2px;width:20.6px;height:1.6px;background:#c9c9c9;"></div>
<span class="t" style="left:706.90px;top:673px;font-size:10px;line-height:11px;color:#eeeeee;transform:scaleX(0.9438);transform-origin:0 0;">Add</span>
<span class="t" style="left:705.80px;top:684px;font-size:10px;line-height:11px;color:#eeeeee;transform:scaleX(0.9476);transform-origin:0 0;">New</span>
<span class="t" style="left:708.60px;top:694px;font-size:10px;line-height:11px;color:#eeeeee;transform:scaleX(0.8718);transform-origin:0 0;">Ref</span>
<div style="left:732.7px;top:659.6px;width:26.2px;height:52.6px;border:1px solid #4c4c4c;border-radius:5px;background:linear-gradient(#2c2c2c,#303030 60%,#292929);box-shadow:0 0 0 1px #1d1d1d;"></div>
<div style="left:735.5px;top:664.2px;width:20.6px;height:1.6px;background:#b45fd4;"></div>
<span class="t" style="left:737.00px;top:673px;font-size:10px;line-height:11px;color:#eeeeee;transform:scaleX(0.9494);transform-origin:0 0;">Add</span>
<span class="t" style="left:736.00px;top:684px;font-size:10px;line-height:11px;color:#eeeeee;transform:scaleX(0.9476);transform-origin:0 0;">New</span>
<span class="t" style="left:738.00px;top:694px;font-size:10px;line-height:11px;color:#eeeeee;transform:scaleX(0.8580);transform-origin:0 0;">Bus</span>
<div style="left:765.5px;top:660px;width:1px;height:52px;background:#3d3d3d;"></div>
<div style="left:773px;top:659.6px;width:26.2px;height:52.6px;border:1px solid #4c4c4c;border-radius:5px;background:linear-gradient(#2c2c2c,#303030 60%,#292929);box-shadow:0 0 0 1px #1d1d1d;"></div>
<div style="left:775.8px;top:664.2px;width:20.6px;height:1.6px;background:#3e3e3e;"></div>
<span class="t" style="left:775.40px;top:684px;font-size:10px;line-height:11px;color:#eeeeee;transform:scaleX(0.9550);transform-origin:0 0;">DVM</span>
<div style="left:806.4px;top:659.6px;width:26.2px;height:52.6px;border:1px solid #4c4c4c;border-radius:5px;background:linear-gradient(#2c2c2c,#303030 60%,#292929);box-shadow:0 0 0 1px #1d1d1d;"></div>
<div style="left:809.1999999999999px;top:664.2px;width:20.6px;height:1.6px;background:#3e3e3e;"></div>
<span class="t" style="left:810.10px;top:684px;font-size:10px;line-height:11px;color:#eeeeee;transform:scaleX(0.8856);transform-origin:0 0;">AFG</span>
<div style="left:840px;top:660px;width:1px;height:52px;background:#3d3d3d;"></div>
<div class="bh" style="left:847.8px;top:662.5px;width:131.2px;height:12.0px;background:#555555;"></div>
<div class="bb" style="left:847.8px;top:674.5px;width:131.2px;height:37.6px;background:#d2d2d2;"></div>
<span class="t" style="left:850.80px;top:663px;font-size:10.0px;line-height:11px;color:#f2f2f2;-webkit-text-stroke:0.3px #f2f2f2;transform:scaleX(1.0822);transform-origin:0 0;">Horizontal</span>
<span class="t" style="left:850.80px;top:676px;font-size:10.2px;line-height:11px;color:#1e1e1e;-webkit-text-stroke:0.15px #1e1e1e;transform:scaleX(0.9134);transform-origin:0 0;">10 µs/div</span>
<span class="t" style="left:921.30px;top:676px;font-size:10.2px;line-height:11px;color:#1e1e1e;-webkit-text-stroke:0.15px #1e1e1e;transform:scaleX(0.9075);transform-origin:0 0;">100 µs</span>
<span class="t" style="left:850.80px;top:688px;font-size:10.2px;line-height:11px;color:#1e1e1e;-webkit-text-stroke:0.15px #1e1e1e;transform:scaleX(0.8805);transform-origin:0 0;">SR: 1.5625 GS/s</span>
<span class="t" style="left:920.80px;top:688px;font-size:10.2px;line-height:11px;color:#1e1e1e;-webkit-text-stroke:0.15px #1e1e1e;transform:scaleX(0.9649);transform-origin:0 0;">640 ps/pt</span>
<span class="t" style="left:850.80px;top:701px;font-size:10.2px;line-height:11px;color:#1e1e1e;-webkit-text-stroke:0.15px #1e1e1e;transform:scaleX(0.9153);transform-origin:0 0;">RL: 156.25 kpts</span>
<span class="t" style="left:930.40px;top:701px;font-size:10.2px;line-height:11px;color:#1e1e1e;-webkit-text-stroke:0.15px #1e1e1e;transform:scaleX(0.9755);transform-origin:0 0;">38%</span>
<svg width="6" height="8" viewBox="0 0 6 8" style="left:920.6px;top:702px"><path d="M0.4 0.4H5.6V4.6L3 7.6L0.4 4.6Z" fill="#2a2a2a"/><path d="M1.8 1.6H4.2M3 1.6V4.6" stroke="#ddd" stroke-width="0.9"/></svg>
<div class="bh" style="left:983.8px;top:662.5px;width:105.6px;height:12.0px;background:#555555;"></div>
<div class="bb" style="left:983.8px;top:674.5px;width:105.6px;height:37.6px;background:#d2d2d2;"></div>
<span class="t" style="left:987.90px;top:663px;font-size:10.0px;line-height:11px;color:#f2f2f2;-webkit-text-stroke:0.3px #f2f2f2;transform:scaleX(1.0383);transform-origin:0 0;">Trigger</span>
<div style="left:986.6px;top:676.1px;width:20.6px;height:11.4px;background:#eeee2c;border:1.2px solid #4c4c12;border-radius:4.5px;"></div>
<span class="t" style="left:994.93px;top:676px;font-size:9.6px;line-height:11px;color:#222;font-weight:bold;transform:scaleX(0.7400);transform-origin:0 0;">1</span>
<svg width="14" height="10" viewBox="0 0 14 10" style="left:1012px;top:676.6px"><path d="M0.2 7.9H4.3L9.4 1.8H11.8" fill="none" stroke="#4a4a4a" stroke-width="1"/></svg>
<span class="t" style="left:1030.90px;top:676px;font-size:10.2px;line-height:11px;color:#1e1e1e;-webkit-text-stroke:0.15px #1e1e1e;transform:scaleX(0.9329);transform-origin:0 0;">2.08 V</span>
<div class="bh" style="left:1093.8px;top:662.5px;width:99.2px;height:12.0px;background:#555555;"></div>
<div class="bb" style="left:1093.8px;top:674.5px;width:99.2px;height:37.6px;background:#d2d2d2;"></div>
<span class="t" style="left:1097.80px;top:663px;font-size:10.0px;line-height:11px;color:#f2f2f2;-webkit-text-stroke:0.3px #f2f2f2;transform:scaleX(1.0651);transform-origin:0 0;">Acquisition</span>
<span class="t" style="left:1097.30px;top:676px;font-size:10.2px;line-height:11px;color:#1e1e1e;-webkit-text-stroke:0.15px #1e1e1e;transform:scaleX(0.9531);transform-origin:0 0;">Auto,</span>
<span class="t" style="left:1151.10px;top:676px;font-size:10.2px;line-height:11px;color:#1e1e1e;-webkit-text-stroke:0.15px #1e1e1e;transform:scaleX(0.9005);transform-origin:0 0;">Analyze</span>
<span class="t" style="left:1097.30px;top:688px;font-size:10.2px;line-height:11px;color:#1e1e1e;-webkit-text-stroke:0.15px #1e1e1e;transform:scaleX(0.9171);transform-origin:0 0;">Sample: 12 bits</span>
<span class="t" style="left:1097.30px;top:701px;font-size:10.2px;line-height:11px;color:#1e1e1e;-webkit-text-stroke:0.15px #1e1e1e;transform:scaleX(0.9385);transform-origin:0 0;">8.041 kAcqs</span>
<div style="left:1200.6px;top:657px;width:1.4px;height:56px;background:#424242;"></div>
<div style="left:1152px;top:656.6px;width:121px;height:1px;background:#444;"></div>
<div style="left:1208px;top:659.3px;width:60.2px;height:24.2px;background:linear-gradient(#3dea22,#33e01a);border-radius:4.5px;"></div>
<span class="t" style="left:1216.70px;top:665px;font-size:8.6px;line-height:10px;color:#eafbe6;font-weight:bold;transform:scaleX(1.0798);transform-origin:0 0;">Triggered</span>
<div style="left:154px;top:209.8px;width:383.8px;height:440.2px;background:#8a8a8c;"></div>
<div style="left:154px;top:209.8px;width:383.8px;height:35.6px;background:linear-gradient(#5a5a5f 85%,#5e5e60 88%);"></div>
<svg width="28" height="12" viewBox="0 0 28 12" style="left:331.6px;top:649.6px"><path d="M0 0H28L14 11Z" fill="#8a8a8c"/></svg>
<span class="t" style="left:163.00px;top:221px;font-size:11px;line-height:12px;color:#f2f2f2;-webkit-text-stroke:0.1px #f2f2f2;transform:scaleX(0.9059);transform-origin:0 0;">BUS 1</span>
<svg width="24" height="24" viewBox="0 0 24 24" style="left:499.4px;top:215.8px"><circle cx="12" cy="12" r="9.6" fill="none" stroke="#cdcdcd" stroke-width="1.7"/><text x="12" y="17" text-anchor="middle" font-size="14" font-weight="bold" fill="#d6d6d6" font-family='"Liberation Sans",sans-serif'>?</text></svg>
<span class="t" style="left:163.00px;top:252px;font-size:10.5px;line-height:12px;color:#0c0c0c;-webkit-text-stroke:0.5px #0c0c0c;transform:scaleX(0.9321);transform-origin:0 0;">Display</span>
<div class="cy" style="left:165.6px;top:267.2px;width:41.2px;height:28.8px;border-radius:4px 0 0 4px;"></div>
<div class="gbtn" style="left:206.8px;top:267.2px;width:13.4px;height:28.8px;border-radius:0 4px 4px 0;box-shadow:0 1px 1px rgba(0,0,0,.25);"></div>
<span class="t" style="left:179.40px;top:276px;font-size:10.2px;line-height:11px;color:#0b2a45;-webkit-text-stroke:0.5px #0b2a45;transform:scaleX(0.9620);transform-origin:0 0;">On</span>
<span class="t" style="left:251.50px;top:252px;font-size:10.5px;line-height:12px;color:#0c0c0c;-webkit-text-stroke:0.5px #0c0c0c;transform:scaleX(0.9349);transform-origin:0 0;">Label</span>
<div class="inp" style="left:254px;top:267.4px;width:108px;height:28.6px;"></div>
<span class="t" style="left:257.50px;top:275px;font-size:10.8px;line-height:12px;color:#141414;-webkit-text-stroke:0.5px #141414;transform:scaleX(0.7419);transform-origin:0 0;">SPI</span>
<span class="t" style="left:393.60px;top:252px;font-size:10.5px;line-height:12px;color:#0c0c0c;-webkit-text-stroke:0.5px #0c0c0c;transform:scaleX(0.9658);transform-origin:0 0;">Position</span>
<div class="inp" style="left:396px;top:267.4px;width:90.6px;height:28.6px;"></div>
<span class="t" style="left:457.30px;top:276px;font-size:10.2px;line-height:11px;color:#141414;-webkit-text-stroke:0.5px #141414;transform:scaleX(0.9579);transform-origin:0 0;">0 divs</span>
<div class="gbtn" style="left:492.2px;top:267.4px;width:34.2px;height:28.6px;border-radius:4px;box-shadow:0 1px 1px rgba(0,0,0,.25);"></div>
<span class="t" style="left:496.00px;top:271px;font-size:10.2px;line-height:11px;color:#141414;-webkit-text-stroke:0.5px #141414;transform:scaleX(0.9823);transform-origin:0 0;">Set to</span>
<span class="t" style="left:505.80px;top:281px;font-size:10.2px;line-height:11px;color:#141414;-webkit-text-stroke:0.5px #141414;transform:scaleX(1.0422);transform-origin:0 0;">0</span>
<span class="t" style="left:163.00px;top:305px;font-size:10.5px;line-height:12px;color:#0c0c0c;-webkit-text-stroke:0.5px #0c0c0c;transform:scaleX(0.9019);transform-origin:0 0;">Bus Type</span>
<div style="left:165.6px;top:320.4px;width:98.6px;height:28.8px;background:linear-gradient(#dcdcdc,#d0d0d0);border-radius:1px;"></div>
<svg width="8" height="6" viewBox="0 0 8 6" style="left:251.0px;top:333.0px"><path d="M0.9 0.9H6.7L3.8 5Z" fill="#949494"/></svg>
<span class="t" style="left:167.90px;top:328px;font-size:10.8px;line-height:12px;color:#141414;-webkit-text-stroke:0.5px #141414;transform:scaleX(0.7534);transform-origin:0 0;">SPI</span>
<span class="t" style="left:307.30px;top:304px;font-size:10.5px;line-height:12px;color:#0c0c0c;-webkit-text-stroke:0.5px #0c0c0c;transform:scaleX(0.9906);transform-origin:0 0;">Data Inputs</span>
<div class="cy" style="left:309.8px;top:319.4px;width:45.8px;height:28.8px;border-radius:4px 0 0 4px;"></div>
<div class="gbtn" style="left:355.6px;top:319.4px;width:46px;height:28.8px;border-radius:0 4px 4px 0;box-shadow:0 1px 1px rgba(0,0,0,.25);"></div>
<span class="t" style="left:322.10px;top:328px;font-size:10.2px;line-height:11px;color:#0b2a45;-webkit-text-stroke:0.5px #0b2a45;transform:scaleX(0.9856);transform-origin:0 0;">One</span>
<span class="t" style="left:370.60px;top:328px;font-size:10.2px;line-height:11px;color:#141414;-webkit-text-stroke:0.5px #141414;transform:scaleX(0.9991);transform-origin:0 0;">Two</span>
<span class="t" style="left:431.30px;top:304px;font-size:10.5px;line-height:12px;color:#0c0c0c;-webkit-text-stroke:0.5px #0c0c0c;transform:scaleX(0.9783);transform-origin:0 0;">Framing</span>
<div class="cy" style="left:433.6px;top:319.4px;width:46.2px;height:28.8px;border-radius:4px 0 0 4px;"></div>
<div class="gbtn" style="left:479.8px;top:319.4px;width:46.4px;height:28.8px;border-radius:0 4px 4px 0;box-shadow:0 1px 1px rgba(0,0,0,.25);"></div>
<span class="t" style="left:450.56px;top:328px;font-size:10.2px;line-height:11px;color:#0b2a45;-webkit-text-stroke:0.5px #0b2a45;transform:scaleX(0.7400);transform-origin:0 0;">SS</span>
<span class="t" style="left:496.00px;top:328px;font-size:10.2px;line-height:11px;color:#141414;-webkit-text-stroke:0.5px #141414;transform:scaleX(0.9987);transform-origin:0 0;">Idle</span>
<span class="t" style="left:222.70px;top:367px;font-size:10.5px;line-height:12px;color:#0c0c0c;-webkit-text-stroke:0.5px #0c0c0c;transform:scaleX(0.9163);transform-origin:0 0;">Source</span>
<span class="t" style="left:325.70px;top:367px;font-size:10.5px;line-height:12px;color:#0c0c0c;-webkit-text-stroke:0.5px #0c0c0c;transform:scaleX(0.9620);transform-origin:0 0;">Threshold</span>
<span class="t" style="left:431.30px;top:367px;font-size:10.5px;line-height:12px;color:#0c0c0c;-webkit-text-stroke:0.5px #0c0c0c;transform:scaleX(0.9852);transform-origin:0 0;">Polarity</span>
<span class="t" style="left:162.50px;top:385px;font-size:10.5px;line-height:12px;color:#0c0c0c;-webkit-text-stroke:0.5px #0c0c0c;transform:scaleX(0.9159);transform-origin:0 0;">SCLK</span>
<span class="t" style="left:162.80px;top:396px;font-size:10.5px;line-height:12px;color:#0c0c0c;-webkit-text-stroke:0.5px #0c0c0c;transform:scaleX(1.0316);transform-origin:0 0;">Input</span>
<span class="t" style="left:162.50px;top:425px;font-size:10.5px;line-height:12px;color:#0c0c0c;-webkit-text-stroke:0.5px #0c0c0c;transform:scaleX(0.9313);transform-origin:0 0;">SS Input</span>
<span class="t" style="left:162.80px;top:454px;font-size:10.5px;line-height:12px;color:#0c0c0c;-webkit-text-stroke:0.5px #0c0c0c;transform:scaleX(0.9366);transform-origin:0 0;">Data</span>
<span class="t" style="left:162.80px;top:465px;font-size:10.5px;line-height:12px;color:#0c0c0c;-webkit-text-stroke:0.5px #0c0c0c;transform:scaleX(1.0316);transform-origin:0 0;">Input</span>
<div style="left:224.6px;top:381.8px;width:78.6px;height:28.8px;background:linear-gradient(#dcdcdc,#d0d0d0);border-radius:1px;"></div>
<svg width="8" height="6" viewBox="0 0 8 6" style="left:290.0px;top:394.40000000000003px"><path d="M0.9 0.9H6.7L3.8 5Z" fill="#949494"/></svg>
<span class="t" style="left:227.90px;top:390px;font-size:10.2px;line-height:11px;color:#141414;-webkit-text-stroke:0.5px #141414;transform:scaleX(0.9153);transform-origin:0 0;">Ch 1</span>
<div style="left:224.6px;top:416.2px;width:78.6px;height:28.8px;background:linear-gradient(#dcdcdc,#d0d0d0);border-radius:1px;"></div>
<svg width="8" height="6" viewBox="0 0 8 6" style="left:290.0px;top:428.8px"><path d="M0.9 0.9H6.7L3.8 5Z" fill="#949494"/></svg>
<span class="t" style="left:227.90px;top:425px;font-size:10.2px;line-height:11px;color:#141414;-webkit-text-stroke:0.5px #141414;transform:scaleX(0.9153);transform-origin:0 0;">Ch 3</span>
<div style="left:224.6px;top:450.8px;width:78.6px;height:28.8px;background:linear-gradient(#dcdcdc,#d0d0d0);border-radius:1px;"></div>
<svg width="8" height="6" viewBox="0 0 8 6" style="left:290.0px;top:463.40000000000003px"><path d="M0.9 0.9H6.7L3.8 5Z" fill="#949494"/></svg>
<span class="t" style="left:227.90px;top:459px;font-size:10.2px;line-height:11px;color:#141414;-webkit-text-stroke:0.5px #141414;transform:scaleX(0.9153);transform-origin:0 0;">Ch 2</span>
<div class="inp" style="left:327.8px;top:381.8px;width:81.4px;height:28.8px;"></div>
<span class="t" style="left:391.00px;top:391px;font-size:10.2px;line-height:11px;color:#141414;-webkit-text-stroke:0.5px #141414;transform:scaleX(0.9608);transform-origin:0 0;">2 V</span>
<div class="inp" style="left:327.8px;top:416.2px;width:81.4px;height:28.8px;"></div>
<span class="t" style="left:391.00px;top:425px;font-size:10.2px;line-height:11px;color:#141414;-webkit-text-stroke:0.5px #141414;transform:scaleX(0.9608);transform-origin:0 0;">2 V</span>
<div style="left:325.8px;top:448.6px;width:85.6px;height:33px;border:1.8px solid #7dbcc2;border-radius:5px;background:#9fb4b6;"></div>
<div class="inp" style="left:327.8px;top:450.8px;width:81.4px;height:28.8px;"></div>
<div style="left:391.2px;top:460.0px;width:15px;height:10.8px;background:#2c86b4;"></div>
<span class="t" style="left:391.00px;top:460px;font-size:10.2px;line-height:11px;color:#f4f8ff;-webkit-text-stroke:0.5px #f4f8ff;transform:scaleX(0.9608);transform-origin:0 0;">2 V</span>
<svg width="12" height="12" viewBox="0 0 12 12" style="left:331.6px;top:459.40000000000003px"><circle cx="6" cy="6" r="5.5" fill="#4779ae"/><text x="6" y="9.2" text-anchor="middle" font-size="8.8" font-weight="bold" fill="#fff" font-family='"Liberation Sans",sans-serif'>A</text></svg>
<div class="cy" style="left:434.2px;top:381.8px;width:46.2px;height:28.8px;border-radius:4px 0 0 4px;"></div>
<div class="gbtn" style="left:480.4px;top:381.8px;width:45.8px;height:28.8px;border-radius:0 4px 4px 0;box-shadow:0 1px 1px rgba(0,0,0,.25);"></div>
<svg width="92" height="29" viewBox="0 0 92 29" style="left:434.2px;top:381.8px"><path d="M10.2 21.6H18.4L28.2 7.6H33.6" fill="none" stroke="#1d3f73" stroke-width="1.5"/><path d="M58.8 7.6H65.2L75.2 21.6H81.6" fill="none" stroke="#2a2f4e" stroke-width="1.5"/></svg>
<div class="gbtn" style="left:434.2px;top:416.2px;width:46.2px;height:28.8px;border-radius:4px 0 0 4px;box-shadow:0 1px 1px rgba(0,0,0,.25);"></div>
<div class="cy" style="left:480.4px;top:416.2px;width:45.8px;height:28.8px;border-radius:0 4px 4px 0;"></div>
<div class="cy" style="left:434.2px;top:450.8px;width:46.2px;height:28.8px;border-radius:4px 0 0 4px;"></div>
<div class="gbtn" style="left:480.4px;top:450.8px;width:45.8px;height:28.8px;border-radius:0 4px 4px 0;box-shadow:0 1px 1px rgba(0,0,0,.25);"></div>
<span class="t" style="left:441.20px;top:419px;font-size:10.2px;line-height:11px;color:#141414;-webkit-text-stroke:0.5px #141414;transform:scaleX(1.0254);transform-origin:0 0;">Active</span>
<span class="t" style="left:445.10px;top:430px;font-size:10.2px;line-height:11px;color:#141414;-webkit-text-stroke:0.5px #141414;transform:scaleX(1.0162);transform-origin:0 0;">High</span>
<span class="t" style="left:490.40px;top:419px;font-size:10.2px;line-height:11px;color:#0b2a45;-webkit-text-stroke:0.5px #0b2a45;transform:scaleX(1.0254);transform-origin:0 0;">Active</span>
<span class="t" style="left:496.00px;top:430px;font-size:10.2px;line-height:11px;color:#0b2a45;-webkit-text-stroke:0.5px #0b2a45;transform:scaleX(0.9617);transform-origin:0 0;">Low</span>
<span class="t" style="left:441.20px;top:454px;font-size:10.2px;line-height:11px;color:#0b2a45;-webkit-text-stroke:0.5px #0b2a45;transform:scaleX(1.0254);transform-origin:0 0;">Active</span>
<span class="t" style="left:445.10px;top:464px;font-size:10.2px;line-height:11px;color:#0b2a45;-webkit-text-stroke:0.5px #0b2a45;transform:scaleX(1.0162);transform-origin:0 0;">High</span>
<span class="t" style="left:490.40px;top:454px;font-size:10.2px;line-height:11px;color:#141414;-webkit-text-stroke:0.5px #141414;transform:scaleX(1.0254);transform-origin:0 0;">Active</span>
<span class="t" style="left:496.00px;top:464px;font-size:10.2px;line-height:11px;color:#141414;-webkit-text-stroke:0.5px #141414;transform:scaleX(0.9617);transform-origin:0 0;">Low</span>
<span class="t" style="left:162.50px;top:490px;font-size:10.5px;line-height:12px;color:#0c0c0c;-webkit-text-stroke:0.5px #0c0c0c;transform:scaleX(0.9617);transform-origin:0 0;">Word Size</span>
<div class="inp" style="left:165.6px;top:505.2px;width:61.4px;height:29px;"></div>
<span class="t" style="left:198.40px;top:514px;font-size:10.2px;line-height:11px;color:#141414;-webkit-text-stroke:0.5px #141414;transform:scaleX(1.0091);transform-origin:0 0;">8 bits</span>
<span class="t" style="left:385.40px;top:490px;font-size:10.5px;line-height:12px;color:#0c0c0c;-webkit-text-stroke:0.5px #0c0c0c;transform:scaleX(0.9757);transform-origin:0 0;">Display Format</span>
<div style="left:387.6px;top:505.6px;width:139px;height:28.8px;background:linear-gradient(#dcdcdc,#d0d0d0);border-radius:1px;"></div>
<svg width="8" height="6" viewBox="0 0 8 6" style="left:513.4px;top:518.2px"><path d="M0.9 0.9H6.7L3.8 5Z" fill="#949494"/></svg>
<span class="t" style="left:391.00px;top:514px;font-size:10.2px;line-height:11px;color:#141414;-webkit-text-stroke:0.5px #141414;transform:scaleX(0.8752);transform-origin:0 0;">Bus</span>
<span class="t" style="left:162.50px;top:542px;font-size:10.5px;line-height:12px;color:#0c0c0c;-webkit-text-stroke:0.5px #0c0c0c;transform:scaleX(1.0024);transform-origin:0 0;">Bit Order</span>
<div class="cy" style="left:165.6px;top:558px;width:59px;height:29.2px;border-radius:4px 0 0 4px;"></div>
<div class="gbtn" style="left:224.6px;top:558px;width:59.8px;height:29.2px;border-radius:0 4px 4px 0;box-shadow:0 1px 1px rgba(0,0,0,.25);"></div>
<span class="t" style="left:175.40px;top:566px;font-size:10.2px;line-height:11px;color:#0b2a45;-webkit-text-stroke:0.5px #0b2a45;transform:scaleX(0.9514);transform-origin:0 0;">MS First</span>
<span class="t" style="left:240.10px;top:566px;font-size:10.2px;line-height:11px;color:#141414;-webkit-text-stroke:0.5px #141414;transform:scaleX(0.9135);transform-origin:0 0;">LS First</span>
<span class="t" style="left:385.40px;top:542px;font-size:10.5px;line-height:12px;color:#0c0c0c;-webkit-text-stroke:0.5px #0c0c0c;transform:scaleX(0.9745);transform-origin:0 0;">Decode Format</span>
<div style="left:387.6px;top:558px;width:139px;height:29.2px;background:linear-gradient(#dcdcdc,#d0d0d0);border-radius:1px;"></div>
<svg width="8" height="6" viewBox="0 0 8 6" style="left:513.4px;top:570.6px"><path d="M0.9 0.9H6.7L3.8 5Z" fill="#949494"/></svg>
<span class="t" style="left:391.00px;top:566px;font-size:10.2px;line-height:11px;color:#141414;-webkit-text-stroke:0.5px #141414;transform:scaleX(0.9363);transform-origin:0 0;">Hex</span>
<svg width="10" height="14" viewBox="0 0 10 14" style="left:507.6px;top:437.4px"><path d="M0.8 0.8V10.8L3.2 8.6L5 12.6L6.8 11.8L5 7.9H8.2Z" fill="#0a0a0a" stroke="#f4f4f4" stroke-width="0.9" stroke-linejoin="round"/></svg>
</div></body></html>
